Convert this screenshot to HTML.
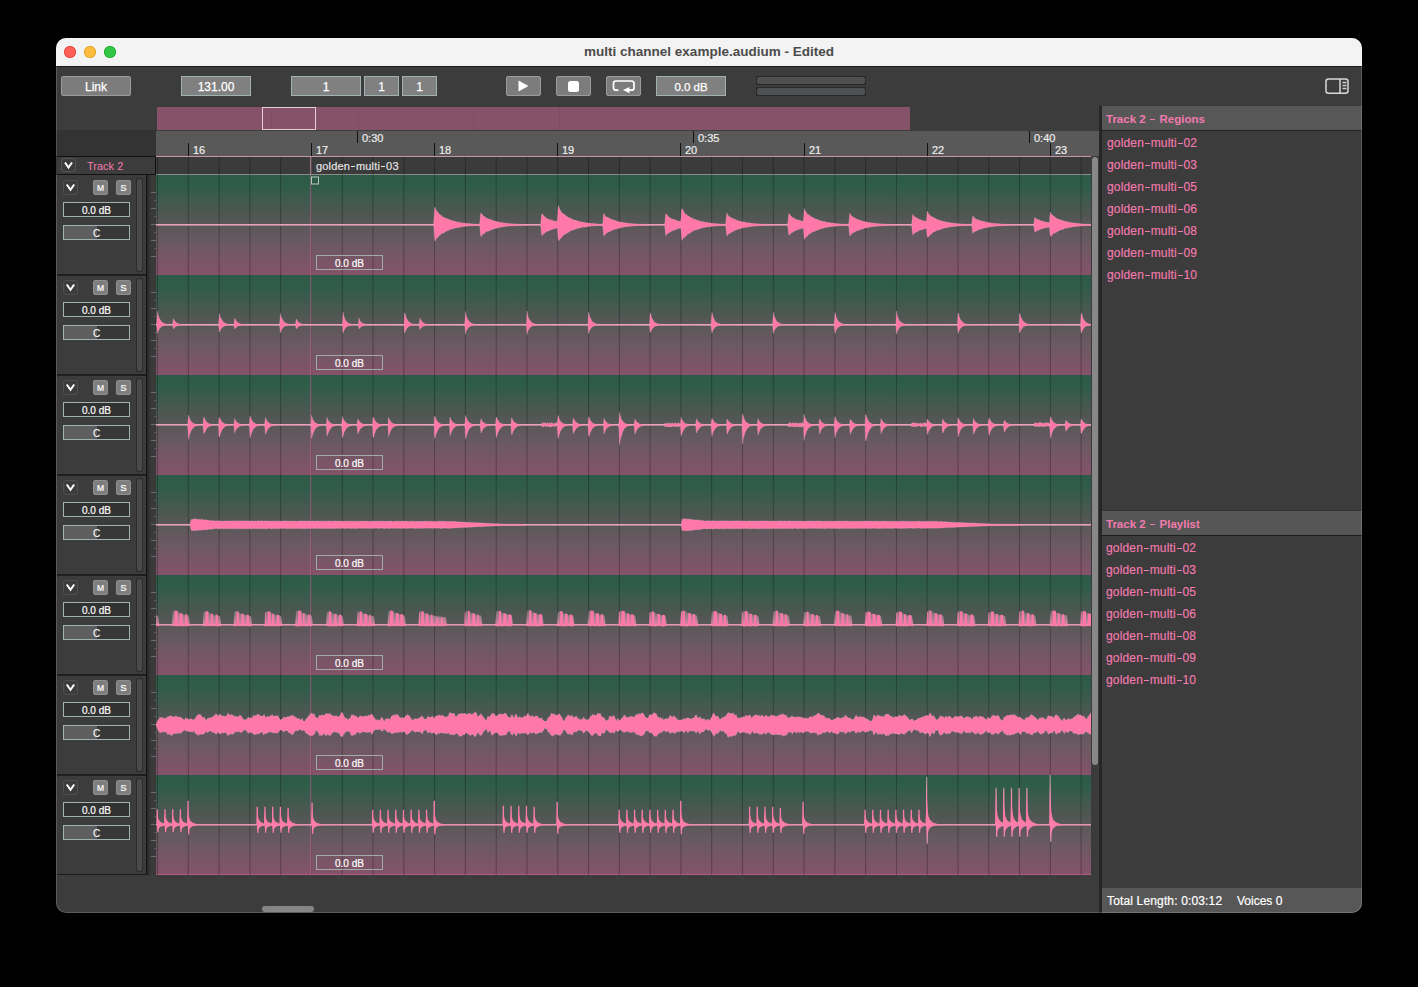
<!DOCTYPE html>
<html><head><meta charset="utf-8">
<style>
*{margin:0;padding:0;box-sizing:border-box}
html,body{width:1418px;height:987px;background:#000;overflow:hidden;font-family:"Liberation Sans",sans-serif}
.a{position:absolute;white-space:nowrap}
#win{position:absolute;left:56px;top:38px;width:1306px;height:875px;border-radius:10px;overflow:hidden;background:#3c3c3c}
#bord{position:absolute;left:56px;top:38px;width:1306px;height:875px;border-radius:10px;box-shadow:inset 0 0 0 1px rgba(255,255,255,0.16);pointer-events:none}
</style></head><body>
<div id="win">
<div class="a " style="left:0px;top:0px;width:1306px;height:28px;background:#f3f3f3"></div>
<div class="a " style="left:0px;top:28px;width:1306px;height:1px;background:#1b1b1b"></div>
<div class="a" style="left:8px;top:8px;width:12px;height:12px;border-radius:50%;background:#fe5f57;box-shadow:inset 0 0 0 0.8px #e0443e"></div>
<div class="a" style="left:28px;top:8px;width:12px;height:12px;border-radius:50%;background:#fdbc40;box-shadow:inset 0 0 0 0.8px #dea123"></div>
<div class="a" style="left:48px;top:8px;width:12px;height:12px;border-radius:50%;background:#33c748;box-shadow:inset 0 0 0 0.8px #1aab29"></div>
<div class="a " style="left:0px;top:0px;width:1306px;height:28px;text-align:center;line-height:27px;font-weight:bold;font-size:13.5px;color:#4b4b4b">multi channel example.audium - Edited</div>
<div class="a " style="left:5px;top:38px;width:70px;height:20px;background:#7c7c7c;border:1px solid #9b9b9b;border-radius:2px"></div>
<div class="a " style="left:5px;top:38px;width:70px;height:20px;color:#fff;font-size:12px;text-align:center;line-height:22px;-webkit-text-stroke:0.25px #fff">Link</div>
<div class="a " style="left:125px;top:38px;width:70px;height:20px;background:#808080;border:1px solid #a2b2b2;color:#fff;font-size:12px;text-align:center;line-height:20px;-webkit-text-stroke:0.25px #fff">131.00</div>
<div class="a " style="left:235px;top:38px;width:70px;height:20px;background:#808080;border:1px solid #a2b2b2;color:#fff;font-size:12px;text-align:center;line-height:20px;-webkit-text-stroke:0.25px #fff">1</div>
<div class="a " style="left:308px;top:38px;width:35px;height:20px;background:#808080;border:1px solid #a2b2b2;color:#fff;font-size:12px;text-align:center;line-height:20px;-webkit-text-stroke:0.25px #fff">1</div>
<div class="a " style="left:346px;top:38px;width:35px;height:20px;background:#808080;border:1px solid #a2b2b2;color:#fff;font-size:12px;text-align:center;line-height:20px;-webkit-text-stroke:0.25px #fff">1</div>
<div class="a " style="left:450px;top:38px;width:35px;height:20px;background:#7c7c7c;border:1px solid #9b9b9b;border-radius:2px"><svg width="35" height="20" style="position:absolute;left:-1px;top:-1px"><path d="M12.5 4.5 L12.5 15.5 L22.5 10 Z" fill="#fff"/></svg></div>
<div class="a " style="left:500px;top:38px;width:35px;height:20px;background:#7c7c7c;border:1px solid #9b9b9b;border-radius:2px"><svg width="35" height="20" style="position:absolute;left:-1px;top:-1px"><rect x="12" y="5" width="11" height="11" rx="2.5" fill="#fff"/></svg></div>
<div class="a " style="left:550px;top:38px;width:35px;height:20px;background:#7c7c7c;border:1px solid #9b9b9b;border-radius:2px"><svg width="35" height="20" style="position:absolute;left:-1px;top:-1px"><path d="M12.5 14.2 H10 Q7.5 14.2 7.5 11.7 V7.5 Q7.5 5 10 5 H25.5 Q28 5 28 7.5 V11.7 Q28 14.2 25.5 14.2 H23" stroke="#fff" stroke-width="1.7" fill="none"/><path d="M23.5 11 L23.5 17.2 L17 14.1 Z" fill="#fff"/></svg></div>
<div class="a " style="left:600px;top:38px;width:70px;height:20px;background:#808080;border:1px solid #a2b2b2;color:#fff;font-size:11.5px;text-align:center;line-height:20px;-webkit-text-stroke:0.25px #fff">0.0 dB</div>
<div class="a " style="left:700px;top:38px;width:110px;height:9px;background:#2a2a2a"></div>
<div class="a " style="left:701px;top:39px;width:108px;height:7px;background:#4e5052;border-radius:2px"></div>
<div class="a " style="left:700px;top:49px;width:110px;height:9px;background:#2a2a2a"></div>
<div class="a " style="left:701px;top:50px;width:108px;height:7px;background:#4e5052;border-radius:2px"></div>
<svg class="a" style="left:1269px;top:40px" width="24" height="17"><rect x="1" y="0.9" width="22" height="14.4" rx="2.5" stroke="#d8d8d8" stroke-width="1.5" fill="none"/><line x1="15" y1="1" x2="15" y2="15.3" stroke="#d8d8d8" stroke-width="1.5"/><path d="M17.5 4.5h4M17.5 7.5h4M17.5 10.5h4" stroke="#cfcfcf" stroke-width="1.3"/></svg>
<div class="a " style="left:101px;top:69px;width:753px;height:23px;background:#85526a"></div>
<div class="a " style="left:215px;top:69px;width:1px;height:23px;background:rgba(0,0,0,0.05)"></div>
<div class="a " style="left:302px;top:69px;width:1px;height:23px;background:rgba(0,0,0,0.05)"></div>
<div class="a " style="left:417px;top:69px;width:1px;height:23px;background:rgba(0,0,0,0.05)"></div>
<div class="a " style="left:503px;top:69px;width:1px;height:23px;background:rgba(0,0,0,0.05)"></div>
<div class="a " style="left:206px;top:69px;width:54px;height:23px;border:1.5px solid #e6cdd6"></div>
<div class="a " style="left:0px;top:92px;width:100px;height:27px;background:#333"></div>
<div class="a " style="left:100px;top:93px;width:943px;height:25px;background:#595959"></div>
<div class="a " style="left:100px;top:118px;width:935px;height:1px;background:#c496a8"></div>
<div class="a " style="left:132px;top:105px;width:1px;height:13px;background:#111"></div>
<div class="a " style="left:137px;top:105px;width:25px;height:13px;color:#eee;font-size:11px;line-height:15px;-webkit-text-stroke:0.2px #eee">16</div>
<div class="a " style="left:255px;top:105px;width:1px;height:13px;background:#111"></div>
<div class="a " style="left:260px;top:105px;width:25px;height:13px;color:#eee;font-size:11px;line-height:15px;-webkit-text-stroke:0.2px #eee">17</div>
<div class="a " style="left:378px;top:105px;width:1px;height:13px;background:#111"></div>
<div class="a " style="left:383px;top:105px;width:25px;height:13px;color:#eee;font-size:11px;line-height:15px;-webkit-text-stroke:0.2px #eee">18</div>
<div class="a " style="left:501px;top:105px;width:1px;height:13px;background:#111"></div>
<div class="a " style="left:506px;top:105px;width:25px;height:13px;color:#eee;font-size:11px;line-height:15px;-webkit-text-stroke:0.2px #eee">19</div>
<div class="a " style="left:624px;top:105px;width:1px;height:13px;background:#111"></div>
<div class="a " style="left:629px;top:105px;width:25px;height:13px;color:#eee;font-size:11px;line-height:15px;-webkit-text-stroke:0.2px #eee">20</div>
<div class="a " style="left:748px;top:105px;width:1px;height:13px;background:#111"></div>
<div class="a " style="left:753px;top:105px;width:25px;height:13px;color:#eee;font-size:11px;line-height:15px;-webkit-text-stroke:0.2px #eee">21</div>
<div class="a " style="left:871px;top:105px;width:1px;height:13px;background:#111"></div>
<div class="a " style="left:876px;top:105px;width:25px;height:13px;color:#eee;font-size:11px;line-height:15px;-webkit-text-stroke:0.2px #eee">22</div>
<div class="a " style="left:994px;top:105px;width:1px;height:13px;background:#111"></div>
<div class="a " style="left:999px;top:105px;width:25px;height:13px;color:#eee;font-size:11px;line-height:15px;-webkit-text-stroke:0.2px #eee">23</div>
<div class="a " style="left:301px;top:93px;width:1px;height:12px;background:#111"></div>
<div class="a " style="left:306px;top:93px;width:35px;height:12px;color:#eee;font-size:11px;line-height:14px;-webkit-text-stroke:0.2px #eee">0:30</div>
<div class="a " style="left:637px;top:93px;width:1px;height:12px;background:#111"></div>
<div class="a " style="left:642px;top:93px;width:35px;height:12px;color:#eee;font-size:11px;line-height:14px;-webkit-text-stroke:0.2px #eee">0:35</div>
<div class="a " style="left:973px;top:93px;width:1px;height:12px;background:#111"></div>
<div class="a " style="left:978px;top:93px;width:35px;height:12px;color:#eee;font-size:11px;line-height:14px;-webkit-text-stroke:0.2px #eee">0:40</div>
<div class="a " style="left:0px;top:118px;width:100px;height:19px;background:#111"></div>
<div class="a " style="left:1px;top:119px;width:98px;height:17px;background:#3c3c3c"></div>
<div class="a " style="left:5px;top:120px;width:15px;height:14px;border:1px solid #555;border-radius:3px"></div>
<svg class="a" style="left:5px;top:120px" width="15" height="14"><path d="M4 4.5 L7.5 9.5 L11 4.5" stroke="#fff" stroke-width="2" fill="none"/></svg>
<div class="a " style="left:31px;top:120px;width:63px;height:16px;color:#f27bae;font-size:11px;line-height:17px">Track 2</div>
<div class="a " style="left:100px;top:119px;width:935px;height:17px;background:#3b3b3b"></div>
<div class="a " style="left:100px;top:136px;width:935px;height:1px;background:#8c8c8c"></div>
<div class="a " style="left:1035px;top:119px;width:8px;height:718px;background:#3b3b3b"></div>
<div class="a " style="left:1036px;top:119px;width:6px;height:608px;background:#888;border-radius:3px"></div>
<div class="a " style="left:0px;top:137px;width:90px;height:100px;background:#3c3c3c"></div>
<div class="a " style="left:90px;top:137px;width:1px;height:100px;background:#131313"></div>
<div class="a " style="left:91px;top:137px;width:9px;height:100px;background:linear-gradient(to right,#262626,#393939 40%,#3a3a3a 85%,#363636)"></div>
<div class="a " style="left:7px;top:142px;width:15px;height:15px;border:1px solid #4f4f4f;border-radius:3px"></div>
<svg class="a" style="left:7px;top:142px" width="15" height="15"><path d="M3.8 4.5 L7.5 9.8 L11.2 4.5" stroke="#fff" stroke-width="2" fill="none"/></svg>
<div class="a " style="left:37px;top:142px;width:15px;height:15px;background:#7e7e7e;border:1px solid #8e8e8e;border-radius:2px;color:#fff;font-size:8.5px;text-align:center;line-height:14px;-webkit-text-stroke:0.2px #fff">M</div>
<div class="a " style="left:60px;top:142px;width:15px;height:15px;background:#7e7e7e;border:1px solid #8e8e8e;border-radius:2px;color:#fff;font-size:9.5px;text-align:center;line-height:14px;-webkit-text-stroke:0.2px #fff">S</div>
<div class="a " style="left:7px;top:164px;width:67px;height:15px;background:#323232;border:1px solid #a2b2b2;color:#fff;font-size:10px;text-align:center;line-height:15px;-webkit-text-stroke:0.2px #fff">0.0 dB</div>
<div class="a " style="left:7px;top:187px;width:67px;height:15px;background:#383838;border:1px solid #a2b2b2"></div>
<div class="a " style="left:8px;top:188px;width:33px;height:13px;background:#5e5e5e"></div>
<div class="a " style="left:7px;top:187px;width:67px;height:15px;color:#fff;font-size:10px;text-align:center;line-height:17px;-webkit-text-stroke:0.1px #fff">C</div>
<div class="a " style="left:80px;top:140px;width:7px;height:94px;background:#2c2c2c;border-radius:2px"></div>
<div class="a " style="left:81px;top:141px;width:5px;height:92px;background:#4a4a4a;border-radius:2px"></div>
<div class="a " style="left:95px;top:154px;width:5px;height:1px;background:#6a6a6a"></div>
<div class="a " style="left:98px;top:162px;width:2px;height:1px;background:#5a5a5a"></div>
<div class="a " style="left:95px;top:170px;width:5px;height:1px;background:#6a6a6a"></div>
<div class="a " style="left:98px;top:178px;width:2px;height:1px;background:#5a5a5a"></div>
<div class="a " style="left:95px;top:186px;width:5px;height:1px;background:#6a6a6a"></div>
<div class="a " style="left:98px;top:194px;width:2px;height:1px;background:#5a5a5a"></div>
<div class="a " style="left:95px;top:202px;width:5px;height:1px;background:#6a6a6a"></div>
<div class="a " style="left:98px;top:210px;width:2px;height:1px;background:#5a5a5a"></div>
<div class="a " style="left:95px;top:218px;width:5px;height:1px;background:#6a6a6a"></div>
<div class="a " style="left:100px;top:137px;width:935px;height:100px;background:linear-gradient(#2d5b47 0%,#305c4a 12%,#4f5752 40%,#5a5859 50%,#6c5962 70%,#85526a 100%)"></div>
<div class="a " style="left:0px;top:237px;width:90px;height:100px;background:#3c3c3c"></div>
<div class="a " style="left:90px;top:237px;width:1px;height:100px;background:#131313"></div>
<div class="a " style="left:91px;top:237px;width:9px;height:100px;background:linear-gradient(to right,#262626,#393939 40%,#3a3a3a 85%,#363636)"></div>
<div class="a " style="left:7px;top:242px;width:15px;height:15px;border:1px solid #4f4f4f;border-radius:3px"></div>
<svg class="a" style="left:7px;top:242px" width="15" height="15"><path d="M3.8 4.5 L7.5 9.8 L11.2 4.5" stroke="#fff" stroke-width="2" fill="none"/></svg>
<div class="a " style="left:37px;top:242px;width:15px;height:15px;background:#7e7e7e;border:1px solid #8e8e8e;border-radius:2px;color:#fff;font-size:8.5px;text-align:center;line-height:14px;-webkit-text-stroke:0.2px #fff">M</div>
<div class="a " style="left:60px;top:242px;width:15px;height:15px;background:#7e7e7e;border:1px solid #8e8e8e;border-radius:2px;color:#fff;font-size:9.5px;text-align:center;line-height:14px;-webkit-text-stroke:0.2px #fff">S</div>
<div class="a " style="left:7px;top:264px;width:67px;height:15px;background:#323232;border:1px solid #a2b2b2;color:#fff;font-size:10px;text-align:center;line-height:15px;-webkit-text-stroke:0.2px #fff">0.0 dB</div>
<div class="a " style="left:7px;top:287px;width:67px;height:15px;background:#383838;border:1px solid #a2b2b2"></div>
<div class="a " style="left:8px;top:288px;width:33px;height:13px;background:#5e5e5e"></div>
<div class="a " style="left:7px;top:287px;width:67px;height:15px;color:#fff;font-size:10px;text-align:center;line-height:17px;-webkit-text-stroke:0.1px #fff">C</div>
<div class="a " style="left:80px;top:240px;width:7px;height:94px;background:#2c2c2c;border-radius:2px"></div>
<div class="a " style="left:81px;top:241px;width:5px;height:92px;background:#4a4a4a;border-radius:2px"></div>
<div class="a " style="left:95px;top:254px;width:5px;height:1px;background:#6a6a6a"></div>
<div class="a " style="left:98px;top:262px;width:2px;height:1px;background:#5a5a5a"></div>
<div class="a " style="left:95px;top:270px;width:5px;height:1px;background:#6a6a6a"></div>
<div class="a " style="left:98px;top:278px;width:2px;height:1px;background:#5a5a5a"></div>
<div class="a " style="left:95px;top:286px;width:5px;height:1px;background:#6a6a6a"></div>
<div class="a " style="left:98px;top:294px;width:2px;height:1px;background:#5a5a5a"></div>
<div class="a " style="left:95px;top:302px;width:5px;height:1px;background:#6a6a6a"></div>
<div class="a " style="left:98px;top:310px;width:2px;height:1px;background:#5a5a5a"></div>
<div class="a " style="left:95px;top:318px;width:5px;height:1px;background:#6a6a6a"></div>
<div class="a " style="left:100px;top:237px;width:935px;height:100px;background:linear-gradient(#2d5b47 0%,#305c4a 12%,#4f5752 40%,#5a5859 50%,#6c5962 70%,#85526a 100%)"></div>
<div class="a " style="left:0px;top:337px;width:90px;height:100px;background:#3c3c3c"></div>
<div class="a " style="left:90px;top:337px;width:1px;height:100px;background:#131313"></div>
<div class="a " style="left:91px;top:337px;width:9px;height:100px;background:linear-gradient(to right,#262626,#393939 40%,#3a3a3a 85%,#363636)"></div>
<div class="a " style="left:7px;top:342px;width:15px;height:15px;border:1px solid #4f4f4f;border-radius:3px"></div>
<svg class="a" style="left:7px;top:342px" width="15" height="15"><path d="M3.8 4.5 L7.5 9.8 L11.2 4.5" stroke="#fff" stroke-width="2" fill="none"/></svg>
<div class="a " style="left:37px;top:342px;width:15px;height:15px;background:#7e7e7e;border:1px solid #8e8e8e;border-radius:2px;color:#fff;font-size:8.5px;text-align:center;line-height:14px;-webkit-text-stroke:0.2px #fff">M</div>
<div class="a " style="left:60px;top:342px;width:15px;height:15px;background:#7e7e7e;border:1px solid #8e8e8e;border-radius:2px;color:#fff;font-size:9.5px;text-align:center;line-height:14px;-webkit-text-stroke:0.2px #fff">S</div>
<div class="a " style="left:7px;top:364px;width:67px;height:15px;background:#323232;border:1px solid #a2b2b2;color:#fff;font-size:10px;text-align:center;line-height:15px;-webkit-text-stroke:0.2px #fff">0.0 dB</div>
<div class="a " style="left:7px;top:387px;width:67px;height:15px;background:#383838;border:1px solid #a2b2b2"></div>
<div class="a " style="left:8px;top:388px;width:33px;height:13px;background:#5e5e5e"></div>
<div class="a " style="left:7px;top:387px;width:67px;height:15px;color:#fff;font-size:10px;text-align:center;line-height:17px;-webkit-text-stroke:0.1px #fff">C</div>
<div class="a " style="left:80px;top:340px;width:7px;height:94px;background:#2c2c2c;border-radius:2px"></div>
<div class="a " style="left:81px;top:341px;width:5px;height:92px;background:#4a4a4a;border-radius:2px"></div>
<div class="a " style="left:95px;top:354px;width:5px;height:1px;background:#6a6a6a"></div>
<div class="a " style="left:98px;top:362px;width:2px;height:1px;background:#5a5a5a"></div>
<div class="a " style="left:95px;top:370px;width:5px;height:1px;background:#6a6a6a"></div>
<div class="a " style="left:98px;top:378px;width:2px;height:1px;background:#5a5a5a"></div>
<div class="a " style="left:95px;top:386px;width:5px;height:1px;background:#6a6a6a"></div>
<div class="a " style="left:98px;top:394px;width:2px;height:1px;background:#5a5a5a"></div>
<div class="a " style="left:95px;top:402px;width:5px;height:1px;background:#6a6a6a"></div>
<div class="a " style="left:98px;top:410px;width:2px;height:1px;background:#5a5a5a"></div>
<div class="a " style="left:95px;top:418px;width:5px;height:1px;background:#6a6a6a"></div>
<div class="a " style="left:100px;top:337px;width:935px;height:100px;background:linear-gradient(#2d5b47 0%,#305c4a 12%,#4f5752 40%,#5a5859 50%,#6c5962 70%,#85526a 100%)"></div>
<div class="a " style="left:0px;top:437px;width:90px;height:100px;background:#3c3c3c"></div>
<div class="a " style="left:90px;top:437px;width:1px;height:100px;background:#131313"></div>
<div class="a " style="left:91px;top:437px;width:9px;height:100px;background:linear-gradient(to right,#262626,#393939 40%,#3a3a3a 85%,#363636)"></div>
<div class="a " style="left:7px;top:442px;width:15px;height:15px;border:1px solid #4f4f4f;border-radius:3px"></div>
<svg class="a" style="left:7px;top:442px" width="15" height="15"><path d="M3.8 4.5 L7.5 9.8 L11.2 4.5" stroke="#fff" stroke-width="2" fill="none"/></svg>
<div class="a " style="left:37px;top:442px;width:15px;height:15px;background:#7e7e7e;border:1px solid #8e8e8e;border-radius:2px;color:#fff;font-size:8.5px;text-align:center;line-height:14px;-webkit-text-stroke:0.2px #fff">M</div>
<div class="a " style="left:60px;top:442px;width:15px;height:15px;background:#7e7e7e;border:1px solid #8e8e8e;border-radius:2px;color:#fff;font-size:9.5px;text-align:center;line-height:14px;-webkit-text-stroke:0.2px #fff">S</div>
<div class="a " style="left:7px;top:464px;width:67px;height:15px;background:#323232;border:1px solid #a2b2b2;color:#fff;font-size:10px;text-align:center;line-height:15px;-webkit-text-stroke:0.2px #fff">0.0 dB</div>
<div class="a " style="left:7px;top:487px;width:67px;height:15px;background:#383838;border:1px solid #a2b2b2"></div>
<div class="a " style="left:8px;top:488px;width:33px;height:13px;background:#5e5e5e"></div>
<div class="a " style="left:7px;top:487px;width:67px;height:15px;color:#fff;font-size:10px;text-align:center;line-height:17px;-webkit-text-stroke:0.1px #fff">C</div>
<div class="a " style="left:80px;top:440px;width:7px;height:94px;background:#2c2c2c;border-radius:2px"></div>
<div class="a " style="left:81px;top:441px;width:5px;height:92px;background:#4a4a4a;border-radius:2px"></div>
<div class="a " style="left:95px;top:454px;width:5px;height:1px;background:#6a6a6a"></div>
<div class="a " style="left:98px;top:462px;width:2px;height:1px;background:#5a5a5a"></div>
<div class="a " style="left:95px;top:470px;width:5px;height:1px;background:#6a6a6a"></div>
<div class="a " style="left:98px;top:478px;width:2px;height:1px;background:#5a5a5a"></div>
<div class="a " style="left:95px;top:486px;width:5px;height:1px;background:#6a6a6a"></div>
<div class="a " style="left:98px;top:494px;width:2px;height:1px;background:#5a5a5a"></div>
<div class="a " style="left:95px;top:502px;width:5px;height:1px;background:#6a6a6a"></div>
<div class="a " style="left:98px;top:510px;width:2px;height:1px;background:#5a5a5a"></div>
<div class="a " style="left:95px;top:518px;width:5px;height:1px;background:#6a6a6a"></div>
<div class="a " style="left:100px;top:437px;width:935px;height:100px;background:linear-gradient(#2d5b47 0%,#305c4a 12%,#4f5752 40%,#5a5859 50%,#6c5962 70%,#85526a 100%)"></div>
<div class="a " style="left:0px;top:537px;width:90px;height:100px;background:#3c3c3c"></div>
<div class="a " style="left:90px;top:537px;width:1px;height:100px;background:#131313"></div>
<div class="a " style="left:91px;top:537px;width:9px;height:100px;background:linear-gradient(to right,#262626,#393939 40%,#3a3a3a 85%,#363636)"></div>
<div class="a " style="left:7px;top:542px;width:15px;height:15px;border:1px solid #4f4f4f;border-radius:3px"></div>
<svg class="a" style="left:7px;top:542px" width="15" height="15"><path d="M3.8 4.5 L7.5 9.8 L11.2 4.5" stroke="#fff" stroke-width="2" fill="none"/></svg>
<div class="a " style="left:37px;top:542px;width:15px;height:15px;background:#7e7e7e;border:1px solid #8e8e8e;border-radius:2px;color:#fff;font-size:8.5px;text-align:center;line-height:14px;-webkit-text-stroke:0.2px #fff">M</div>
<div class="a " style="left:60px;top:542px;width:15px;height:15px;background:#7e7e7e;border:1px solid #8e8e8e;border-radius:2px;color:#fff;font-size:9.5px;text-align:center;line-height:14px;-webkit-text-stroke:0.2px #fff">S</div>
<div class="a " style="left:7px;top:564px;width:67px;height:15px;background:#323232;border:1px solid #a2b2b2;color:#fff;font-size:10px;text-align:center;line-height:15px;-webkit-text-stroke:0.2px #fff">0.0 dB</div>
<div class="a " style="left:7px;top:587px;width:67px;height:15px;background:#383838;border:1px solid #a2b2b2"></div>
<div class="a " style="left:8px;top:588px;width:33px;height:13px;background:#5e5e5e"></div>
<div class="a " style="left:7px;top:587px;width:67px;height:15px;color:#fff;font-size:10px;text-align:center;line-height:17px;-webkit-text-stroke:0.1px #fff">C</div>
<div class="a " style="left:80px;top:540px;width:7px;height:94px;background:#2c2c2c;border-radius:2px"></div>
<div class="a " style="left:81px;top:541px;width:5px;height:92px;background:#4a4a4a;border-radius:2px"></div>
<div class="a " style="left:95px;top:554px;width:5px;height:1px;background:#6a6a6a"></div>
<div class="a " style="left:98px;top:562px;width:2px;height:1px;background:#5a5a5a"></div>
<div class="a " style="left:95px;top:570px;width:5px;height:1px;background:#6a6a6a"></div>
<div class="a " style="left:98px;top:578px;width:2px;height:1px;background:#5a5a5a"></div>
<div class="a " style="left:95px;top:586px;width:5px;height:1px;background:#6a6a6a"></div>
<div class="a " style="left:98px;top:594px;width:2px;height:1px;background:#5a5a5a"></div>
<div class="a " style="left:95px;top:602px;width:5px;height:1px;background:#6a6a6a"></div>
<div class="a " style="left:98px;top:610px;width:2px;height:1px;background:#5a5a5a"></div>
<div class="a " style="left:95px;top:618px;width:5px;height:1px;background:#6a6a6a"></div>
<div class="a " style="left:100px;top:537px;width:935px;height:100px;background:linear-gradient(#2d5b47 0%,#305c4a 12%,#4f5752 40%,#5a5859 50%,#6c5962 70%,#85526a 100%)"></div>
<div class="a " style="left:0px;top:637px;width:90px;height:100px;background:#3c3c3c"></div>
<div class="a " style="left:90px;top:637px;width:1px;height:100px;background:#131313"></div>
<div class="a " style="left:91px;top:637px;width:9px;height:100px;background:linear-gradient(to right,#262626,#393939 40%,#3a3a3a 85%,#363636)"></div>
<div class="a " style="left:7px;top:642px;width:15px;height:15px;border:1px solid #4f4f4f;border-radius:3px"></div>
<svg class="a" style="left:7px;top:642px" width="15" height="15"><path d="M3.8 4.5 L7.5 9.8 L11.2 4.5" stroke="#fff" stroke-width="2" fill="none"/></svg>
<div class="a " style="left:37px;top:642px;width:15px;height:15px;background:#7e7e7e;border:1px solid #8e8e8e;border-radius:2px;color:#fff;font-size:8.5px;text-align:center;line-height:14px;-webkit-text-stroke:0.2px #fff">M</div>
<div class="a " style="left:60px;top:642px;width:15px;height:15px;background:#7e7e7e;border:1px solid #8e8e8e;border-radius:2px;color:#fff;font-size:9.5px;text-align:center;line-height:14px;-webkit-text-stroke:0.2px #fff">S</div>
<div class="a " style="left:7px;top:664px;width:67px;height:15px;background:#323232;border:1px solid #a2b2b2;color:#fff;font-size:10px;text-align:center;line-height:15px;-webkit-text-stroke:0.2px #fff">0.0 dB</div>
<div class="a " style="left:7px;top:687px;width:67px;height:15px;background:#383838;border:1px solid #a2b2b2"></div>
<div class="a " style="left:8px;top:688px;width:33px;height:13px;background:#5e5e5e"></div>
<div class="a " style="left:7px;top:687px;width:67px;height:15px;color:#fff;font-size:10px;text-align:center;line-height:17px;-webkit-text-stroke:0.1px #fff">C</div>
<div class="a " style="left:80px;top:640px;width:7px;height:94px;background:#2c2c2c;border-radius:2px"></div>
<div class="a " style="left:81px;top:641px;width:5px;height:92px;background:#4a4a4a;border-radius:2px"></div>
<div class="a " style="left:95px;top:654px;width:5px;height:1px;background:#6a6a6a"></div>
<div class="a " style="left:98px;top:662px;width:2px;height:1px;background:#5a5a5a"></div>
<div class="a " style="left:95px;top:670px;width:5px;height:1px;background:#6a6a6a"></div>
<div class="a " style="left:98px;top:678px;width:2px;height:1px;background:#5a5a5a"></div>
<div class="a " style="left:95px;top:686px;width:5px;height:1px;background:#6a6a6a"></div>
<div class="a " style="left:98px;top:694px;width:2px;height:1px;background:#5a5a5a"></div>
<div class="a " style="left:95px;top:702px;width:5px;height:1px;background:#6a6a6a"></div>
<div class="a " style="left:98px;top:710px;width:2px;height:1px;background:#5a5a5a"></div>
<div class="a " style="left:95px;top:718px;width:5px;height:1px;background:#6a6a6a"></div>
<div class="a " style="left:100px;top:637px;width:935px;height:100px;background:linear-gradient(#2d5b47 0%,#305c4a 12%,#4f5752 40%,#5a5859 50%,#6c5962 70%,#85526a 100%)"></div>
<div class="a " style="left:0px;top:737px;width:90px;height:100px;background:#3c3c3c"></div>
<div class="a " style="left:90px;top:737px;width:1px;height:100px;background:#131313"></div>
<div class="a " style="left:91px;top:737px;width:9px;height:100px;background:linear-gradient(to right,#262626,#393939 40%,#3a3a3a 85%,#363636)"></div>
<div class="a " style="left:7px;top:742px;width:15px;height:15px;border:1px solid #4f4f4f;border-radius:3px"></div>
<svg class="a" style="left:7px;top:742px" width="15" height="15"><path d="M3.8 4.5 L7.5 9.8 L11.2 4.5" stroke="#fff" stroke-width="2" fill="none"/></svg>
<div class="a " style="left:37px;top:742px;width:15px;height:15px;background:#7e7e7e;border:1px solid #8e8e8e;border-radius:2px;color:#fff;font-size:8.5px;text-align:center;line-height:14px;-webkit-text-stroke:0.2px #fff">M</div>
<div class="a " style="left:60px;top:742px;width:15px;height:15px;background:#7e7e7e;border:1px solid #8e8e8e;border-radius:2px;color:#fff;font-size:9.5px;text-align:center;line-height:14px;-webkit-text-stroke:0.2px #fff">S</div>
<div class="a " style="left:7px;top:764px;width:67px;height:15px;background:#323232;border:1px solid #a2b2b2;color:#fff;font-size:10px;text-align:center;line-height:15px;-webkit-text-stroke:0.2px #fff">0.0 dB</div>
<div class="a " style="left:7px;top:787px;width:67px;height:15px;background:#383838;border:1px solid #a2b2b2"></div>
<div class="a " style="left:8px;top:788px;width:33px;height:13px;background:#5e5e5e"></div>
<div class="a " style="left:7px;top:787px;width:67px;height:15px;color:#fff;font-size:10px;text-align:center;line-height:17px;-webkit-text-stroke:0.1px #fff">C</div>
<div class="a " style="left:80px;top:740px;width:7px;height:94px;background:#2c2c2c;border-radius:2px"></div>
<div class="a " style="left:81px;top:741px;width:5px;height:92px;background:#4a4a4a;border-radius:2px"></div>
<div class="a " style="left:95px;top:754px;width:5px;height:1px;background:#6a6a6a"></div>
<div class="a " style="left:98px;top:762px;width:2px;height:1px;background:#5a5a5a"></div>
<div class="a " style="left:95px;top:770px;width:5px;height:1px;background:#6a6a6a"></div>
<div class="a " style="left:98px;top:778px;width:2px;height:1px;background:#5a5a5a"></div>
<div class="a " style="left:95px;top:786px;width:5px;height:1px;background:#6a6a6a"></div>
<div class="a " style="left:98px;top:794px;width:2px;height:1px;background:#5a5a5a"></div>
<div class="a " style="left:95px;top:802px;width:5px;height:1px;background:#6a6a6a"></div>
<div class="a " style="left:98px;top:810px;width:2px;height:1px;background:#5a5a5a"></div>
<div class="a " style="left:95px;top:818px;width:5px;height:1px;background:#6a6a6a"></div>
<div class="a " style="left:100px;top:737px;width:935px;height:100px;background:linear-gradient(#2d5b47 0%,#305c4a 12%,#4f5752 40%,#5a5859 50%,#6c5962 70%,#85526a 100%)"></div>
<div class="a " style="left:1px;top:236px;width:89px;height:2px;background:#1f1f1f"></div>
<div class="a " style="left:1px;top:336px;width:89px;height:2px;background:#1f1f1f"></div>
<div class="a " style="left:1px;top:436px;width:89px;height:2px;background:#1f1f1f"></div>
<div class="a " style="left:1px;top:536px;width:89px;height:2px;background:#1f1f1f"></div>
<div class="a " style="left:1px;top:636px;width:89px;height:2px;background:#1f1f1f"></div>
<div class="a " style="left:1px;top:736px;width:89px;height:2px;background:#1f1f1f"></div>
<div class="a " style="left:1px;top:836px;width:89px;height:1px;background:#1a1a1a"></div>
<div class="a " style="left:100px;top:836px;width:935px;height:1px;background:#b25c84"></div>
<div class="a " style="left:1043px;top:68px;width:3px;height:807px;background:#262626"></div>
<div class="a " style="left:1046px;top:68px;width:260px;height:24px;background:#575757"></div>
<div class="a " style="left:1046px;top:92px;width:260px;height:1px;background:#222"></div>
<div class="a " style="left:1050px;top:69px;width:194px;height:24px;color:#f27bae;font-weight:bold;font-size:11.5px;line-height:24px">Track 2 <i style="display:inline-block;width:5.5px;height:1.2px;background:currentColor;vertical-align:3.3px;margin:0 1px"></i> Regions</div>
<div class="a " style="left:1051px;top:98px;width:193px;height:15px;color:#f27bae;font-size:12px;letter-spacing:0.17px;line-height:15px;-webkit-text-stroke:0.15px #f27bae">golden<i style="display:inline-block;width:5px;height:1.3px;background:currentColor;vertical-align:3px;margin:0 0.8px"></i>multi<i style="display:inline-block;width:5px;height:1.3px;background:currentColor;vertical-align:3px;margin:0 0.8px"></i>02</div>
<div class="a " style="left:1051px;top:120px;width:193px;height:15px;color:#f27bae;font-size:12px;letter-spacing:0.17px;line-height:15px;-webkit-text-stroke:0.15px #f27bae">golden<i style="display:inline-block;width:5px;height:1.3px;background:currentColor;vertical-align:3px;margin:0 0.8px"></i>multi<i style="display:inline-block;width:5px;height:1.3px;background:currentColor;vertical-align:3px;margin:0 0.8px"></i>03</div>
<div class="a " style="left:1051px;top:142px;width:193px;height:15px;color:#f27bae;font-size:12px;letter-spacing:0.17px;line-height:15px;-webkit-text-stroke:0.15px #f27bae">golden<i style="display:inline-block;width:5px;height:1.3px;background:currentColor;vertical-align:3px;margin:0 0.8px"></i>multi<i style="display:inline-block;width:5px;height:1.3px;background:currentColor;vertical-align:3px;margin:0 0.8px"></i>05</div>
<div class="a " style="left:1051px;top:164px;width:193px;height:15px;color:#f27bae;font-size:12px;letter-spacing:0.17px;line-height:15px;-webkit-text-stroke:0.15px #f27bae">golden<i style="display:inline-block;width:5px;height:1.3px;background:currentColor;vertical-align:3px;margin:0 0.8px"></i>multi<i style="display:inline-block;width:5px;height:1.3px;background:currentColor;vertical-align:3px;margin:0 0.8px"></i>06</div>
<div class="a " style="left:1051px;top:186px;width:193px;height:15px;color:#f27bae;font-size:12px;letter-spacing:0.17px;line-height:15px;-webkit-text-stroke:0.15px #f27bae">golden<i style="display:inline-block;width:5px;height:1.3px;background:currentColor;vertical-align:3px;margin:0 0.8px"></i>multi<i style="display:inline-block;width:5px;height:1.3px;background:currentColor;vertical-align:3px;margin:0 0.8px"></i>08</div>
<div class="a " style="left:1051px;top:208px;width:193px;height:15px;color:#f27bae;font-size:12px;letter-spacing:0.17px;line-height:15px;-webkit-text-stroke:0.15px #f27bae">golden<i style="display:inline-block;width:5px;height:1.3px;background:currentColor;vertical-align:3px;margin:0 0.8px"></i>multi<i style="display:inline-block;width:5px;height:1.3px;background:currentColor;vertical-align:3px;margin:0 0.8px"></i>09</div>
<div class="a " style="left:1051px;top:230px;width:193px;height:15px;color:#f27bae;font-size:12px;letter-spacing:0.17px;line-height:15px;-webkit-text-stroke:0.15px #f27bae">golden<i style="display:inline-block;width:5px;height:1.3px;background:currentColor;vertical-align:3px;margin:0 0.8px"></i>multi<i style="display:inline-block;width:5px;height:1.3px;background:currentColor;vertical-align:3px;margin:0 0.8px"></i>10</div>
<div class="a " style="left:1046px;top:472px;width:260px;height:1px;background:#333"></div>
<div class="a " style="left:1046px;top:473px;width:260px;height:24px;background:#565656"></div>
<div class="a " style="left:1046px;top:497px;width:260px;height:1px;background:#1e1e1e"></div>
<div class="a " style="left:1050px;top:474px;width:194px;height:24px;color:#f27bae;font-weight:bold;font-size:11.5px;line-height:24px">Track 2 <i style="display:inline-block;width:5.5px;height:1.2px;background:currentColor;vertical-align:3.3px;margin:0 1px"></i> Playlist</div>
<div class="a " style="left:1050px;top:503px;width:194px;height:15px;color:#f27bae;font-size:12px;letter-spacing:0.17px;line-height:15px;-webkit-text-stroke:0.15px #f27bae">golden<i style="display:inline-block;width:5px;height:1.3px;background:currentColor;vertical-align:3px;margin:0 0.8px"></i>multi<i style="display:inline-block;width:5px;height:1.3px;background:currentColor;vertical-align:3px;margin:0 0.8px"></i>02</div>
<div class="a " style="left:1050px;top:525px;width:194px;height:15px;color:#f27bae;font-size:12px;letter-spacing:0.17px;line-height:15px;-webkit-text-stroke:0.15px #f27bae">golden<i style="display:inline-block;width:5px;height:1.3px;background:currentColor;vertical-align:3px;margin:0 0.8px"></i>multi<i style="display:inline-block;width:5px;height:1.3px;background:currentColor;vertical-align:3px;margin:0 0.8px"></i>03</div>
<div class="a " style="left:1050px;top:547px;width:194px;height:15px;color:#f27bae;font-size:12px;letter-spacing:0.17px;line-height:15px;-webkit-text-stroke:0.15px #f27bae">golden<i style="display:inline-block;width:5px;height:1.3px;background:currentColor;vertical-align:3px;margin:0 0.8px"></i>multi<i style="display:inline-block;width:5px;height:1.3px;background:currentColor;vertical-align:3px;margin:0 0.8px"></i>05</div>
<div class="a " style="left:1050px;top:569px;width:194px;height:15px;color:#f27bae;font-size:12px;letter-spacing:0.17px;line-height:15px;-webkit-text-stroke:0.15px #f27bae">golden<i style="display:inline-block;width:5px;height:1.3px;background:currentColor;vertical-align:3px;margin:0 0.8px"></i>multi<i style="display:inline-block;width:5px;height:1.3px;background:currentColor;vertical-align:3px;margin:0 0.8px"></i>06</div>
<div class="a " style="left:1050px;top:591px;width:194px;height:15px;color:#f27bae;font-size:12px;letter-spacing:0.17px;line-height:15px;-webkit-text-stroke:0.15px #f27bae">golden<i style="display:inline-block;width:5px;height:1.3px;background:currentColor;vertical-align:3px;margin:0 0.8px"></i>multi<i style="display:inline-block;width:5px;height:1.3px;background:currentColor;vertical-align:3px;margin:0 0.8px"></i>08</div>
<div class="a " style="left:1050px;top:613px;width:194px;height:15px;color:#f27bae;font-size:12px;letter-spacing:0.17px;line-height:15px;-webkit-text-stroke:0.15px #f27bae">golden<i style="display:inline-block;width:5px;height:1.3px;background:currentColor;vertical-align:3px;margin:0 0.8px"></i>multi<i style="display:inline-block;width:5px;height:1.3px;background:currentColor;vertical-align:3px;margin:0 0.8px"></i>09</div>
<div class="a " style="left:1050px;top:635px;width:194px;height:15px;color:#f27bae;font-size:12px;letter-spacing:0.17px;line-height:15px;-webkit-text-stroke:0.15px #f27bae">golden<i style="display:inline-block;width:5px;height:1.3px;background:currentColor;vertical-align:3px;margin:0 0.8px"></i>multi<i style="display:inline-block;width:5px;height:1.3px;background:currentColor;vertical-align:3px;margin:0 0.8px"></i>10</div>
<div class="a " style="left:1046px;top:850px;width:260px;height:25px;background:#575757"></div>
<div class="a " style="left:1051px;top:851px;width:133px;height:24px;color:#fff;font-size:12px;line-height:25px;letter-spacing:0.15px;-webkit-text-stroke:0.2px #fff">Total Length: 0:03:12</div>
<div class="a " style="left:1181px;top:851px;width:63px;height:24px;color:#fff;font-size:12px;line-height:25px;-webkit-text-stroke:0.2px #fff">Voices 0</div>
<div class="a " style="left:206px;top:868px;width:52px;height:6px;background:#868686;border-radius:3px"></div>
<svg class="a" style="left:100px;top:118px" width="935" height="720" viewBox="156 156 935 720">
<rect x="157.01" y="157" width="1" height="718" fill="rgba(0,0,0,0.28)"/>
<rect x="187.80" y="157" width="1" height="718" fill="rgba(0,0,0,0.28)"/>
<rect x="218.59" y="157" width="1" height="718" fill="rgba(0,0,0,0.28)"/>
<rect x="249.38" y="157" width="1" height="718" fill="rgba(0,0,0,0.28)"/>
<rect x="280.16" y="157" width="1" height="718" fill="rgba(0,0,0,0.28)"/>
<rect x="310.95" y="157" width="1" height="718" fill="rgba(0,0,0,0.28)"/>
<rect x="341.74" y="157" width="1" height="718" fill="rgba(0,0,0,0.28)"/>
<rect x="372.53" y="157" width="1" height="718" fill="rgba(0,0,0,0.28)"/>
<rect x="403.31" y="157" width="1" height="718" fill="rgba(0,0,0,0.28)"/>
<rect x="434.10" y="157" width="1" height="718" fill="rgba(0,0,0,0.28)"/>
<rect x="464.89" y="157" width="1" height="718" fill="rgba(0,0,0,0.28)"/>
<rect x="495.68" y="157" width="1" height="718" fill="rgba(0,0,0,0.28)"/>
<rect x="526.46" y="157" width="1" height="718" fill="rgba(0,0,0,0.28)"/>
<rect x="557.25" y="157" width="1" height="718" fill="rgba(0,0,0,0.28)"/>
<rect x="588.04" y="157" width="1" height="718" fill="rgba(0,0,0,0.28)"/>
<rect x="618.83" y="157" width="1" height="718" fill="rgba(0,0,0,0.28)"/>
<rect x="649.61" y="157" width="1" height="718" fill="rgba(0,0,0,0.28)"/>
<rect x="680.40" y="157" width="1" height="718" fill="rgba(0,0,0,0.28)"/>
<rect x="711.19" y="157" width="1" height="718" fill="rgba(0,0,0,0.28)"/>
<rect x="741.98" y="157" width="1" height="718" fill="rgba(0,0,0,0.28)"/>
<rect x="772.76" y="157" width="1" height="718" fill="rgba(0,0,0,0.28)"/>
<rect x="803.55" y="157" width="1" height="718" fill="rgba(0,0,0,0.28)"/>
<rect x="834.34" y="157" width="1" height="718" fill="rgba(0,0,0,0.28)"/>
<rect x="865.12" y="157" width="1" height="718" fill="rgba(0,0,0,0.28)"/>
<rect x="895.91" y="157" width="1" height="718" fill="rgba(0,0,0,0.28)"/>
<rect x="926.70" y="157" width="1" height="718" fill="rgba(0,0,0,0.28)"/>
<rect x="957.49" y="157" width="1" height="718" fill="rgba(0,0,0,0.28)"/>
<rect x="988.28" y="157" width="1" height="718" fill="rgba(0,0,0,0.28)"/>
<rect x="1019.06" y="157" width="1" height="718" fill="rgba(0,0,0,0.28)"/>
<rect x="1049.85" y="157" width="1" height="718" fill="rgba(0,0,0,0.28)"/>
<rect x="1080.64" y="157" width="1" height="718" fill="rgba(0,0,0,0.28)"/>
<rect x="310.3" y="156" width="1" height="19" fill="#c590a8"/>
<rect x="310.3" y="175" width="1.2" height="700" fill="rgba(220,120,170,0.5)"/>
<rect x="311.5" y="177" width="7" height="7" fill="none" stroke="#b8c8c0" stroke-width="1"/>
</svg>
<div class="a " style="left:260px;top:119px;width:104px;height:17px;color:#e8e8e8;font-size:11px;letter-spacing:0.15px;line-height:19px;-webkit-text-stroke:0.15px #e8e8e8">golden<i style="display:inline-block;width:4.5px;height:1.2px;background:currentColor;vertical-align:3px;margin:0 0.8px"></i>multi<i style="display:inline-block;width:4.5px;height:1.2px;background:currentColor;vertical-align:3px;margin:0 0.8px"></i>03</div>
<svg class="a" style="left:100px;top:137px" width="935" height="700" viewBox="156 175 935 700">
<rect x="156" y="224.05" width="935" height="1.5" fill="#e99bbb"/>
<path d="M156.0 224.8L433.5 224.8L434.0 219.0L434.5 209.2L435.0 207.1L435.5 208.8L436.0 210.1L436.5 210.4L437.0 210.9L437.5 212.6L438.0 212.5L438.5 212.8L439.0 214.4L439.5 214.1L440.0 214.5L440.5 215.0L441.0 215.4L441.5 215.5L442.0 216.4L442.5 216.4L443.0 216.9L443.5 217.4L444.0 217.5L444.5 217.6L445.0 217.7L445.5 218.3L446.0 218.1L446.5 218.3L447.0 218.8L447.5 219.0L448.0 219.2L448.5 219.2L449.0 219.3L449.5 219.7L450.0 219.8L450.5 219.9L451.0 220.3L451.5 220.6L452.0 220.4L452.5 220.5L453.0 221.0L453.5 221.0L454.0 221.0L454.5 221.2L455.0 221.3L455.5 221.7L456.0 221.5L456.5 221.8L457.0 222.1L457.5 222.0L458.0 222.3L458.5 222.2L459.0 222.2L459.5 222.5L460.0 222.5L460.5 222.6L461.0 222.5L461.5 222.8L462.0 222.7L462.5 222.9L463.0 222.9L463.5 223.0L464.0 223.2L464.5 223.0L465.0 223.2L465.5 223.2L466.0 223.4L466.5 223.4L467.0 223.4L467.5 223.5L468.0 223.5L468.5 223.5L469.0 223.6L469.5 223.6L470.0 223.7L470.5 223.8L471.0 223.8L471.5 223.8L472.0 223.9L472.5 223.9L473.0 223.9L473.5 223.9L474.0 224.0L474.5 224.0L475.0 224.1L475.5 224.1L476.0 224.1L476.5 224.1L477.0 224.1L477.5 224.2L478.0 224.2L478.5 224.2L479.0 224.2L479.5 224.3L480.0 220.8L480.5 214.4L481.0 212.8L481.5 213.8L482.0 213.9L482.5 214.8L483.0 215.4L483.5 216.4L484.0 216.2L484.5 216.5L485.0 216.6L485.5 217.4L486.0 218.1L486.5 218.1L487.0 218.0L487.5 218.6L488.0 219.0L488.5 219.0L489.0 219.1L489.5 219.0L490.0 219.4L490.5 219.6L491.0 219.8L491.5 219.9L492.0 220.1L492.5 220.3L493.0 220.4L493.5 220.8L494.0 221.0L494.5 221.0L495.0 221.0L495.5 221.1L496.0 221.5L496.5 221.5L497.0 221.5L497.5 221.9L498.0 221.8L498.5 221.9L499.0 222.1L499.5 222.1L500.0 222.4L500.5 222.4L501.0 222.4L501.5 222.5L502.0 222.7L502.5 222.8L503.0 222.7L503.5 222.8L504.0 223.0L504.5 222.9L505.0 223.1L505.5 223.0L506.0 223.2L506.5 223.2L507.0 223.3L507.5 223.4L508.0 223.5L508.5 223.4L509.0 223.5L509.5 223.6L510.0 223.7L510.5 223.6L511.0 223.7L511.5 223.7L512.0 223.8L512.5 223.8L513.0 223.8L513.5 223.9L514.0 223.9L514.5 223.9L515.0 223.9L515.5 224.0L516.0 224.0L516.5 224.1L517.0 224.1L517.5 224.1L518.0 224.2L518.5 224.2L519.0 224.2L519.5 224.2L520.0 224.2L520.5 224.3L521.0 224.3L521.5 224.3L522.0 224.3L522.5 224.3L523.0 224.3L523.5 224.4L524.0 224.4L524.5 224.4L525.0 224.4L525.5 224.4L526.0 224.4L526.5 224.4L527.0 224.5L527.5 224.5L528.0 224.5L528.5 224.5L529.0 224.5L540.5 224.7L541.0 221.3L541.5 215.1L542.0 213.7L542.5 213.9L543.0 214.7L543.5 215.6L544.0 216.1L544.5 216.2L545.0 217.5L545.5 217.4L546.0 217.9L546.5 217.9L547.0 218.5L547.5 218.9L548.0 219.1L548.5 219.1L549.0 219.4L549.5 219.4L550.0 219.5L550.5 219.8L551.0 219.8L551.5 220.0L552.0 220.5L552.5 220.2L553.0 220.7L553.5 220.9L554.0 221.0L554.5 220.9L555.0 221.1L555.5 221.1L556.0 221.4L556.5 221.6L557.0 221.6L557.5 218.6L558.0 208.0L558.5 205.7L559.0 207.0L559.5 209.1L560.0 209.3L560.5 211.4L561.0 210.7L561.5 212.7L562.0 212.6L562.5 213.1L563.0 213.6L563.5 214.3L564.0 214.3L564.5 214.1L565.0 215.3L565.5 215.6L566.0 215.6L566.5 216.2L567.0 216.4L567.5 216.8L568.0 217.1L568.5 217.7L569.0 217.5L569.5 218.0L570.0 218.3L570.5 218.2L571.0 218.2L571.5 218.8L572.0 219.2L572.5 219.5L573.0 219.6L573.5 219.9L574.0 220.0L574.5 219.8L575.0 220.1L575.5 220.5L576.0 220.4L576.5 220.4L577.0 220.9L577.5 220.8L578.0 221.2L578.5 221.2L579.0 221.5L579.5 221.4L580.0 221.4L580.5 221.8L581.0 221.7L581.5 221.9L582.0 222.1L582.5 222.0L583.0 222.1L583.5 222.4L584.0 222.3L584.5 222.5L585.0 222.5L585.5 222.7L586.0 222.8L586.5 222.7L587.0 222.9L587.5 222.9L588.0 223.1L588.5 223.1L589.0 223.3L589.5 223.3L590.0 223.2L590.5 223.3L591.0 223.4L591.5 223.4L592.0 223.5L592.5 223.5L593.0 223.5L593.5 223.6L594.0 223.6L594.5 223.7L595.0 223.8L595.5 223.8L596.0 223.8L596.5 223.8L597.0 223.9L597.5 223.9L598.0 224.0L598.5 224.0L599.0 224.1L599.5 224.0L600.0 224.1L600.5 224.1L601.0 224.1L601.5 224.1L602.0 224.2L602.5 224.2L603.0 221.3L603.5 214.6L604.0 213.4L604.5 214.4L605.0 215.4L605.5 216.3L606.0 216.8L606.5 217.0L607.0 217.2L607.5 217.0L608.0 217.6L608.5 217.7L609.0 218.0L609.5 218.2L610.0 218.9L610.5 218.7L611.0 219.2L611.5 219.2L612.0 219.7L612.5 219.5L613.0 219.6L613.5 220.4L614.0 220.0L614.5 220.5L615.0 220.4L615.5 220.6L616.0 220.7L616.5 220.9L617.0 221.2L617.5 221.4L618.0 221.4L618.5 221.4L619.0 221.7L619.5 221.9L620.0 222.0L620.5 222.2L621.0 222.1L621.5 222.3L622.0 222.3L622.5 222.3L623.0 222.5L623.5 222.5L624.0 222.5L624.5 222.7L625.0 222.8L625.5 222.8L626.0 222.8L626.5 222.9L627.0 223.0L627.5 223.2L628.0 223.3L628.5 223.3L629.0 223.3L629.5 223.4L630.0 223.4L630.5 223.5L631.0 223.5L631.5 223.5L632.0 223.5L632.5 223.7L633.0 223.7L633.5 223.7L634.0 223.8L634.5 223.8L635.0 223.8L635.5 223.9L636.0 223.9L636.5 223.9L637.0 224.0L637.5 224.0L638.0 224.0L638.5 224.1L639.0 224.0L639.5 224.1L640.0 224.2L640.5 224.2L641.0 224.2L641.5 224.2L642.0 224.3L642.5 224.2L643.0 224.3L643.5 224.3L644.0 224.3L644.5 224.3L645.0 224.4L645.5 224.4L646.0 224.4L646.5 224.4L647.0 224.4L647.5 224.4L648.0 224.4L648.5 224.5L649.0 224.5L649.5 224.5L650.0 224.5L650.5 224.5L651.0 224.5L664.5 224.7L665.0 221.3L665.5 215.1L666.0 213.7L666.5 214.2L667.0 214.7L667.5 215.8L668.0 216.1L668.5 217.1L669.0 217.3L669.5 217.6L670.0 217.4L670.5 218.1L671.0 218.4L671.5 218.8L672.0 218.9L672.5 219.3L673.0 219.0L673.5 219.5L674.0 219.4L674.5 219.8L675.0 219.8L675.5 219.9L676.0 220.1L676.5 220.3L677.0 220.8L677.5 220.9L678.0 221.0L678.5 221.2L679.0 221.3L679.5 221.4L680.0 221.2L680.5 221.5L681.0 219.2L681.5 210.1L682.0 208.6L682.5 209.4L683.0 209.9L683.5 210.6L684.0 212.2L684.5 213.2L685.0 213.3L685.5 214.4L686.0 214.6L686.5 214.8L687.0 214.3L687.5 215.9L688.0 216.1L688.5 216.0L689.0 216.3L689.5 216.7L690.0 216.9L690.5 217.4L691.0 217.5L691.5 217.7L692.0 218.4L692.5 218.0L693.0 218.4L693.5 219.1L694.0 219.3L694.5 219.4L695.0 219.0L695.5 219.6L696.0 219.8L696.5 220.2L697.0 220.1L697.5 220.0L698.0 220.7L698.5 220.4L699.0 220.9L699.5 220.9L700.0 221.2L700.5 221.0L701.0 221.4L701.5 221.6L702.0 221.5L702.5 221.5L703.0 221.7L703.5 221.9L704.0 222.1L704.5 222.0L705.0 222.1L705.5 222.2L706.0 222.5L706.5 222.4L707.0 222.5L707.5 222.6L708.0 222.6L708.5 222.8L709.0 222.9L709.5 223.0L710.0 222.9L710.5 223.0L711.0 223.1L711.5 223.2L712.0 223.3L712.5 223.3L713.0 223.4L713.5 223.4L714.0 223.4L714.5 223.5L715.0 223.6L715.5 223.5L716.0 223.6L716.5 223.8L717.0 223.7L717.5 223.8L718.0 223.8L718.5 223.8L719.0 223.9L719.5 223.9L720.0 224.0L720.5 224.0L721.0 224.0L721.5 224.0L722.0 224.0L722.5 224.1L723.0 224.1L723.5 224.1L724.0 224.2L724.5 224.2L725.0 224.2L725.5 224.2L726.0 221.1L726.5 215.5L727.0 213.0L727.5 214.5L728.0 215.5L728.5 215.7L729.0 216.6L729.5 216.4L730.0 217.5L730.5 217.6L731.0 217.3L731.5 217.7L732.0 218.0L732.5 218.2L733.0 218.7L733.5 218.9L734.0 218.8L734.5 219.0L735.0 219.6L735.5 219.7L736.0 219.8L736.5 220.3L737.0 220.2L737.5 220.4L738.0 220.8L738.5 221.0L739.0 221.1L739.5 221.0L740.0 221.1L740.5 221.4L741.0 221.5L741.5 221.7L742.0 221.5L742.5 221.7L743.0 221.9L743.5 222.0L744.0 221.9L744.5 222.1L745.0 222.3L745.5 222.3L746.0 222.5L746.5 222.7L747.0 222.6L747.5 222.8L748.0 222.9L748.5 222.8L749.0 222.9L749.5 223.0L750.0 223.1L750.5 223.1L751.0 223.2L751.5 223.2L752.0 223.4L752.5 223.5L753.0 223.4L753.5 223.5L754.0 223.6L754.5 223.6L755.0 223.6L755.5 223.6L756.0 223.7L756.5 223.7L757.0 223.8L757.5 223.8L758.0 223.8L758.5 223.9L759.0 223.9L759.5 224.0L760.0 224.0L760.5 224.0L761.0 224.1L761.5 224.1L762.0 224.1L762.5 224.1L763.0 224.1L763.5 224.1L764.0 224.2L764.5 224.2L765.0 224.2L765.5 224.2L766.0 224.3L766.5 224.3L767.0 224.3L767.5 224.4L768.0 224.4L768.5 224.4L769.0 224.4L769.5 224.4L770.0 224.4L770.5 224.4L771.0 224.4L771.5 224.4L772.0 224.5L772.5 224.5L773.0 224.5L773.5 224.5L787.5 224.7L788.0 221.2L788.5 215.6L789.0 213.4L789.5 214.2L790.0 214.7L790.5 215.5L791.0 216.3L791.5 216.6L792.0 216.8L792.5 217.6L793.0 217.6L793.5 217.9L794.0 218.3L794.5 218.3L795.0 218.7L795.5 219.2L796.0 219.1L796.5 219.7L797.0 219.5L797.5 219.9L798.0 220.1L798.5 220.2L799.0 220.2L799.5 220.3L800.0 220.6L800.5 220.7L801.0 220.7L801.5 221.2L802.0 221.2L802.5 221.3L803.0 221.3L803.5 219.4L804.0 211.5L804.5 208.5L805.0 210.5L805.5 211.6L806.0 211.6L806.5 212.8L807.0 214.0L807.5 214.2L808.0 214.6L808.5 214.4L809.0 215.1L809.5 215.1L810.0 216.3L810.5 215.9L811.0 216.4L811.5 216.9L812.0 217.1L812.5 217.4L813.0 217.5L813.5 217.5L814.0 218.3L814.5 218.7L815.0 218.4L815.5 218.9L816.0 219.0L816.5 219.0L817.0 219.7L817.5 219.5L818.0 219.6L818.5 220.2L819.0 220.1L819.5 220.5L820.0 220.7L820.5 220.5L821.0 220.9L821.5 221.2L822.0 221.1L822.5 221.2L823.0 221.4L823.5 221.7L824.0 221.5L824.5 221.6L825.0 221.8L825.5 221.9L826.0 222.2L826.5 222.1L827.0 222.3L827.5 222.5L828.0 222.4L828.5 222.4L829.0 222.5L829.5 222.6L830.0 222.8L830.5 222.7L831.0 222.9L831.5 223.0L832.0 222.9L832.5 223.0L833.0 223.1L833.5 223.3L834.0 223.3L834.5 223.3L835.0 223.4L835.5 223.4L836.0 223.5L836.5 223.5L837.0 223.6L837.5 223.7L838.0 223.7L838.5 223.8L839.0 223.8L839.5 223.8L840.0 223.8L840.5 223.9L841.0 223.9L841.5 224.0L842.0 223.9L842.5 224.0L843.0 224.1L843.5 224.0L844.0 224.1L844.5 224.1L845.0 224.2L845.5 224.1L846.0 224.2L846.5 224.2L847.0 224.2L847.5 224.3L848.0 224.3L848.5 224.3L849.0 221.4L849.5 215.6L850.0 213.0L850.5 214.6L851.0 215.2L851.5 215.7L852.0 216.4L852.5 216.4L853.0 217.4L853.5 217.1L854.0 217.7L854.5 218.0L855.0 217.8L855.5 218.6L856.0 218.4L856.5 218.8L857.0 219.2L857.5 219.4L858.0 219.8L858.5 219.9L859.0 219.6L859.5 219.9L860.0 220.0L860.5 220.4L861.0 220.5L861.5 220.9L862.0 221.0L862.5 221.3L863.0 221.2L863.5 221.5L864.0 221.5L864.5 221.6L865.0 221.6L865.5 222.0L866.0 221.7L866.5 221.9L867.0 222.2L867.5 222.4L868.0 222.3L868.5 222.5L869.0 222.3L869.5 222.5L870.0 222.5L870.5 222.8L871.0 222.8L871.5 222.9L872.0 222.9L872.5 223.0L873.0 223.1L873.5 223.1L874.0 223.1L874.5 223.2L875.0 223.3L875.5 223.4L876.0 223.5L876.5 223.4L877.0 223.5L877.5 223.5L878.0 223.7L878.5 223.6L879.0 223.7L879.5 223.8L880.0 223.7L880.5 223.8L881.0 223.8L881.5 223.8L882.0 223.9L882.5 223.9L883.0 224.0L883.5 224.0L884.0 224.0L884.5 224.0L885.0 224.1L885.5 224.1L886.0 224.2L886.5 224.2L887.0 224.2L887.5 224.2L888.0 224.2L888.5 224.3L889.0 224.3L889.5 224.3L890.0 224.3L890.5 224.3L891.0 224.4L891.5 224.4L892.0 224.4L892.5 224.4L893.0 224.4L893.5 224.4L894.0 224.4L894.5 224.5L895.0 224.5L895.5 224.5L896.0 224.5L896.5 224.5L897.0 224.5L911.5 224.7L912.0 221.5L912.5 216.0L913.0 214.2L913.5 215.5L914.0 216.4L914.5 216.6L915.0 217.1L915.5 217.2L916.0 217.8L916.5 217.6L917.0 218.1L917.5 218.5L918.0 218.4L918.5 219.1L919.0 219.6L919.5 219.3L920.0 219.6L920.5 219.7L921.0 220.0L921.5 220.2L922.0 220.6L922.5 220.4L923.0 220.7L923.5 220.6L924.0 221.0L924.5 221.1L925.0 221.2L925.5 221.2L926.0 221.6L926.5 220.4L927.0 214.0L927.5 210.9L928.0 212.3L928.5 213.7L929.0 214.8L929.5 214.4L930.0 214.9L930.5 215.9L931.0 216.6L931.5 216.2L932.0 216.9L932.5 216.9L933.0 217.1L933.5 217.3L934.0 218.3L934.5 218.1L935.0 218.8L935.5 218.3L936.0 218.6L936.5 219.4L937.0 219.1L937.5 219.4L938.0 219.9L938.5 219.8L939.0 220.2L939.5 220.2L940.0 220.2L940.5 220.8L941.0 220.8L941.5 220.8L942.0 221.2L942.5 221.0L943.0 221.3L943.5 221.5L944.0 221.7L944.5 221.6L945.0 221.7L945.5 221.8L946.0 221.9L946.5 222.2L947.0 222.2L947.5 222.2L948.0 222.3L948.5 222.3L949.0 222.7L949.5 222.6L950.0 222.6L950.5 222.9L951.0 222.8L951.5 222.9L952.0 223.0L952.5 223.0L953.0 223.1L953.5 223.2L954.0 223.3L954.5 223.3L955.0 223.3L955.5 223.5L956.0 223.4L956.5 223.5L957.0 223.5L957.5 223.6L958.0 223.6L958.5 223.7L959.0 223.7L959.5 223.7L960.0 223.8L960.5 223.8L961.0 223.9L961.5 224.0L962.0 224.0L962.5 224.0L963.0 224.0L963.5 224.0L964.0 224.1L964.5 224.1L965.0 224.1L965.5 224.1L966.0 224.1L966.5 224.2L967.0 224.2L967.5 224.2L968.0 224.3L968.5 224.3L969.0 224.3L969.5 224.3L970.0 224.3L970.5 224.4L971.0 224.4L971.5 224.4L972.0 222.1L972.5 217.7L973.0 216.0L973.5 217.0L974.0 217.2L974.5 218.3L975.0 218.1L975.5 219.1L976.0 219.2L976.5 219.5L977.0 219.2L977.5 219.5L978.0 220.1L978.5 219.8L979.0 220.1L979.5 220.5L980.0 220.5L980.5 220.7L981.0 220.8L981.5 221.1L982.0 221.2L982.5 221.1L983.0 221.3L983.5 221.4L984.0 221.8L984.5 221.6L985.0 221.8L985.5 221.9L986.0 222.2L986.5 222.1L987.0 222.1L987.5 222.3L988.0 222.5L988.5 222.5L989.0 222.7L989.5 222.7L990.0 222.7L990.5 222.9L991.0 223.0L991.5 223.0L992.0 223.2L992.5 223.2L993.0 223.2L993.5 223.2L994.0 223.4L994.5 223.3L995.0 223.5L995.5 223.4L996.0 223.5L996.5 223.6L997.0 223.6L997.5 223.6L998.0 223.7L998.5 223.7L999.0 223.8L999.5 223.8L1000.0 223.8L1000.5 223.9L1001.0 223.9L1001.5 223.9L1002.0 223.9L1002.5 224.0L1003.0 224.0L1003.5 224.1L1004.0 224.1L1004.5 224.1L1005.0 224.2L1005.5 224.2L1006.0 224.2L1006.5 224.2L1007.0 224.3L1007.5 224.3L1008.0 224.3L1008.5 224.3L1009.0 224.3L1009.5 224.3L1010.0 224.3L1010.5 224.3L1011.0 224.4L1011.5 224.4L1012.0 224.4L1012.5 224.4L1013.0 224.4L1013.5 224.4L1014.0 224.5L1014.5 224.5L1015.0 224.5L1015.5 224.5L1016.0 224.5L1016.5 224.5L1017.0 224.5L1033.5 224.7L1034.0 222.4L1034.5 218.7L1035.0 217.4L1035.5 218.0L1036.0 218.5L1036.5 219.1L1037.0 219.3L1037.5 219.2L1038.0 219.7L1038.5 219.6L1039.0 220.0L1039.5 220.1L1040.0 220.4L1040.5 220.8L1041.0 220.5L1041.5 220.9L1042.0 221.1L1042.5 221.1L1043.0 221.4L1043.5 221.5L1044.0 221.6L1044.5 221.8L1045.0 221.9L1045.5 221.9L1046.0 222.0L1046.5 222.2L1047.0 222.2L1047.5 222.4L1048.0 222.5L1048.5 222.6L1049.0 222.7L1049.5 222.2L1050.0 215.2L1050.5 212.0L1051.0 213.2L1051.5 214.5L1052.0 214.7L1052.5 215.0L1053.0 215.8L1053.5 216.2L1054.0 216.4L1054.5 216.8L1055.0 217.1L1055.5 217.4L1056.0 217.9L1056.5 218.2L1057.0 218.3L1057.5 218.9L1058.0 219.0L1058.5 219.3L1059.0 219.0L1059.5 219.7L1060.0 220.0L1060.5 219.6L1061.0 220.1L1061.5 220.0L1062.0 220.4L1062.5 220.8L1063.0 220.5L1063.5 220.7L1064.0 220.9L1064.5 221.0L1065.0 221.4L1065.5 221.6L1066.0 221.4L1066.5 221.5L1067.0 221.6L1067.5 222.0L1068.0 222.0L1068.5 221.9L1069.0 222.0L1069.5 222.4L1070.0 222.3L1070.5 222.5L1071.0 222.5L1071.5 222.7L1072.0 222.8L1072.5 222.7L1073.0 222.9L1073.5 222.9L1074.0 222.9L1074.5 223.0L1075.0 223.1L1075.5 223.1L1076.0 223.3L1076.5 223.3L1077.0 223.3L1077.5 223.4L1078.0 223.5L1078.5 223.5L1079.0 223.5L1079.5 223.6L1080.0 223.6L1080.5 223.7L1081.0 223.7L1081.5 223.7L1082.0 223.8L1082.5 223.9L1083.0 223.9L1083.5 223.9L1084.0 223.9L1084.5 224.0L1085.0 224.0L1085.5 224.0L1086.0 224.0L1086.5 224.0L1087.0 224.1L1087.5 224.1L1088.0 224.2L1088.5 224.2L1089.0 224.2L1089.5 224.2L1090.0 224.2L1090.5 224.2L1091.0 224.3L1091.0 225.4L1090.5 225.4L1090.0 225.4L1089.5 225.4L1089.0 225.5L1088.5 225.5L1088.0 225.5L1087.5 225.5L1087.0 225.6L1086.5 225.5L1086.0 225.6L1085.5 225.6L1085.0 225.7L1084.5 225.6L1084.0 225.7L1083.5 225.8L1083.0 225.8L1082.5 225.9L1082.0 225.9L1081.5 225.9L1081.0 226.0L1080.5 226.0L1080.0 226.0L1079.5 226.1L1079.0 226.2L1078.5 226.2L1078.0 226.3L1077.5 226.3L1077.0 226.4L1076.5 226.5L1076.0 226.4L1075.5 226.4L1075.0 226.7L1074.5 226.6L1074.0 226.6L1073.5 226.9L1073.0 226.9L1072.5 226.9L1072.0 227.0L1071.5 227.3L1071.0 227.1L1070.5 227.5L1070.0 227.6L1069.5 227.5L1069.0 227.5L1068.5 227.6L1068.0 227.8L1067.5 228.1L1067.0 228.2L1066.5 228.2L1066.0 228.2L1065.5 228.3L1065.0 228.3L1064.5 228.6L1064.0 228.8L1063.5 229.2L1063.0 229.1L1062.5 229.4L1062.0 229.7L1061.5 229.4L1061.0 229.8L1060.5 230.0L1060.0 230.1L1059.5 230.2L1059.0 231.0L1058.5 230.7L1058.0 231.1L1057.5 231.2L1057.0 231.8L1056.5 232.3L1056.0 232.4L1055.5 232.5L1055.0 232.4L1054.5 233.6L1054.0 233.4L1053.5 233.2L1053.0 233.8L1052.5 234.4L1052.0 235.2L1051.5 236.1L1051.0 236.5L1050.5 236.3L1050.0 233.8L1049.5 227.4L1049.0 227.2L1048.5 227.2L1048.0 227.4L1047.5 227.4L1047.0 227.8L1046.5 227.6L1046.0 227.7L1045.5 228.1L1045.0 227.8L1044.5 228.0L1044.0 228.2L1043.5 228.2L1043.0 228.8L1042.5 228.9L1042.0 228.9L1041.5 228.9L1041.0 228.9L1040.5 229.2L1040.0 229.4L1039.5 229.8L1039.0 230.0L1038.5 230.4L1038.0 230.2L1037.5 230.5L1037.0 230.8L1036.5 230.9L1036.0 231.7L1035.5 231.8L1035.0 232.0L1034.5 231.0L1034.0 227.0L1033.5 224.9L1017.5 225.1L1017.0 225.1L1016.5 225.1L1016.0 225.1L1015.5 225.1L1015.0 225.1L1014.5 225.2L1014.0 225.1L1013.5 225.2L1013.0 225.2L1012.5 225.2L1012.0 225.2L1011.5 225.2L1011.0 225.2L1010.5 225.3L1010.0 225.3L1009.5 225.3L1009.0 225.4L1008.5 225.3L1008.0 225.4L1007.5 225.4L1007.0 225.4L1006.5 225.4L1006.0 225.5L1005.5 225.5L1005.0 225.5L1004.5 225.6L1004.0 225.6L1003.5 225.6L1003.0 225.7L1002.5 225.7L1002.0 225.7L1001.5 225.8L1001.0 225.8L1000.5 225.8L1000.0 225.9L999.5 225.9L999.0 225.9L998.5 226.0L998.0 226.0L997.5 226.0L997.0 226.2L996.5 226.1L996.0 226.2L995.5 226.3L995.0 226.3L994.5 226.3L994.0 226.4L993.5 226.5L993.0 226.6L992.5 226.7L992.0 226.7L991.5 226.6L991.0 226.7L990.5 226.9L990.0 227.0L989.5 227.1L989.0 227.1L988.5 227.3L988.0 227.4L987.5 227.3L987.0 227.4L986.5 227.7L986.0 227.7L985.5 227.8L985.0 228.0L984.5 228.1L984.0 228.0L983.5 228.3L983.0 228.6L982.5 228.6L982.0 228.9L981.5 228.9L981.0 228.9L980.5 229.2L980.0 229.4L979.5 229.3L979.0 229.6L978.5 230.0L978.0 230.1L977.5 230.0L977.0 230.7L976.5 230.9L976.0 230.7L975.5 231.5L975.0 231.2L974.5 231.9L974.0 231.7L973.5 232.5L973.0 233.4L972.5 232.1L972.0 227.5L971.5 225.3L971.0 225.3L970.5 225.3L970.0 225.3L969.5 225.3L969.0 225.3L968.5 225.3L968.0 225.4L967.5 225.4L967.0 225.4L966.5 225.5L966.0 225.5L965.5 225.5L965.0 225.5L964.5 225.6L964.0 225.6L963.5 225.6L963.0 225.7L962.5 225.7L962.0 225.7L961.5 225.7L961.0 225.8L960.5 225.9L960.0 225.9L959.5 225.9L959.0 225.9L958.5 226.0L958.0 226.0L957.5 226.0L957.0 226.1L956.5 226.2L956.0 226.2L955.5 226.3L955.0 226.4L954.5 226.5L954.0 226.4L953.5 226.6L953.0 226.6L952.5 226.7L952.0 226.7L951.5 226.7L951.0 226.8L950.5 227.1L950.0 227.0L949.5 227.2L949.0 227.3L948.5 227.2L948.0 227.5L947.5 227.4L947.0 227.5L946.5 227.6L946.0 227.9L945.5 227.9L945.0 228.1L944.5 228.1L944.0 228.1L943.5 228.4L943.0 228.5L942.5 228.6L942.0 228.8L941.5 229.2L941.0 229.2L940.5 229.3L940.0 229.7L939.5 229.9L939.0 229.7L938.5 230.1L938.0 230.1L937.5 230.7L937.0 230.6L936.5 230.6L936.0 231.1L935.5 231.3L935.0 231.3L934.5 231.7L934.0 232.0L933.5 232.0L933.0 232.5L932.5 232.6L932.0 233.3L931.5 234.2L931.0 233.7L930.5 234.4L930.0 235.4L929.5 234.9L929.0 235.9L928.5 236.9L928.0 237.0L927.5 237.5L927.0 235.3L926.5 229.0L926.0 228.4L925.5 228.7L925.0 228.4L924.5 228.9L924.0 228.8L923.5 229.1L923.0 229.4L922.5 229.7L922.0 229.9L921.5 229.8L921.0 230.0L920.5 229.9L920.0 230.1L919.5 230.6L919.0 230.5L918.5 230.9L918.0 231.5L917.5 231.5L917.0 231.7L916.5 232.0L916.0 232.4L915.5 232.4L915.0 232.5L914.5 233.0L914.0 233.8L913.5 234.1L913.0 235.4L912.5 233.0L912.0 228.1L911.5 224.9L898.5 225.1L898.0 225.1L897.5 225.1L897.0 225.1L896.5 225.1L896.0 225.1L895.5 225.2L895.0 225.2L894.5 225.2L894.0 225.2L893.5 225.2L893.0 225.2L892.5 225.2L892.0 225.2L891.5 225.3L891.0 225.3L890.5 225.3L890.0 225.3L889.5 225.4L889.0 225.3L888.5 225.4L888.0 225.4L887.5 225.5L887.0 225.4L886.5 225.5L886.0 225.5L885.5 225.5L885.0 225.6L884.5 225.6L884.0 225.6L883.5 225.7L883.0 225.7L882.5 225.7L882.0 225.8L881.5 225.8L881.0 225.8L880.5 225.9L880.0 225.9L879.5 226.0L879.0 226.0L878.5 226.1L878.0 226.1L877.5 226.2L877.0 226.2L876.5 226.2L876.0 226.2L875.5 226.3L875.0 226.3L874.5 226.5L874.0 226.4L873.5 226.5L873.0 226.7L872.5 226.7L872.0 226.8L871.5 226.8L871.0 227.0L870.5 227.1L870.0 227.2L869.5 227.2L869.0 227.3L868.5 227.4L868.0 227.5L867.5 227.5L867.0 227.6L866.5 227.9L866.0 228.0L865.5 227.9L865.0 228.2L864.5 228.1L864.0 228.5L863.5 228.7L863.0 228.7L862.5 229.1L862.0 228.9L861.5 229.3L861.0 229.4L860.5 229.2L860.0 229.8L859.5 230.0L859.0 229.8L858.5 230.5L858.0 230.3L857.5 230.8L857.0 231.2L856.5 230.7L856.0 231.1L855.5 231.8L855.0 232.1L854.5 232.0L854.0 232.5L853.5 232.7L853.0 232.8L852.5 233.4L852.0 233.6L851.5 233.8L851.0 234.1L850.5 235.7L850.0 236.0L849.5 234.6L849.0 228.4L848.5 225.3L848.0 225.4L847.5 225.4L847.0 225.4L846.5 225.4L846.0 225.4L845.5 225.4L845.0 225.5L844.5 225.5L844.0 225.5L843.5 225.6L843.0 225.6L842.5 225.7L842.0 225.7L841.5 225.6L841.0 225.7L840.5 225.7L840.0 225.8L839.5 225.8L839.0 225.8L838.5 225.9L838.0 226.0L837.5 226.0L837.0 226.1L836.5 226.0L836.0 226.2L835.5 226.2L835.0 226.2L834.5 226.3L834.0 226.3L833.5 226.3L833.0 226.5L832.5 226.5L832.0 226.7L831.5 226.5L831.0 226.6L830.5 226.9L830.0 226.8L829.5 226.8L829.0 226.9L828.5 227.0L828.0 227.2L827.5 227.1L827.0 227.4L826.5 227.5L826.0 227.5L825.5 227.5L825.0 227.8L824.5 227.7L824.0 227.9L823.5 228.2L823.0 228.2L822.5 228.2L822.0 228.6L821.5 228.8L821.0 228.9L820.5 228.8L820.0 228.9L819.5 229.5L819.0 229.4L818.5 229.5L818.0 230.0L817.5 230.2L817.0 229.9L816.5 230.5L816.0 230.5L815.5 231.2L815.0 231.1L814.5 231.4L814.0 231.3L813.5 231.9L813.0 231.8L812.5 231.9L812.0 232.1L811.5 232.9L811.0 233.5L810.5 233.1L810.0 233.6L809.5 234.0L809.0 234.5L808.5 234.8L808.0 234.7L807.5 236.0L807.0 236.7L806.5 236.6L806.0 236.9L805.5 237.8L805.0 238.2L804.5 239.4L804.0 236.7L803.5 229.4L803.0 228.1L802.5 228.2L802.0 228.6L801.5 228.8L801.0 228.8L800.5 228.8L800.0 228.8L799.5 229.1L799.0 229.3L798.5 229.5L798.0 229.5L797.5 230.1L797.0 230.1L796.5 230.2L796.0 230.3L795.5 230.8L795.0 231.1L794.5 231.1L794.0 231.6L793.5 232.0L793.0 232.1L792.5 232.4L792.0 232.4L791.5 232.6L791.0 233.5L790.5 233.4L790.0 234.4L789.5 234.2L789.0 235.3L788.5 233.3L788.0 228.3L787.5 224.9L775.5 225.1L775.0 225.1L774.5 225.1L774.0 225.1L773.5 225.1L773.0 225.1L772.5 225.2L772.0 225.2L771.5 225.2L771.0 225.2L770.5 225.2L770.0 225.2L769.5 225.2L769.0 225.3L768.5 225.3L768.0 225.3L767.5 225.3L767.0 225.3L766.5 225.3L766.0 225.4L765.5 225.4L765.0 225.4L764.5 225.4L764.0 225.5L763.5 225.5L763.0 225.5L762.5 225.5L762.0 225.5L761.5 225.6L761.0 225.6L760.5 225.7L760.0 225.7L759.5 225.7L759.0 225.7L758.5 225.8L758.0 225.8L757.5 225.8L757.0 225.9L756.5 225.9L756.0 225.9L755.5 226.0L755.0 226.0L754.5 226.2L754.0 226.2L753.5 226.2L753.0 226.2L752.5 226.3L752.0 226.3L751.5 226.5L751.0 226.5L750.5 226.5L750.0 226.7L749.5 226.6L749.0 226.8L748.5 226.8L748.0 226.9L747.5 227.1L747.0 227.2L746.5 227.3L746.0 227.2L745.5 227.4L745.0 227.5L744.5 227.6L744.0 227.7L743.5 227.8L743.0 227.7L742.5 228.0L742.0 228.1L741.5 228.4L741.0 228.6L740.5 228.7L740.0 228.8L739.5 228.6L739.0 229.2L738.5 228.9L738.0 229.4L737.5 229.6L737.0 229.6L736.5 229.8L736.0 230.1L735.5 230.1L735.0 230.5L734.5 230.8L734.0 231.0L733.5 231.3L733.0 231.2L732.5 231.3L732.0 232.3L731.5 231.9L731.0 232.7L730.5 232.8L730.0 233.5L729.5 232.9L729.0 233.8L728.5 234.0L728.0 234.1L727.5 235.5L727.0 236.1L726.5 234.1L726.0 228.2L725.5 225.4L725.0 225.4L724.5 225.4L724.0 225.4L723.5 225.5L723.0 225.5L722.5 225.6L722.0 225.6L721.5 225.5L721.0 225.6L720.5 225.6L720.0 225.6L719.5 225.7L719.0 225.8L718.5 225.7L718.0 225.7L717.5 225.8L717.0 225.8L716.5 226.0L716.0 226.0L715.5 226.0L715.0 226.0L714.5 226.1L714.0 226.2L713.5 226.1L713.0 226.2L712.5 226.4L712.0 226.3L711.5 226.4L711.0 226.4L710.5 226.6L710.0 226.5L709.5 226.7L709.0 226.7L708.5 226.9L708.0 227.0L707.5 226.9L707.0 227.1L706.5 227.1L706.0 227.3L705.5 227.3L705.0 227.5L704.5 227.4L704.0 227.6L703.5 227.8L703.0 227.8L702.5 227.8L702.0 228.1L701.5 228.2L701.0 228.1L700.5 228.7L700.0 228.4L699.5 228.7L699.0 228.8L698.5 229.3L698.0 228.9L697.5 229.6L697.0 229.3L696.5 230.0L696.0 229.8L695.5 230.0L695.0 230.3L694.5 230.2L694.0 230.4L693.5 230.6L693.0 231.0L692.5 231.6L692.0 231.6L691.5 231.9L691.0 232.6L690.5 232.5L690.0 233.1L689.5 233.2L689.0 233.7L688.5 234.2L688.0 233.7L687.5 234.2L687.0 234.7L686.5 235.7L686.0 236.1L685.5 236.2L685.0 237.0L684.5 237.5L684.0 238.1L683.5 237.3L683.0 238.0L682.5 239.8L682.0 240.5L681.5 237.6L681.0 229.7L680.5 228.0L680.0 228.1L679.5 228.5L679.0 228.3L678.5 228.6L678.0 228.8L677.5 228.8L677.0 229.3L676.5 229.3L676.0 229.6L675.5 229.6L675.0 230.0L674.5 230.1L674.0 230.5L673.5 230.6L673.0 230.3L672.5 230.6L672.0 231.2L671.5 230.9L671.0 231.5L670.5 232.1L670.0 232.0L669.5 232.6L669.0 233.1L668.5 232.7L668.0 233.7L667.5 233.7L667.0 234.0L666.5 234.3L666.0 235.9L665.5 233.9L665.0 228.1L664.5 224.9L652.0 225.1L651.5 225.1L651.0 225.1L650.5 225.1L650.0 225.2L649.5 225.2L649.0 225.2L648.5 225.2L648.0 225.2L647.5 225.2L647.0 225.2L646.5 225.2L646.0 225.3L645.5 225.3L645.0 225.3L644.5 225.3L644.0 225.3L643.5 225.3L643.0 225.4L642.5 225.4L642.0 225.4L641.5 225.4L641.0 225.4L640.5 225.5L640.0 225.5L639.5 225.6L639.0 225.6L638.5 225.6L638.0 225.6L637.5 225.6L637.0 225.7L636.5 225.7L636.0 225.7L635.5 225.8L635.0 225.8L634.5 225.9L634.0 225.9L633.5 226.0L633.0 226.0L632.5 226.0L632.0 226.1L631.5 226.1L631.0 226.2L630.5 226.3L630.0 226.3L629.5 226.4L629.0 226.4L628.5 226.4L628.0 226.5L627.5 226.5L627.0 226.6L626.5 226.6L626.0 226.9L625.5 226.9L625.0 226.8L624.5 226.9L624.0 227.2L623.5 227.2L623.0 227.2L622.5 227.3L622.0 227.6L621.5 227.4L621.0 227.6L620.5 227.8L620.0 228.0L619.5 228.2L619.0 228.2L618.5 228.3L618.0 228.6L617.5 228.7L617.0 228.8L616.5 229.0L616.0 228.9L615.5 229.1L615.0 229.1L614.5 229.4L614.0 229.7L613.5 229.6L613.0 229.8L612.5 230.2L612.0 230.2L611.5 230.4L611.0 230.7L610.5 231.0L610.0 231.7L609.5 231.7L609.0 231.9L608.5 231.6L608.0 232.2L607.5 232.7L607.0 232.5L606.5 233.2L606.0 233.8L605.5 233.6L605.0 234.5L604.5 235.4L604.0 236.1L603.5 233.9L603.0 228.1L602.5 225.4L602.0 225.4L601.5 225.4L601.0 225.4L600.5 225.5L600.0 225.5L599.5 225.5L599.0 225.6L598.5 225.6L598.0 225.6L597.5 225.6L597.0 225.6L596.5 225.7L596.0 225.8L595.5 225.8L595.0 225.8L594.5 225.9L594.0 225.8L593.5 225.9L593.0 226.0L592.5 226.0L592.0 226.0L591.5 226.1L591.0 226.1L590.5 226.2L590.0 226.3L589.5 226.4L589.0 226.4L588.5 226.5L588.0 226.5L587.5 226.7L587.0 226.7L586.5 226.8L586.0 226.7L585.5 226.9L585.0 227.0L584.5 227.2L584.0 227.1L583.5 227.1L583.0 227.2L582.5 227.2L582.0 227.3L581.5 227.4L581.0 227.8L580.5 227.7L580.0 228.0L579.5 228.2L579.0 228.3L578.5 228.1L578.0 228.3L577.5 228.4L577.0 228.7L576.5 228.8L576.0 228.9L575.5 229.3L575.0 229.3L574.5 229.3L574.0 229.5L573.5 230.1L573.0 230.0L572.5 230.0L572.0 230.3L571.5 230.8L571.0 230.5L570.5 230.8L570.0 230.9L569.5 231.7L569.0 231.4L568.5 232.4L568.0 232.2L567.5 232.7L567.0 233.4L566.5 233.1L566.0 233.8L565.5 234.0L565.0 234.3L564.5 234.2L564.0 234.9L563.5 235.2L563.0 235.2L562.5 236.6L562.0 236.8L561.5 237.7L561.0 237.9L560.5 238.5L560.0 238.5L559.5 240.1L559.0 240.6L558.5 240.5L558.0 237.9L557.5 229.9L557.0 227.8L556.5 227.9L556.0 228.3L555.5 228.4L555.0 228.5L554.5 228.8L554.0 229.0L553.5 228.9L553.0 229.3L552.5 229.4L552.0 229.5L551.5 229.7L551.0 229.7L550.5 229.8L550.0 230.3L549.5 230.6L549.0 230.9L548.5 231.0L548.0 231.1L547.5 231.6L547.0 231.3L546.5 231.5L546.0 231.8L545.5 232.1L545.0 233.1L544.5 233.3L544.0 233.3L543.5 233.5L543.0 234.7L542.5 235.2L542.0 235.8L541.5 233.3L541.0 227.9L540.5 224.9L529.0 225.1L528.5 225.1L528.0 225.1L527.5 225.2L527.0 225.2L526.5 225.2L526.0 225.2L525.5 225.2L525.0 225.2L524.5 225.2L524.0 225.2L523.5 225.3L523.0 225.2L522.5 225.3L522.0 225.3L521.5 225.3L521.0 225.3L520.5 225.4L520.0 225.4L519.5 225.4L519.0 225.4L518.5 225.5L518.0 225.5L517.5 225.5L517.0 225.5L516.5 225.6L516.0 225.6L515.5 225.6L515.0 225.7L514.5 225.7L514.0 225.8L513.5 225.8L513.0 225.8L512.5 225.9L512.0 225.9L511.5 225.9L511.0 225.9L510.5 226.0L510.0 226.0L509.5 226.0L509.0 226.1L508.5 226.1L508.0 226.3L507.5 226.2L507.0 226.3L506.5 226.4L506.0 226.5L505.5 226.5L505.0 226.6L504.5 226.7L504.0 226.8L503.5 226.8L503.0 226.9L502.5 227.1L502.0 227.1L501.5 227.0L501.0 227.2L500.5 227.3L500.0 227.3L499.5 227.5L499.0 227.4L498.5 227.7L498.0 227.7L497.5 227.9L497.0 228.1L496.5 228.3L496.0 228.3L495.5 228.4L495.0 228.6L494.5 228.8L494.0 229.1L493.5 229.0L493.0 229.1L492.5 229.4L492.0 229.7L491.5 229.6L491.0 229.9L490.5 230.3L490.0 230.2L489.5 230.5L489.0 230.7L488.5 231.2L488.0 231.3L487.5 231.0L487.0 231.4L486.5 231.5L486.0 232.3L485.5 232.1L485.0 232.6L484.5 233.5L484.0 233.5L483.5 234.0L483.0 234.2L482.5 234.3L482.0 235.4L481.5 235.4L481.0 236.7L480.5 234.8L480.0 228.4L479.5 225.4L479.0 225.4L478.5 225.4L478.0 225.5L477.5 225.4L477.0 225.4L476.5 225.5L476.0 225.6L475.5 225.5L475.0 225.6L474.5 225.6L474.0 225.7L473.5 225.6L473.0 225.7L472.5 225.8L472.0 225.8L471.5 225.9L471.0 225.9L470.5 225.8L470.0 225.9L469.5 226.0L469.0 226.0L468.5 226.0L468.0 226.1L467.5 226.1L467.0 226.1L466.5 226.3L466.0 226.3L465.5 226.3L465.0 226.5L464.5 226.5L464.0 226.5L463.5 226.6L463.0 226.6L462.5 226.8L462.0 226.9L461.5 226.8L461.0 226.8L460.5 227.2L460.0 227.2L459.5 227.3L459.0 227.4L458.5 227.3L458.0 227.6L457.5 227.5L457.0 227.9L456.5 227.9L456.0 228.0L455.5 227.9L455.0 228.1L454.5 228.4L454.0 228.3L453.5 228.5L453.0 228.7L452.5 229.0L452.0 229.1L451.5 229.3L451.0 229.3L450.5 229.3L450.0 229.5L449.5 229.9L449.0 230.1L448.5 230.5L448.0 230.2L447.5 230.5L447.0 231.3L446.5 231.1L446.0 231.4L445.5 231.4L445.0 231.7L444.5 232.4L444.0 232.8L443.5 233.1L443.0 233.0L442.5 233.0L442.0 233.6L441.5 233.8L441.0 234.2L440.5 235.1L440.0 234.5L439.5 235.2L439.0 236.6L438.5 235.8L438.0 236.8L437.5 237.7L437.0 238.2L436.5 238.0L436.0 239.6L435.5 240.9L435.0 241.0L434.5 237.6L434.0 229.8L433.5 224.8L156.0 224.8Z" fill="#ff78a8" stroke="#f4c6d6" stroke-opacity="0.45" stroke-width="0.5" />
<rect x="156" y="324.05" width="935" height="1.5" fill="#e99bbb"/>
<path d="M156.0 324.8L156.5 324.8L157.0 320.2L157.5 311.3L158.0 314.6L158.5 316.3L159.0 317.3L159.5 318.5L160.0 319.4L160.5 320.3L161.0 321.1L161.5 321.9L162.0 322.0L162.5 322.6L163.0 323.0L163.5 323.1L164.0 323.4L164.5 323.7L165.0 323.8L165.5 323.9L166.0 324.1L166.5 324.2L167.0 324.3L167.5 324.4L168.0 324.4L168.5 324.5L169.0 324.5L172.5 324.7L173.0 321.4L173.5 318.6L174.0 319.7L174.5 320.8L175.0 321.3L175.5 321.9L176.0 322.5L176.5 322.8L177.0 323.0L177.5 323.3L178.0 323.6L178.5 323.7L179.0 324.0L179.5 324.0L180.0 324.1L180.5 324.3L181.0 324.3L181.5 324.4L182.0 324.5L182.5 324.5L218.5 324.8L219.0 319.2L219.5 313.5L220.0 315.6L220.5 317.9L221.0 318.4L221.5 319.3L222.0 320.1L222.5 320.9L223.0 321.6L223.5 322.0L224.0 322.7L224.5 322.8L225.0 323.2L225.5 323.4L226.0 323.7L226.5 323.8L227.0 324.0L227.5 324.1L228.0 324.2L228.5 324.3L229.0 324.4L229.5 324.4L230.0 324.5L230.5 324.5L234.0 324.7L234.5 318.9L235.0 318.3L235.5 319.7L236.0 320.8L236.5 321.3L237.0 321.7L237.5 322.3L238.0 322.8L238.5 323.1L239.0 323.2L239.5 323.5L240.0 323.6L240.5 323.9L241.0 324.0L241.5 324.1L242.0 324.3L242.5 324.3L243.0 324.4L243.5 324.4L244.0 324.5L244.5 324.5L279.5 324.8L280.0 318.7L280.5 313.2L281.0 316.5L281.5 317.6L282.0 319.1L282.5 319.4L283.0 320.7L283.5 321.0L284.0 321.8L284.5 322.2L285.0 322.6L285.5 323.0L286.0 323.2L286.5 323.3L287.0 323.6L287.5 323.7L288.0 323.9L288.5 324.1L289.0 324.2L289.5 324.3L290.0 324.4L290.5 324.4L291.0 324.5L291.5 324.5L295.5 324.7L296.0 320.6L296.5 318.9L297.0 319.9L297.5 321.0L298.0 321.8L298.5 322.2L299.0 322.6L299.5 323.0L300.0 323.2L300.5 323.3L301.0 323.6L301.5 323.8L302.0 323.9L302.5 324.1L303.0 324.2L303.5 324.3L304.0 324.3L304.5 324.4L305.0 324.5L305.5 324.5L342.0 324.8L342.5 323.1L343.0 312.1L343.5 315.0L344.0 316.5L344.5 317.9L345.0 319.3L345.5 320.3L346.0 321.0L346.5 321.3L347.0 321.9L347.5 322.5L348.0 322.9L348.5 323.2L349.0 323.4L349.5 323.6L350.0 323.7L350.5 323.9L351.0 324.0L351.5 324.2L352.0 324.3L352.5 324.3L353.0 324.4L353.5 324.5L354.0 324.5L354.5 324.5L358.0 324.7L358.5 322.9L359.0 318.1L359.5 319.5L360.0 320.9L360.5 321.5L361.0 321.9L361.5 322.4L362.0 322.8L362.5 323.1L363.0 323.4L363.5 323.6L364.0 323.7L364.5 323.8L365.0 324.0L365.5 324.2L366.0 324.2L366.5 324.3L367.0 324.4L367.5 324.4L368.0 324.5L404.0 324.8L404.5 313.1L405.0 313.3L405.5 315.1L406.0 316.5L406.5 318.5L407.0 319.0L407.5 320.2L408.0 320.6L408.5 321.3L409.0 322.0L409.5 322.3L410.0 322.6L410.5 323.1L411.0 323.4L411.5 323.4L412.0 323.7L412.5 323.9L413.0 324.0L413.5 324.1L414.0 324.2L414.5 324.3L415.0 324.4L415.5 324.4L416.0 324.5L416.5 324.5L419.0 324.7L419.5 321.4L420.0 318.2L420.5 319.2L421.0 320.0L421.5 320.9L422.0 321.4L422.5 322.2L423.0 322.6L423.5 323.0L424.0 323.2L424.5 323.5L425.0 323.7L425.5 323.9L426.0 323.9L426.5 324.1L427.0 324.2L427.5 324.3L428.0 324.3L428.5 324.4L429.0 324.5L429.5 324.5L464.5 324.8L465.0 320.4L465.5 311.4L466.0 315.0L466.5 316.0L467.0 318.1L467.5 318.7L468.0 319.5L468.5 320.6L469.0 321.2L469.5 321.7L470.0 322.2L470.5 322.5L471.0 323.1L471.5 323.2L472.0 323.4L472.5 323.7L473.0 323.8L473.5 323.9L474.0 324.1L474.5 324.2L475.0 324.3L475.5 324.4L476.0 324.5L476.5 324.5L477.0 324.5L526.0 324.8L526.5 322.5L527.0 310.9L527.5 313.6L528.0 316.4L528.5 318.0L529.0 319.1L529.5 319.8L530.0 320.3L530.5 321.1L531.0 321.8L531.5 322.2L532.0 322.6L532.5 323.0L533.0 323.3L533.5 323.4L534.0 323.6L534.5 323.8L535.0 323.9L535.5 324.0L536.0 324.2L536.5 324.2L537.0 324.4L537.5 324.4L538.0 324.5L538.5 324.5L587.5 324.8L588.0 324.1L588.5 312.1L589.0 314.0L589.5 315.5L590.0 317.4L590.5 318.2L591.0 319.2L591.5 320.4L592.0 321.1L592.5 321.7L593.0 322.2L593.5 322.6L594.0 322.8L594.5 323.1L595.0 323.4L595.5 323.7L596.0 323.7L596.5 324.0L597.0 324.0L597.5 324.2L598.0 324.3L598.5 324.4L599.0 324.4L599.5 324.5L600.0 324.5L649.5 324.8L650.0 314.9L650.5 312.8L651.0 315.3L651.5 317.5L652.0 318.4L652.5 319.2L653.0 319.9L653.5 321.0L654.0 321.5L654.5 322.0L655.0 322.5L655.5 322.9L656.0 323.0L656.5 323.3L657.0 323.6L657.5 323.7L658.0 323.9L658.5 324.0L659.0 324.1L659.5 324.2L660.0 324.3L660.5 324.4L661.0 324.5L661.5 324.5L662.0 324.5L711.0 324.8L711.5 316.6L712.0 312.4L712.5 314.5L713.0 316.5L713.5 317.7L714.0 319.1L714.5 320.3L715.0 320.9L715.5 321.6L716.0 322.1L716.5 322.3L717.0 322.6L717.5 323.1L718.0 323.3L718.5 323.5L719.0 323.6L719.5 323.8L720.0 324.0L720.5 324.1L721.0 324.3L721.5 324.3L722.0 324.4L722.5 324.5L723.0 324.5L772.5 324.8L773.0 318.2L773.5 312.1L774.0 315.2L774.5 317.0L775.0 317.8L775.5 318.7L776.0 320.3L776.5 321.0L777.0 321.5L777.5 321.9L778.0 322.2L778.5 322.6L779.0 322.9L779.5 323.2L780.0 323.5L780.5 323.7L781.0 323.8L781.5 323.9L782.0 324.1L782.5 324.2L783.0 324.3L783.5 324.4L784.0 324.5L784.5 324.5L785.0 324.6L834.0 324.8L834.5 320.2L835.0 312.5L835.5 314.1L836.0 316.3L836.5 318.1L837.0 318.8L837.5 319.9L838.0 320.5L838.5 321.4L839.0 321.7L839.5 322.1L840.0 322.7L840.5 322.8L841.0 323.2L841.5 323.4L842.0 323.6L842.5 323.8L843.0 324.0L843.5 324.1L844.0 324.2L844.5 324.3L845.0 324.3L845.5 324.4L846.0 324.5L846.5 324.5L895.5 324.8L896.0 322.1L896.5 311.0L897.0 314.0L897.5 316.5L898.0 317.3L898.5 318.8L899.0 319.8L899.5 320.7L900.0 321.4L900.5 321.9L901.0 322.0L901.5 322.5L902.0 322.9L902.5 323.1L903.0 323.3L903.5 323.7L904.0 323.8L904.5 323.9L905.0 324.1L905.5 324.2L906.0 324.3L906.5 324.3L907.0 324.4L907.5 324.5L908.0 324.5L957.0 324.8L957.5 323.7L958.0 312.8L958.5 313.7L959.0 315.9L959.5 316.9L960.0 318.7L960.5 319.8L961.0 320.1L961.5 320.9L962.0 321.7L962.5 321.9L963.0 322.4L963.5 322.9L964.0 323.2L964.5 323.4L965.0 323.6L965.5 323.8L966.0 323.9L966.5 324.1L967.0 324.2L967.5 324.2L968.0 324.3L968.5 324.4L969.0 324.4L969.5 324.5L1019.0 324.8L1019.5 313.8L1020.0 313.4L1020.5 316.2L1021.0 317.5L1021.5 318.3L1022.0 319.6L1022.5 320.2L1023.0 321.1L1023.5 321.5L1024.0 321.8L1024.5 322.3L1025.0 322.8L1025.5 323.2L1026.0 323.3L1026.5 323.6L1027.0 323.8L1027.5 323.9L1028.0 324.0L1028.5 324.1L1029.0 324.3L1029.5 324.4L1030.0 324.4L1030.5 324.4L1031.0 324.5L1031.5 324.6L1080.5 324.8L1081.0 315.3L1081.5 312.7L1082.0 314.8L1082.5 316.6L1083.0 318.5L1083.5 319.2L1084.0 319.8L1084.5 320.7L1085.0 321.2L1085.5 322.0L1086.0 322.3L1086.5 322.7L1087.0 323.0L1087.5 323.3L1088.0 323.5L1088.5 323.7L1089.0 323.9L1089.5 324.0L1090.0 324.1L1090.5 324.2L1091.0 324.3L1091.0 325.0L1090.5 325.1L1090.0 325.2L1089.5 325.2L1089.0 325.3L1088.5 325.4L1088.0 325.5L1087.5 325.6L1087.0 325.9L1086.5 326.1L1086.0 326.3L1085.5 326.5L1085.0 326.8L1084.5 327.3L1084.0 328.0L1083.5 328.6L1083.0 329.4L1082.5 330.2L1082.0 331.0L1081.5 333.3L1081.0 331.4L1080.5 324.8L1029.5 325.0L1029.0 325.1L1028.5 325.1L1028.0 325.2L1027.5 325.3L1027.0 325.4L1026.5 325.5L1026.0 325.7L1025.5 325.8L1025.0 326.0L1024.5 326.3L1024.0 326.5L1023.5 326.8L1023.0 327.3L1022.5 327.7L1022.0 328.1L1021.5 329.2L1021.0 330.3L1020.5 330.8L1020.0 332.4L1019.5 332.7L1019.0 324.8L967.5 325.1L967.0 325.1L966.5 325.2L966.0 325.3L965.5 325.4L965.0 325.5L964.5 325.6L964.0 325.8L963.5 326.0L963.0 326.2L962.5 326.4L962.0 326.9L961.5 327.2L961.0 327.7L960.5 328.4L960.0 328.8L959.5 329.7L959.0 330.8L958.5 332.0L958.0 333.4L957.5 325.6L957.0 324.8L906.0 325.1L905.5 325.1L905.0 325.2L904.5 325.3L904.0 325.4L903.5 325.4L903.0 325.6L902.5 325.8L902.0 326.0L901.5 326.2L901.0 326.3L900.5 326.8L900.0 327.2L899.5 327.5L899.0 328.0L898.5 329.0L898.0 330.0L897.5 331.1L897.0 332.3L896.5 334.0L896.0 326.8L895.5 324.8L844.5 325.1L844.0 325.1L843.5 325.2L843.0 325.3L842.5 325.3L842.0 325.5L841.5 325.6L841.0 325.8L840.5 325.9L840.0 326.1L839.5 326.5L839.0 326.8L838.5 327.2L838.0 327.3L837.5 328.1L837.0 328.8L836.5 329.3L836.0 330.4L835.5 332.1L835.0 333.5L834.5 328.2L834.0 324.8L783.0 325.0L782.5 325.1L782.0 325.2L781.5 325.2L781.0 325.4L780.5 325.4L780.0 325.5L779.5 325.7L779.0 325.8L778.5 326.1L778.0 326.4L777.5 326.6L777.0 326.9L776.5 327.3L776.0 328.0L775.5 328.3L775.0 329.5L774.5 330.0L774.0 331.6L773.5 333.4L773.0 329.6L772.5 324.8L721.0 325.1L720.5 325.1L720.0 325.2L719.5 325.3L719.0 325.4L718.5 325.6L718.0 325.7L717.5 325.8L717.0 326.1L716.5 326.4L716.0 326.5L715.5 326.9L715.0 327.2L714.5 327.9L714.0 328.5L713.5 329.2L713.0 329.9L712.5 331.3L712.0 333.1L711.5 330.5L711.0 324.8L659.5 325.1L659.0 325.1L658.5 325.2L658.0 325.3L657.5 325.4L657.0 325.5L656.5 325.6L656.0 325.8L655.5 326.1L655.0 326.3L654.5 326.6L654.0 327.0L653.5 327.4L653.0 327.9L652.5 328.5L652.0 328.9L651.5 330.0L651.0 331.3L650.5 332.5L650.0 331.6L649.5 324.8L598.0 325.1L597.5 325.1L597.0 325.2L596.5 325.3L596.0 325.4L595.5 325.4L595.0 325.6L594.5 325.8L594.0 326.0L593.5 326.3L593.0 326.4L592.5 326.8L592.0 327.1L591.5 327.5L591.0 328.5L590.5 328.8L590.0 329.8L589.5 330.9L589.0 332.2L588.5 333.5L588.0 325.4L587.5 324.8L536.5 325.1L536.0 325.1L535.5 325.2L535.0 325.3L534.5 325.4L534.0 325.5L533.5 325.6L533.0 325.8L532.5 326.0L532.0 326.1L531.5 326.5L531.0 326.6L530.5 327.2L530.0 327.7L529.5 328.1L529.0 328.9L528.5 329.9L528.0 330.6L527.5 332.2L527.0 334.6L526.5 326.6L526.0 324.8L475.0 325.1L474.5 325.1L474.0 325.2L473.5 325.2L473.0 325.3L472.5 325.4L472.0 325.6L471.5 325.7L471.0 325.9L470.5 326.1L470.0 326.3L469.5 326.8L469.0 327.2L468.5 327.4L468.0 328.0L467.5 329.0L467.0 329.7L466.5 330.6L466.0 331.5L465.5 334.2L465.0 327.6L464.5 324.8L428.0 325.1L427.5 325.1L427.0 325.2L426.5 325.3L426.0 325.3L425.5 325.5L425.0 325.6L424.5 325.7L424.0 325.8L423.5 326.0L423.0 326.5L422.5 326.6L422.0 327.1L421.5 327.8L421.0 328.0L420.5 329.0L420.0 329.7L419.5 327.7L419.0 324.8L414.0 325.1L413.5 325.1L413.0 325.2L412.5 325.3L412.0 325.4L411.5 325.5L411.0 325.7L410.5 325.8L410.0 326.0L409.5 326.3L409.0 326.6L408.5 326.7L408.0 327.2L407.5 327.8L407.0 328.1L406.5 329.1L406.0 329.9L405.5 331.1L405.0 332.7L404.5 332.9L404.0 324.8L366.5 325.1L366.0 325.1L365.5 325.2L365.0 325.3L364.5 325.3L364.0 325.4L363.5 325.6L363.0 325.7L362.5 325.9L362.0 326.3L361.5 326.4L361.0 326.7L360.5 327.2L360.0 327.8L359.5 328.2L359.0 329.0L358.5 326.2L358.0 324.8L352.0 325.1L351.5 325.1L351.0 325.2L350.5 325.3L350.0 325.4L349.5 325.5L349.0 325.6L348.5 325.9L348.0 326.0L347.5 326.4L347.0 326.7L346.5 326.9L346.0 327.2L345.5 327.7L345.0 328.7L344.5 329.6L344.0 330.3L343.5 331.8L343.0 333.2L342.5 326.1L342.0 324.8L304.0 325.0L303.5 325.1L303.0 325.2L302.5 325.2L302.0 325.3L301.5 325.4L301.0 325.6L300.5 325.7L300.0 325.8L299.5 326.0L299.0 326.3L298.5 326.6L298.0 327.0L297.5 327.3L297.0 328.3L296.5 329.0L296.0 327.9L295.5 324.8L289.5 325.1L289.0 325.1L288.5 325.2L288.0 325.3L287.5 325.4L287.0 325.5L286.5 325.7L286.0 325.8L285.5 326.0L285.0 326.1L284.5 326.4L284.0 326.8L283.5 327.2L283.0 327.4L282.5 328.1L282.0 328.9L281.5 330.1L281.0 331.3L280.5 333.0L280.0 329.1L279.5 324.8L242.0 325.1L241.5 325.2L241.0 325.2L240.5 325.3L240.0 325.4L239.5 325.5L239.0 325.6L238.5 325.8L238.0 326.0L237.5 326.2L237.0 326.7L236.5 327.0L236.0 327.4L235.5 328.1L235.0 328.5L234.5 328.9L234.0 324.8L228.5 325.1L228.0 325.1L227.5 325.2L227.0 325.3L226.5 325.4L226.0 325.5L225.5 325.6L225.0 325.8L224.5 325.9L224.0 326.2L223.5 326.5L223.0 326.9L222.5 327.1L222.0 327.8L221.5 328.3L221.0 328.7L220.5 329.6L220.0 331.3L219.5 332.3L219.0 328.7L218.5 324.8L180.5 325.1L180.0 325.2L179.5 325.3L179.0 325.3L178.5 325.5L178.0 325.5L177.5 325.8L177.0 325.8L176.5 326.0L176.0 326.3L175.5 326.8L175.0 327.1L174.5 327.5L174.0 328.3L173.5 329.0L173.0 327.1L172.5 324.8L167.0 325.1L166.5 325.1L166.0 325.2L165.5 325.2L165.0 325.4L164.5 325.5L164.0 325.6L163.5 325.7L163.0 325.8L162.5 326.2L162.0 326.3L161.5 326.8L161.0 327.1L160.5 327.5L160.0 327.9L159.5 328.5L159.0 329.6L158.5 330.5L158.0 331.9L157.5 333.4L157.0 327.8L156.5 324.8L156.0 324.8Z" fill="#ff78a8" stroke="#f4c6d6" stroke-opacity="0.45" stroke-width="0.5" />
<rect x="156" y="424.05" width="935" height="1.5" fill="#e99bbb"/>
<path d="M156.0 424.8L187.5 424.8L188.0 420.7L188.5 415.0L189.0 416.7L189.5 418.0L190.0 419.2L190.5 420.4L191.0 421.3L191.5 421.8L192.0 422.3L192.5 422.7L193.0 423.2L193.5 423.5L194.0 423.6L194.5 423.8L195.0 424.0L195.5 424.2L196.0 424.2L196.5 424.3L197.0 424.4L197.5 424.5L203.0 424.8L203.5 419.5L204.0 416.7L204.5 418.1L205.0 419.1L205.5 420.4L206.0 421.2L206.5 421.9L207.0 422.3L207.5 422.8L208.0 423.0L208.5 423.3L209.0 423.7L209.5 423.8L210.0 424.0L210.5 424.1L211.0 424.3L211.5 424.3L212.0 424.4L212.5 424.5L218.5 424.8L219.0 417.8L219.5 417.4L220.0 418.7L220.5 419.3L221.0 420.7L221.5 421.2L222.0 421.8L222.5 422.3L223.0 422.9L223.5 423.1L224.0 423.5L224.5 423.7L225.0 423.8L225.5 424.1L226.0 424.2L226.5 424.3L227.0 424.4L227.5 424.4L228.0 424.5L234.0 424.6L234.5 418.4L235.0 419.6L235.5 420.3L236.0 421.1L236.5 421.8L237.0 422.3L237.5 422.7L238.0 423.2L238.5 423.4L239.0 423.6L239.5 423.8L240.0 424.0L240.5 424.1L241.0 424.3L241.5 424.4L242.0 424.5L242.5 424.5L249.0 424.8L249.5 422.4L250.0 415.8L250.5 417.2L251.0 418.4L251.5 419.6L252.0 420.7L252.5 421.1L253.0 422.0L253.5 422.4L254.0 422.7L254.5 423.1L255.0 423.5L255.5 423.7L256.0 423.9L256.5 424.1L257.0 424.2L257.5 424.3L258.0 424.4L258.5 424.5L259.0 424.5L264.5 424.8L265.0 421.2L265.5 417.4L266.0 419.1L266.5 420.2L267.0 421.0L267.5 421.6L268.0 422.1L268.5 422.6L269.0 423.0L269.5 423.3L270.0 423.6L270.5 423.8L271.0 423.9L271.5 424.1L272.0 424.2L272.5 424.3L273.0 424.4L273.5 424.5L274.0 424.5L311.0 424.8L311.5 415.4L312.0 417.0L312.5 418.6L313.0 419.9L313.5 420.7L314.0 421.5L314.5 422.1L315.0 422.4L315.5 422.8L316.0 423.3L316.5 423.5L317.0 423.7L317.5 423.9L318.0 424.0L318.5 424.2L319.0 424.3L319.5 424.4L320.0 424.5L320.5 424.5L326.0 424.8L326.5 423.2L327.0 417.2L327.5 419.0L328.0 420.0L328.5 420.7L329.0 421.5L329.5 422.0L330.0 422.4L330.5 423.0L331.0 423.2L331.5 423.4L332.0 423.8L332.5 423.9L333.0 424.1L333.5 424.2L334.0 424.3L334.5 424.4L335.0 424.5L335.5 424.5L341.5 424.8L342.0 421.0L342.5 416.4L343.0 417.9L343.5 419.4L344.0 420.0L344.5 421.0L345.0 421.6L345.5 422.3L346.0 422.6L346.5 423.1L347.0 423.4L347.5 423.6L348.0 423.8L348.5 424.0L349.0 424.1L349.5 424.2L350.0 424.4L350.5 424.4L351.0 424.5L357.0 424.8L357.5 420.9L358.0 419.0L358.5 420.2L359.0 420.9L359.5 421.5L360.0 422.3L360.5 422.6L361.0 423.1L361.5 423.3L362.0 423.6L362.5 423.8L363.0 424.0L363.5 424.1L364.0 424.2L364.5 424.3L365.0 424.4L365.5 424.5L366.0 424.5L372.5 424.8L373.0 417.1L373.5 417.5L374.0 418.6L374.5 419.5L375.0 420.4L375.5 421.3L376.0 421.9L376.5 422.4L377.0 422.8L377.5 423.2L378.0 423.4L378.5 423.7L379.0 423.9L379.5 424.0L380.0 424.1L380.5 424.3L381.0 424.4L381.5 424.4L382.0 424.5L387.5 424.8L388.0 424.3L388.5 417.5L389.0 418.6L389.5 419.5L390.0 420.5L390.5 421.3L391.0 421.9L391.5 422.5L392.0 422.8L392.5 423.2L393.0 423.4L393.5 423.6L394.0 423.9L394.5 424.0L395.0 424.2L395.5 424.3L396.0 424.4L396.5 424.5L397.0 424.5L434.0 424.8L434.5 416.6L435.0 416.2L435.5 417.4L436.0 419.0L436.5 420.0L437.0 420.8L437.5 421.6L438.0 421.9L438.5 422.5L439.0 422.9L439.5 423.3L440.0 423.5L440.5 423.8L441.0 424.0L441.5 424.1L442.0 424.2L442.5 424.3L443.0 424.4L443.5 424.5L444.0 424.5L449.5 424.7L450.0 417.0L450.5 418.6L451.0 419.5L451.5 420.6L452.0 421.2L452.5 421.9L453.0 422.3L453.5 422.8L454.0 423.2L454.5 423.5L455.0 423.7L455.5 423.8L456.0 424.0L456.5 424.2L457.0 424.3L457.5 424.4L458.0 424.4L458.5 424.5L459.0 424.5L464.5 424.8L465.0 422.6L465.5 415.5L466.0 416.8L466.5 418.1L467.0 419.2L467.5 420.5L468.0 421.0L468.5 421.6L469.0 422.2L469.5 422.8L470.0 423.0L470.5 423.4L471.0 423.6L471.5 423.8L472.0 424.0L472.5 424.1L473.0 424.3L473.5 424.3L474.0 424.4L474.5 424.5L475.0 424.5L480.0 424.8L480.5 421.9L481.0 418.7L481.5 419.7L482.0 420.9L482.5 421.4L483.0 422.2L483.5 422.6L484.0 422.9L484.5 423.3L485.0 423.6L485.5 423.7L486.0 423.9L486.5 424.1L487.0 424.2L487.5 424.3L488.0 424.4L488.5 424.5L489.0 424.5L495.5 424.8L496.0 419.0L496.5 417.0L497.0 418.4L497.5 419.7L498.0 420.4L498.5 421.1L499.0 421.9L499.5 422.3L500.0 422.7L500.5 423.2L501.0 423.3L501.5 423.6L502.0 423.8L502.5 424.0L503.0 424.2L503.5 424.2L504.0 424.3L504.5 424.4L505.0 424.5L505.5 424.6L511.0 424.8L511.5 418.1L512.0 418.1L512.5 419.4L513.0 420.6L513.5 421.3L514.0 421.8L514.5 422.3L515.0 422.7L515.5 423.1L516.0 423.5L516.5 423.6L517.0 423.9L517.5 424.1L518.0 424.1L518.5 424.3L519.0 424.4L519.5 424.5L520.0 424.5L520.5 424.6L541.5 424.8L542.0 423.0L542.5 422.7L543.0 422.8L543.5 424.0L544.0 422.5L544.5 422.6L545.0 423.2L545.5 423.1L546.0 424.0L546.5 423.6L547.0 422.8L547.5 422.7L548.0 423.0L548.5 424.0L549.0 423.7L549.5 422.4L550.0 423.5L550.5 423.1L551.0 423.7L551.5 422.9L552.0 422.6L552.5 423.4L553.0 423.8L553.5 423.5L554.0 424.0L554.5 423.5L555.0 422.7L555.5 423.5L556.0 422.9L556.5 422.4L557.0 424.8L557.5 420.8L558.0 415.4L558.5 416.6L559.0 418.6L559.5 419.6L560.0 420.4L560.5 421.3L561.0 422.0L561.5 422.4L562.0 422.7L562.5 423.1L563.0 423.5L563.5 423.6L564.0 423.9L564.5 424.0L565.0 424.2L565.5 424.2L566.0 424.4L566.5 424.5L567.0 424.5L572.5 424.8L573.0 420.1L573.5 417.9L574.0 419.4L574.5 419.9L575.0 421.0L575.5 421.7L576.0 422.3L576.5 422.6L577.0 423.0L577.5 423.3L578.0 423.6L578.5 423.8L579.0 424.0L579.5 424.1L580.0 424.3L580.5 424.3L581.0 424.4L581.5 424.5L582.0 424.5L588.0 424.8L588.5 417.1L589.0 417.2L589.5 418.6L590.0 419.8L590.5 420.6L591.0 421.2L591.5 422.0L592.0 422.5L592.5 422.9L593.0 423.2L593.5 423.4L594.0 423.7L594.5 423.9L595.0 424.1L595.5 424.1L596.0 424.3L596.5 424.4L597.0 424.4L597.5 424.5L603.5 424.6L604.0 418.2L604.5 419.5L605.0 420.5L605.5 421.4L606.0 421.8L606.5 422.3L607.0 422.7L607.5 423.2L608.0 423.4L608.5 423.7L609.0 423.9L609.5 424.1L610.0 424.2L610.5 424.3L611.0 424.4L611.5 424.4L612.0 424.5L612.5 424.6L618.5 424.8L619.0 421.7L619.5 412.2L620.0 414.8L620.5 416.1L621.0 418.2L621.5 419.4L622.0 420.0L622.5 420.9L623.0 421.6L623.5 422.2L624.0 422.6L624.5 423.1L625.0 423.4L625.5 423.6L626.0 423.8L626.5 424.0L627.0 424.1L627.5 424.3L628.0 424.4L628.5 424.4L629.0 424.5L629.5 424.5L634.0 424.8L634.5 421.9L635.0 418.9L635.5 420.2L636.0 420.9L636.5 421.7L637.0 422.1L637.5 422.6L638.0 423.0L638.5 423.3L639.0 423.5L639.5 423.8L640.0 423.9L640.5 424.1L641.0 424.2L641.5 424.3L642.0 424.4L642.5 424.5L643.0 424.5L664.5 424.8L665.0 422.8L665.5 424.0L666.0 423.4L666.5 424.0L667.0 423.7L667.5 423.7L668.0 422.5L668.5 423.4L669.0 423.2L669.5 423.8L670.0 422.7L670.5 423.9L671.0 423.9L671.5 423.0L672.0 423.5L672.5 423.1L673.0 423.5L673.5 423.9L674.0 422.9L674.5 423.7L675.0 422.4L675.5 423.4L676.0 423.0L676.5 423.3L677.0 423.9L677.5 423.9L678.0 422.7L678.5 422.8L679.0 423.0L679.5 423.8L680.0 424.8L680.5 423.3L681.0 417.1L681.5 418.9L682.0 419.7L682.5 420.6L683.0 421.3L683.5 422.0L684.0 422.5L684.5 423.0L685.0 423.3L685.5 423.5L686.0 423.7L686.5 423.9L687.0 424.1L687.5 424.2L688.0 424.3L688.5 424.4L689.0 424.4L689.5 424.5L695.5 424.8L696.0 422.3L696.5 418.7L697.0 420.0L697.5 420.8L698.0 421.4L698.5 421.9L699.0 422.6L699.5 423.0L700.0 423.2L700.5 423.5L701.0 423.7L701.5 424.0L702.0 424.1L702.5 424.2L703.0 424.3L703.5 424.4L704.0 424.5L704.5 424.5L711.0 424.8L711.5 420.2L712.0 418.3L712.5 419.3L713.0 420.0L713.5 420.8L714.0 421.5L714.5 422.2L715.0 422.7L715.5 423.1L716.0 423.3L716.5 423.6L717.0 423.8L717.5 424.0L718.0 424.1L718.5 424.3L719.0 424.3L719.5 424.4L720.0 424.5L720.5 424.5L726.5 424.8L727.0 419.3L727.5 419.6L728.0 420.5L728.5 421.0L729.0 421.6L729.5 422.3L730.0 422.7L730.5 423.1L731.0 423.4L731.5 423.6L732.0 423.8L732.5 424.0L733.0 424.1L733.5 424.3L734.0 424.4L734.5 424.4L735.0 424.5L735.5 424.6L741.5 424.8L742.0 424.2L742.5 413.7L743.0 415.2L743.5 416.6L744.0 418.4L744.5 419.3L745.0 420.5L745.5 421.3L746.0 421.9L746.5 422.3L747.0 422.8L747.5 423.2L748.0 423.4L748.5 423.6L749.0 423.9L749.5 424.1L750.0 424.1L750.5 424.3L751.0 424.3L751.5 424.4L752.0 424.5L757.0 424.8L757.5 423.1L758.0 418.6L758.5 419.9L759.0 420.8L759.5 421.4L760.0 421.9L760.5 422.4L761.0 422.9L761.5 423.3L762.0 423.5L762.5 423.7L763.0 423.9L763.5 424.0L764.0 424.2L764.5 424.3L765.0 424.4L765.5 424.5L766.0 424.5L788.0 424.8L788.5 423.8L789.0 423.5L789.5 422.4L790.0 422.4L790.5 423.2L791.0 423.2L791.5 423.4L792.0 423.4L792.5 422.5L793.0 423.2L793.5 423.9L794.0 422.7L794.5 423.4L795.0 422.8L795.5 422.9L796.0 423.4L796.5 423.6L797.0 422.8L797.5 423.5L798.0 423.0L798.5 424.0L799.0 423.6L799.5 423.3L800.0 423.0L800.5 423.4L801.0 422.8L801.5 423.4L802.0 422.6L802.5 422.4L803.0 424.8L803.5 424.8L804.0 414.3L804.5 416.5L805.0 418.0L805.5 418.9L806.0 420.1L806.5 421.0L807.0 421.4L807.5 422.1L808.0 422.7L808.5 422.9L809.0 423.4L809.5 423.6L810.0 423.8L810.5 424.0L811.0 424.1L811.5 424.2L812.0 424.3L812.5 424.4L813.0 424.5L813.5 424.5L818.5 424.8L819.0 423.4L819.5 418.9L820.0 419.5L820.5 420.6L821.0 421.4L821.5 422.0L822.0 422.5L822.5 422.9L823.0 423.2L823.5 423.4L824.0 423.7L824.5 423.9L825.0 424.1L825.5 424.2L826.0 424.3L826.5 424.4L827.0 424.5L827.5 424.5L834.0 424.8L834.5 420.9L835.0 416.3L835.5 418.1L836.0 419.3L836.5 420.2L837.0 421.0L837.5 421.7L838.0 422.2L838.5 422.6L839.0 423.1L839.5 423.3L840.0 423.6L840.5 423.8L841.0 424.0L841.5 424.1L842.0 424.3L842.5 424.3L843.0 424.4L843.5 424.5L844.0 424.6L849.5 424.8L850.0 420.6L850.5 419.2L851.0 419.9L851.5 421.0L852.0 421.6L852.5 422.1L853.0 422.7L853.5 423.0L854.0 423.3L854.5 423.6L855.0 423.8L855.5 423.9L856.0 424.1L856.5 424.3L857.0 424.3L857.5 424.4L858.0 424.5L858.5 424.5L865.0 424.8L865.5 414.7L866.0 414.6L866.5 416.9L867.0 417.9L867.5 419.1L868.0 420.2L868.5 421.2L869.0 421.6L869.5 422.3L870.0 422.7L870.5 423.1L871.0 423.4L871.5 423.6L872.0 423.9L872.5 424.0L873.0 424.2L873.5 424.3L874.0 424.3L874.5 424.4L875.0 424.5L880.0 424.8L880.5 424.4L881.0 418.5L881.5 419.8L882.0 420.5L882.5 421.3L883.0 421.8L883.5 422.4L884.0 422.7L884.5 423.2L885.0 423.4L885.5 423.6L886.0 423.9L886.5 424.0L887.0 424.2L887.5 424.3L888.0 424.4L888.5 424.4L889.0 424.5L889.5 424.6L911.0 424.8L911.5 423.2L912.0 423.7L912.5 422.5L913.0 422.9L913.5 422.8L914.0 422.8L914.5 422.9L915.0 423.0L915.5 423.0L916.0 424.0L916.5 423.3L917.0 423.6L917.5 423.0L918.0 423.2L918.5 423.9L919.0 423.5L919.5 423.7L920.0 423.3L920.5 423.0L921.0 423.6L921.5 424.0L922.0 423.6L922.5 423.8L923.0 423.4L923.5 423.0L924.0 423.1L924.5 423.1L925.0 422.7L925.5 422.7L926.0 423.4L926.5 424.8L927.0 421.1L927.5 418.8L928.0 420.3L928.5 421.0L929.0 421.6L929.5 422.1L930.0 422.5L930.5 423.0L931.0 423.3L931.5 423.5L932.0 423.8L932.5 423.9L933.0 424.1L933.5 424.2L934.0 424.3L934.5 424.4L935.0 424.5L935.5 424.5L942.0 424.8L942.5 419.5L943.0 419.3L943.5 420.4L944.0 420.9L944.5 421.9L945.0 422.4L945.5 422.7L946.0 423.1L946.5 423.4L947.0 423.7L947.5 423.8L948.0 424.0L948.5 424.1L949.0 424.3L949.5 424.3L950.0 424.4L950.5 424.5L957.5 424.6L958.0 417.5L958.5 418.8L959.0 419.8L959.5 420.4L960.0 421.3L960.5 421.8L961.0 422.5L961.5 422.8L962.0 423.1L962.5 423.4L963.0 423.7L963.5 423.9L964.0 424.0L964.5 424.1L965.0 424.3L965.5 424.4L966.0 424.4L966.5 424.5L972.5 424.8L973.0 423.3L973.5 418.4L974.0 420.0L974.5 420.5L975.0 421.5L975.5 422.1L976.0 422.4L976.5 422.8L977.0 423.1L977.5 423.5L978.0 423.8L978.5 423.9L979.0 424.1L979.5 424.2L980.0 424.3L980.5 424.4L981.0 424.5L981.5 424.5L988.0 424.8L988.5 421.2L989.0 417.8L989.5 419.0L990.0 419.9L990.5 420.6L991.0 421.6L991.5 422.1L992.0 422.7L992.5 422.9L993.0 423.3L993.5 423.5L994.0 423.7L994.5 424.0L995.0 424.1L995.5 424.2L996.0 424.3L996.5 424.4L997.0 424.5L997.5 424.5L1003.5 424.8L1004.0 421.4L1004.5 420.1L1005.0 421.1L1005.5 421.7L1006.0 422.3L1006.5 422.8L1007.0 423.1L1007.5 423.4L1008.0 423.6L1008.5 423.8L1009.0 424.0L1009.5 424.2L1010.0 424.3L1010.5 424.4L1011.0 424.4L1011.5 424.5L1012.0 424.6L1034.0 424.8L1034.5 423.0L1035.0 422.5L1035.5 423.0L1036.0 422.6L1036.5 423.8L1037.0 423.0L1037.5 423.0L1038.0 423.4L1038.5 423.6L1039.0 422.4L1039.5 422.5L1040.0 423.0L1040.5 422.4L1041.0 423.3L1041.5 422.4L1042.0 423.5L1042.5 423.8L1043.0 423.3L1043.5 422.7L1044.0 424.0L1044.5 423.6L1045.0 422.7L1045.5 423.6L1046.0 422.4L1046.5 423.0L1047.0 423.0L1047.5 422.8L1048.0 422.8L1048.5 423.1L1049.0 423.5L1049.5 424.8L1050.0 421.2L1050.5 416.4L1051.0 418.1L1051.5 418.9L1052.0 420.3L1052.5 420.8L1053.0 421.8L1053.5 422.2L1054.0 422.6L1054.5 423.0L1055.0 423.3L1055.5 423.6L1056.0 423.8L1056.5 424.0L1057.0 424.1L1057.5 424.2L1058.0 424.4L1058.5 424.4L1059.0 424.5L1059.5 424.5L1065.0 424.8L1065.5 421.6L1066.0 420.3L1066.5 421.0L1067.0 421.7L1067.5 422.2L1068.0 422.6L1068.5 423.0L1069.0 423.3L1069.5 423.6L1070.0 423.8L1070.5 424.0L1071.0 424.1L1071.5 424.2L1072.0 424.4L1072.5 424.4L1073.0 424.5L1080.5 424.8L1081.0 419.5L1081.5 419.1L1082.0 420.4L1082.5 420.9L1083.0 421.8L1083.5 422.3L1084.0 422.7L1084.5 423.1L1085.0 423.4L1085.5 423.7L1086.0 423.9L1086.5 424.0L1087.0 424.2L1087.5 424.3L1088.0 424.3L1088.5 424.4L1089.0 424.5L1091.0 424.7L1091.0 425.2L1090.5 425.2L1090.0 425.3L1089.5 425.4L1089.0 425.6L1088.5 425.6L1088.0 425.8L1087.5 426.0L1087.0 426.2L1086.5 426.6L1086.0 426.8L1085.5 427.3L1085.0 427.4L1084.5 428.0L1084.0 428.8L1083.5 429.6L1083.0 430.4L1082.5 430.9L1082.0 432.5L1081.5 433.8L1081.0 432.8L1080.5 424.9L1075.5 425.1L1075.0 425.1L1074.5 425.2L1074.0 425.3L1073.5 425.3L1073.0 425.4L1072.5 425.5L1072.0 425.7L1071.5 425.8L1071.0 426.1L1070.5 426.3L1070.0 426.5L1069.5 426.8L1069.0 427.2L1068.5 427.7L1068.0 428.0L1067.5 428.7L1067.0 429.7L1066.5 430.2L1066.0 431.4L1065.5 429.0L1065.0 424.9L1062.0 425.1L1061.5 425.1L1061.0 425.2L1060.5 425.3L1060.0 425.4L1059.5 425.5L1059.0 425.6L1058.5 425.8L1058.0 425.9L1057.5 426.1L1057.0 426.3L1056.5 426.6L1056.0 427.0L1055.5 427.4L1055.0 427.7L1054.5 428.3L1054.0 428.9L1053.5 429.7L1053.0 430.3L1052.5 432.0L1052.0 432.6L1051.5 434.7L1051.0 436.6L1050.5 438.4L1050.0 430.4L1049.5 424.8L1049.0 426.4L1048.5 426.1L1048.0 426.1L1047.5 425.8L1047.0 426.6L1046.5 426.4L1046.0 426.1L1045.5 425.8L1045.0 426.0L1044.5 427.1L1044.0 426.5L1043.5 426.9L1043.0 426.1L1042.5 426.6L1042.0 426.4L1041.5 426.4L1041.0 426.1L1040.5 426.4L1040.0 426.0L1039.5 427.1L1039.0 426.2L1038.5 426.1L1038.0 426.3L1037.5 427.0L1037.0 425.8L1036.5 426.5L1036.0 425.6L1035.5 426.2L1035.0 427.1L1034.5 426.5L1034.0 424.8L1014.5 425.1L1014.0 425.1L1013.5 425.2L1013.0 425.2L1012.5 425.3L1012.0 425.4L1011.5 425.5L1011.0 425.6L1010.5 425.8L1010.0 426.0L1009.5 426.2L1009.0 426.4L1008.5 426.7L1008.0 427.0L1007.5 427.4L1007.0 428.0L1006.5 428.5L1006.0 429.3L1005.5 430.1L1005.0 431.3L1004.5 432.1L1004.0 430.2L1003.5 424.9L1000.0 425.1L999.5 425.1L999.0 425.2L998.5 425.3L998.0 425.3L997.5 425.4L997.0 425.5L996.5 425.7L996.0 425.8L995.5 426.0L995.0 426.2L994.5 426.4L994.0 426.7L993.5 427.3L993.0 427.6L992.5 428.0L992.0 428.7L991.5 429.2L991.0 430.3L990.5 431.4L990.0 432.5L989.5 434.0L989.0 435.7L988.5 430.0L988.0 424.9L984.0 425.1L983.5 425.2L983.0 425.2L982.5 425.3L982.0 425.4L981.5 425.5L981.0 425.6L980.5 425.7L980.0 425.9L979.5 426.1L979.0 426.4L978.5 426.6L978.0 427.1L977.5 427.5L977.0 428.0L976.5 428.3L976.0 429.1L975.5 429.9L975.0 431.1L974.5 431.7L974.0 433.2L973.5 434.4L973.0 427.3L972.5 424.9L969.5 425.1L969.0 425.1L968.5 425.2L968.0 425.3L967.5 425.3L967.0 425.4L966.5 425.5L966.0 425.6L965.5 425.8L965.0 425.9L964.5 426.3L964.0 426.4L963.5 426.7L963.0 427.1L962.5 427.6L962.0 428.0L961.5 428.6L961.0 429.1L960.5 430.1L960.0 431.3L959.5 432.5L959.0 433.4L958.5 435.6L958.0 437.0L957.5 425.1L957.0 424.9L953.0 425.1L952.5 425.1L952.0 425.2L951.5 425.3L951.0 425.4L950.5 425.4L950.0 425.6L949.5 425.7L949.0 425.9L948.5 426.0L948.0 426.3L947.5 426.7L947.0 427.0L946.5 427.3L946.0 427.9L945.5 428.3L945.0 429.0L944.5 429.6L944.0 430.8L943.5 431.7L943.0 433.0L942.5 432.2L942.0 424.9L938.0 425.1L937.5 425.1L937.0 425.2L936.5 425.3L936.0 425.4L935.5 425.4L935.0 425.5L934.5 425.7L934.0 425.9L933.5 426.0L933.0 426.3L932.5 426.5L932.0 427.0L931.5 427.3L931.0 427.8L930.5 428.2L930.0 429.0L929.5 429.5L929.0 430.6L928.5 431.7L928.0 432.9L927.5 434.6L927.0 431.1L926.5 424.8L926.0 425.8L925.5 426.6L925.0 426.3L924.5 427.1L924.0 426.1L923.5 425.8L923.0 425.7L922.5 426.9L922.0 426.3L921.5 426.2L921.0 427.0L920.5 426.5L920.0 426.2L919.5 425.7L919.0 425.9L918.5 425.8L918.0 426.0L917.5 425.7L917.0 426.7L916.5 426.6L916.0 425.9L915.5 426.8L915.0 426.8L914.5 426.3L914.0 426.5L913.5 425.9L913.0 426.8L912.5 426.4L912.0 426.9L911.5 426.4L911.0 424.8L891.5 425.1L891.0 425.1L890.5 425.2L890.0 425.2L889.5 425.3L889.0 425.5L888.5 425.6L888.0 425.7L887.5 425.8L887.0 426.0L886.5 426.3L886.0 426.5L885.5 426.9L885.0 427.3L884.5 427.7L884.0 428.1L883.5 428.6L883.0 429.5L882.5 430.4L882.0 431.0L881.5 432.6L881.0 433.8L880.5 425.4L880.0 425.0L878.5 425.0L878.0 425.1L877.5 425.1L877.0 425.2L876.5 425.3L876.0 425.4L875.5 425.4L875.0 425.6L874.5 425.7L874.0 425.9L873.5 426.1L873.0 426.3L872.5 426.6L872.0 427.0L871.5 427.3L871.0 427.8L870.5 428.5L870.0 429.1L869.5 429.9L869.0 430.7L868.5 432.0L868.0 433.0L867.5 434.4L867.0 436.5L866.5 438.8L866.0 440.3L865.5 441.0L865.0 424.9L861.0 425.1L860.5 425.1L860.0 425.2L859.5 425.3L859.0 425.4L858.5 425.5L858.0 425.6L857.5 425.7L857.0 425.9L856.5 426.0L856.0 426.3L855.5 426.6L855.0 426.9L854.5 427.1L854.0 427.8L853.5 428.0L853.0 428.9L852.5 429.7L852.0 430.5L851.5 431.4L851.0 432.4L850.5 434.4L850.0 431.6L849.5 424.9L846.5 425.1L846.0 425.1L845.5 425.2L845.0 425.2L844.5 425.3L844.0 425.4L843.5 425.5L843.0 425.7L842.5 425.8L842.0 426.0L841.5 426.2L841.0 426.4L840.5 426.7L840.0 427.2L839.5 427.6L839.0 428.0L838.5 428.6L838.0 429.3L837.5 430.5L837.0 431.4L836.5 432.1L836.0 434.0L835.5 434.9L835.0 437.8L834.5 430.6L834.0 424.9L830.0 425.1L829.5 425.1L829.0 425.2L828.5 425.3L828.0 425.3L827.5 425.4L827.0 425.6L826.5 425.7L826.0 425.8L825.5 426.0L825.0 426.3L824.5 426.4L824.0 426.9L823.5 427.2L823.0 427.5L822.5 428.0L822.0 428.8L821.5 429.2L821.0 430.1L820.5 431.5L820.0 432.7L819.5 433.9L819.0 426.8L818.5 424.9L816.0 425.1L815.5 425.1L815.0 425.2L814.5 425.3L814.0 425.4L813.5 425.4L813.0 425.6L812.5 425.7L812.0 425.8L811.5 426.0L811.0 426.3L810.5 426.5L810.0 426.9L809.5 427.2L809.0 427.8L808.5 428.1L808.0 428.8L807.5 429.5L807.0 430.5L806.5 431.2L806.0 433.1L805.5 434.1L805.0 436.0L804.5 437.5L804.0 440.6L803.5 424.8L803.0 424.8L802.5 427.1L802.0 426.7L801.5 426.9L801.0 426.9L800.5 426.6L800.0 426.9L799.5 426.9L799.0 426.7L798.5 426.5L798.0 426.5L797.5 427.1L797.0 426.7L796.5 426.4L796.0 426.7L795.5 426.8L795.0 426.7L794.5 426.9L794.0 427.0L793.5 426.0L793.0 426.1L792.5 426.6L792.0 427.2L791.5 425.8L791.0 426.1L790.5 426.8L790.0 426.3L789.5 427.0L789.0 426.3L788.5 427.0L788.0 424.8L768.5 425.1L768.0 425.1L767.5 425.2L767.0 425.3L766.5 425.4L766.0 425.4L765.5 425.6L765.0 425.7L764.5 426.0L764.0 426.1L763.5 426.4L763.0 426.7L762.5 427.0L762.0 427.4L761.5 427.9L761.0 428.5L760.5 428.8L760.0 430.1L759.5 430.9L759.0 432.1L758.5 433.4L758.0 435.1L757.5 427.6L757.0 425.0L755.0 425.1L754.5 425.1L754.0 425.2L753.5 425.3L753.0 425.4L752.5 425.5L752.0 425.6L751.5 425.7L751.0 425.8L750.5 426.0L750.0 426.3L749.5 426.5L749.0 426.9L748.5 427.4L748.0 427.8L747.5 428.4L747.0 428.8L746.5 429.7L746.0 430.5L745.5 431.9L745.0 432.4L744.5 434.4L744.0 436.5L743.5 437.5L743.0 439.8L742.5 444.0L742.0 425.7L741.5 424.9L738.0 425.1L737.5 425.1L737.0 425.2L736.5 425.2L736.0 425.3L735.5 425.4L735.0 425.5L734.5 425.7L734.0 425.8L733.5 426.0L733.0 426.2L732.5 426.5L732.0 426.9L731.5 427.1L731.0 427.6L730.5 428.2L730.0 428.5L729.5 429.6L729.0 430.3L728.5 431.1L728.0 432.6L727.5 433.8L727.0 433.8L726.5 424.9L723.0 425.1L722.5 425.1L722.0 425.2L721.5 425.3L721.0 425.3L720.5 425.5L720.0 425.5L719.5 425.7L719.0 425.9L718.5 426.1L718.0 426.3L717.5 426.5L717.0 426.8L716.5 427.2L716.0 427.7L715.5 428.1L715.0 428.7L714.5 429.5L714.0 430.4L713.5 431.4L713.0 432.8L712.5 433.8L712.0 436.4L711.5 432.4L711.0 424.9L707.0 425.1L706.5 425.1L706.0 425.2L705.5 425.2L705.0 425.3L704.5 425.4L704.0 425.5L703.5 425.6L703.0 425.7L702.5 425.9L702.0 426.2L701.5 426.3L701.0 426.8L700.5 427.1L700.0 427.4L699.5 428.1L699.0 428.6L698.5 429.4L698.0 430.0L697.5 431.3L697.0 431.8L696.5 433.0L696.0 428.5L695.5 424.9L692.0 425.1L691.5 425.1L691.0 425.2L690.5 425.3L690.0 425.4L689.5 425.5L689.0 425.6L688.5 425.8L688.0 426.0L687.5 426.2L687.0 426.5L686.5 426.6L686.0 426.9L685.5 427.5L685.0 427.8L684.5 428.6L684.0 429.2L683.5 430.1L683.0 431.2L682.5 431.9L682.0 433.5L681.5 434.5L681.0 436.3L680.5 427.3L680.0 424.8L679.5 426.3L679.0 426.9L678.5 427.1L678.0 425.8L677.5 426.4L677.0 427.1L676.5 426.3L676.0 426.9L675.5 426.0L675.0 426.5L674.5 425.7L674.0 427.2L673.5 425.8L673.0 425.9L672.5 426.1L672.0 427.1L671.5 427.1L671.0 426.1L670.5 427.1L670.0 427.0L669.5 426.8L669.0 426.8L668.5 426.2L668.0 427.1L667.5 426.8L667.0 427.1L666.5 425.7L666.0 426.5L665.5 426.9L665.0 427.0L664.5 424.8L645.5 425.1L645.0 425.1L644.5 425.2L644.0 425.3L643.5 425.4L643.0 425.4L642.5 425.6L642.0 425.7L641.5 425.9L641.0 426.1L640.5 426.4L640.0 426.6L639.5 426.9L639.0 427.3L638.5 427.9L638.0 428.3L637.5 428.8L637.0 429.8L636.5 430.8L636.0 431.3L635.5 433.0L635.0 434.0L634.5 429.7L634.0 425.0L632.5 425.0L632.0 425.1L631.5 425.2L631.0 425.2L630.5 425.3L630.0 425.4L629.5 425.5L629.0 425.6L628.5 425.8L628.0 425.9L627.5 426.1L627.0 426.4L626.5 426.7L626.0 427.1L625.5 427.4L625.0 427.8L624.5 428.4L624.0 429.3L623.5 429.9L623.0 431.1L622.5 432.2L622.0 433.7L621.5 435.4L621.0 437.3L620.5 438.7L620.0 441.9L619.5 445.1L619.0 430.0L618.5 424.9L614.5 425.1L614.0 425.1L613.5 425.2L613.0 425.3L612.5 425.4L612.0 425.5L611.5 425.6L611.0 425.7L610.5 425.9L610.0 426.0L609.5 426.2L609.0 426.5L608.5 426.9L608.0 427.2L607.5 427.6L607.0 428.1L606.5 428.6L606.0 429.3L605.5 430.1L605.0 431.4L604.5 432.5L604.0 434.1L603.5 425.1L603.0 424.9L600.5 425.0L600.0 425.1L599.5 425.2L599.0 425.2L598.5 425.3L598.0 425.4L597.5 425.5L597.0 425.6L596.5 425.7L596.0 426.0L595.5 426.1L595.0 426.3L594.5 426.7L594.0 427.1L593.5 427.3L593.0 428.0L592.5 428.5L592.0 428.9L591.5 430.1L591.0 431.0L590.5 432.2L590.0 432.8L589.5 435.0L589.0 436.6L588.5 435.6L588.0 424.9L584.0 425.1L583.5 425.1L583.0 425.2L582.5 425.3L582.0 425.3L581.5 425.4L581.0 425.6L580.5 425.7L580.0 425.8L579.5 426.1L579.0 426.3L578.5 426.5L578.0 426.9L577.5 427.4L577.0 427.7L576.5 428.1L576.0 428.8L575.5 429.5L575.0 430.4L574.5 431.2L574.0 432.4L573.5 433.6L573.0 430.8L572.5 424.9L570.0 425.1L569.5 425.1L569.0 425.2L568.5 425.2L568.0 425.3L567.5 425.4L567.0 425.5L566.5 425.6L566.0 425.8L565.5 425.9L565.0 426.2L564.5 426.5L564.0 426.8L563.5 427.1L563.0 427.5L562.5 428.0L562.0 428.6L561.5 429.1L561.0 430.2L560.5 430.9L560.0 431.9L559.5 433.9L559.0 434.9L558.5 437.3L558.0 438.6L557.5 431.0L557.0 424.8L556.5 425.6L556.0 425.7L555.5 426.4L555.0 426.4L554.5 426.1L554.0 426.7L553.5 426.6L553.0 425.7L552.5 425.9L552.0 426.1L551.5 427.1L551.0 427.1L550.5 426.7L550.0 427.1L549.5 427.0L549.0 425.9L548.5 427.0L548.0 425.8L547.5 425.8L547.0 425.9L546.5 427.1L546.0 425.9L545.5 426.5L545.0 426.0L544.5 425.8L544.0 426.6L543.5 426.3L543.0 427.1L542.5 427.1L542.0 426.8L541.5 424.8L522.5 425.1L522.0 425.1L521.5 425.2L521.0 425.3L520.5 425.4L520.0 425.5L519.5 425.6L519.0 425.7L518.5 426.0L518.0 426.1L517.5 426.3L517.0 426.6L516.5 427.0L516.0 427.4L515.5 427.9L515.0 428.2L514.5 429.0L514.0 429.6L513.5 430.9L513.0 431.5L512.5 433.2L512.0 434.6L511.5 434.5L511.0 424.9L508.0 425.1L507.5 425.1L507.0 425.2L506.5 425.2L506.0 425.3L505.5 425.5L505.0 425.6L504.5 425.7L504.0 425.9L503.5 426.0L503.0 426.2L502.5 426.5L502.0 426.9L501.5 427.2L501.0 427.6L500.5 428.4L500.0 429.0L499.5 429.3L499.0 430.5L498.5 431.8L498.0 432.2L497.5 433.7L497.0 435.3L496.5 437.8L496.0 434.3L495.5 424.9L491.5 425.1L491.0 425.1L490.5 425.2L490.0 425.2L489.5 425.3L489.0 425.4L488.5 425.5L488.0 425.7L487.5 425.8L487.0 425.9L486.5 426.2L486.0 426.4L485.5 426.8L485.0 427.1L484.5 427.4L484.0 427.9L483.5 428.4L483.0 429.2L482.5 430.1L482.0 430.9L481.5 432.0L481.0 433.0L480.5 428.8L480.0 424.9L477.5 425.1L477.0 425.1L476.5 425.2L476.0 425.2L475.5 425.3L475.0 425.4L474.5 425.5L474.0 425.7L473.5 425.8L473.0 426.0L472.5 426.2L472.0 426.5L471.5 426.9L471.0 427.1L470.5 427.6L470.0 428.0L469.5 428.6L469.0 429.4L468.5 430.1L468.0 431.6L467.5 432.7L467.0 434.1L466.5 436.0L466.0 437.8L465.5 439.1L465.0 428.2L464.5 424.9L461.0 425.1L460.5 425.1L460.0 425.2L459.5 425.3L459.0 425.3L458.5 425.5L458.0 425.6L457.5 425.7L457.0 425.9L456.5 426.1L456.0 426.3L455.5 426.6L455.0 427.0L454.5 427.4L454.0 427.6L453.5 428.5L453.0 429.1L452.5 429.7L452.0 430.6L451.5 431.9L451.0 432.7L450.5 433.9L450.0 435.9L449.5 424.9L447.0 425.1L446.5 425.1L446.0 425.1L445.5 425.2L445.0 425.3L444.5 425.3L444.0 425.4L443.5 425.6L443.0 425.7L442.5 425.9L442.0 426.1L441.5 426.4L441.0 426.6L440.5 426.9L440.0 427.3L439.5 427.8L439.0 428.3L438.5 428.8L438.0 429.9L437.5 430.9L437.0 431.4L436.5 433.1L436.0 434.8L435.5 435.8L435.0 438.7L434.5 436.5L434.0 424.8L399.5 425.1L399.0 425.2L398.5 425.2L398.0 425.3L397.5 425.4L397.0 425.5L396.5 425.7L396.0 425.8L395.5 426.0L395.0 426.2L394.5 426.5L394.0 426.6L393.5 427.1L393.0 427.4L392.5 427.9L392.0 428.6L391.5 429.1L391.0 430.2L390.5 430.8L390.0 432.2L389.5 433.8L389.0 434.8L388.5 436.6L388.0 425.6L387.5 424.9L385.0 425.1L384.5 425.1L384.0 425.2L383.5 425.3L383.0 425.3L382.5 425.4L382.0 425.5L381.5 425.7L381.0 425.8L380.5 426.0L380.0 426.2L379.5 426.5L379.0 426.7L378.5 427.0L378.0 427.7L377.5 428.1L377.0 428.6L376.5 429.5L376.0 430.0L375.5 431.1L375.0 432.7L374.5 433.3L374.0 435.7L373.5 437.7L373.0 436.4L372.5 424.9L368.5 425.1L368.0 425.1L367.5 425.2L367.0 425.3L366.5 425.3L366.0 425.4L365.5 425.5L365.0 425.7L364.5 425.9L364.0 426.1L363.5 426.3L363.0 426.6L362.5 427.0L362.0 427.3L361.5 427.8L361.0 428.2L360.5 428.7L360.0 429.3L359.5 430.5L359.0 431.3L358.5 432.5L358.0 434.2L357.5 431.3L357.0 424.9L354.0 425.1L353.5 425.1L353.0 425.2L352.5 425.3L352.0 425.4L351.5 425.5L351.0 425.6L350.5 425.7L350.0 425.9L349.5 426.1L349.0 426.4L348.5 426.6L348.0 427.0L347.5 427.4L347.0 427.8L346.5 428.3L346.0 428.8L345.5 429.8L345.0 430.4L344.5 431.6L344.0 432.6L343.5 434.3L343.0 436.4L342.5 437.8L342.0 430.8L341.5 424.9L338.5 425.1L338.0 425.1L337.5 425.2L337.0 425.2L336.5 425.3L336.0 425.4L335.5 425.5L335.0 425.6L334.5 425.8L334.0 426.0L333.5 426.2L333.0 426.3L332.5 426.7L332.0 426.9L331.5 427.5L331.0 428.0L330.5 428.5L330.0 429.1L329.5 430.0L329.0 431.0L328.5 432.3L328.0 433.7L327.5 434.5L327.0 436.2L326.5 427.5L326.0 424.9L323.5 425.1L323.0 425.1L322.5 425.2L322.0 425.2L321.5 425.3L321.0 425.4L320.5 425.5L320.0 425.7L319.5 425.8L319.0 426.0L318.5 426.2L318.0 426.4L317.5 426.7L317.0 427.1L316.5 427.5L316.0 428.0L315.5 428.7L315.0 429.2L314.5 429.8L314.0 431.2L313.5 432.6L313.0 433.2L312.5 434.7L312.0 437.3L311.5 438.4L311.0 424.8L276.0 425.1L275.5 425.1L275.0 425.2L274.5 425.3L274.0 425.4L273.5 425.5L273.0 425.6L272.5 425.7L272.0 425.9L271.5 426.0L271.0 426.2L270.5 426.5L270.0 426.9L269.5 427.3L269.0 427.9L268.5 428.3L268.0 428.8L267.5 429.9L267.0 430.6L266.5 431.8L266.0 432.9L265.5 434.4L265.0 429.3L264.5 424.9L261.5 425.1L261.0 425.1L260.5 425.2L260.0 425.3L259.5 425.3L259.0 425.5L258.5 425.6L258.0 425.7L257.5 425.9L257.0 426.0L256.5 426.3L256.0 426.7L255.5 426.9L255.0 427.4L254.5 427.9L254.0 428.3L253.5 429.1L253.0 429.7L252.5 430.4L252.0 431.9L251.5 433.3L251.0 434.5L250.5 435.8L250.0 438.0L249.5 428.4L249.0 424.9L244.5 425.1L244.0 425.2L243.5 425.2L243.0 425.3L242.5 425.4L242.0 425.4L241.5 425.6L241.0 425.7L240.5 425.9L240.0 426.1L239.5 426.4L239.0 426.6L238.5 427.0L238.0 427.4L237.5 427.9L237.0 428.2L236.5 428.8L236.0 429.8L235.5 430.8L235.0 431.5L234.5 433.0L234.0 425.1L230.5 425.1L230.0 425.2L229.5 425.2L229.0 425.3L228.5 425.4L228.0 425.5L227.5 425.6L227.0 425.8L226.5 425.9L226.0 426.1L225.5 426.3L225.0 426.6L224.5 426.9L224.0 427.4L223.5 428.0L223.0 428.5L222.5 429.1L222.0 429.8L221.5 430.7L221.0 432.0L220.5 433.1L220.0 435.0L219.5 436.9L219.0 436.4L218.5 424.9L214.5 425.1L214.0 425.1L213.5 425.2L213.0 425.3L212.5 425.3L212.0 425.4L211.5 425.5L211.0 425.7L210.5 425.9L210.0 426.1L209.5 426.2L209.0 426.6L208.5 426.9L208.0 427.2L207.5 427.6L207.0 428.2L206.5 428.7L206.0 429.4L205.5 430.7L205.0 431.8L204.5 433.0L204.0 433.6L203.5 431.1L203.0 424.9L200.5 425.1L200.0 425.1L199.5 425.2L199.0 425.2L198.5 425.3L198.0 425.4L197.5 425.5L197.0 425.6L196.5 425.8L196.0 426.0L195.5 426.1L195.0 426.5L194.5 426.8L194.0 427.1L193.5 427.6L193.0 428.1L192.5 428.7L192.0 429.4L191.5 430.1L191.0 431.3L190.5 432.6L190.0 433.3L189.5 435.2L189.0 437.2L188.5 439.5L188.0 431.0L187.5 424.8L156.0 424.8Z" fill="#ff78a8" stroke="#f4c6d6" stroke-opacity="0.45" stroke-width="0.5" />
<rect x="156" y="524.05" width="935" height="1.5" fill="#e99bbb"/>
<path d="M156.0 524.8L190.0 524.8L190.5 522.3L191.0 520.0L191.5 519.4L192.0 519.5L192.5 519.4L193.0 519.1L193.5 519.4L194.0 518.9L194.5 519.0L195.0 518.6L195.5 518.7L196.0 519.4L196.5 519.3L197.0 519.4L197.5 519.1L198.0 519.2L198.5 519.7L199.0 519.2L199.5 519.5L200.0 519.5L200.5 519.2L201.0 519.7L201.5 519.6L202.0 519.5L202.5 519.3L203.0 519.8L203.5 520.0L204.0 520.2L204.5 519.7L205.0 519.6L205.5 519.8L206.0 520.0L206.5 519.8L207.0 520.1L207.5 520.5L208.0 520.1L208.5 520.0L209.0 520.4L209.5 520.7L210.0 520.6L210.5 520.8L211.0 520.8L211.5 520.6L212.0 520.9L212.5 520.6L213.0 520.5L213.5 520.9L214.0 520.9L214.5 520.6L215.0 521.1L215.5 521.1L216.0 520.8L216.5 521.2L217.0 521.0L217.5 520.6L218.0 520.9L218.5 520.8L219.0 520.7L219.5 520.7L220.0 521.0L220.5 521.1L221.0 521.2L221.5 521.1L222.0 521.0L222.5 521.2L223.0 521.2L223.5 521.2L224.0 520.8L224.5 521.1L225.0 521.0L225.5 520.7L226.0 520.9L226.5 521.2L227.0 521.0L227.5 520.7L228.0 521.2L228.5 520.9L229.0 520.9L229.5 520.9L230.0 520.7L230.5 521.1L231.0 521.1L231.5 520.9L232.0 521.0L232.5 520.7L233.0 520.7L233.5 520.7L234.0 521.1L234.5 521.0L235.0 521.2L235.5 521.1L236.0 520.7L236.5 520.7L237.0 520.7L237.5 521.1L238.0 521.1L238.5 520.9L239.0 520.7L239.5 520.9L240.0 521.2L240.5 520.7L241.0 520.8L241.5 521.1L242.0 521.1L242.5 520.7L243.0 521.0L243.5 520.8L244.0 521.2L244.5 520.7L245.0 521.2L245.5 520.7L246.0 521.1L246.5 521.2L247.0 520.7L247.5 520.9L248.0 521.0L248.5 520.8L249.0 521.1L249.5 521.1L250.0 521.1L250.5 521.2L251.0 521.1L251.5 520.9L252.0 521.0L252.5 521.0L253.0 521.0L253.5 521.0L254.0 521.3L254.5 521.2L255.0 520.8L255.5 521.1L256.0 520.9L256.5 521.2L257.0 521.1L257.5 520.8L258.0 520.9L258.5 520.7L259.0 520.9L259.5 521.0L260.0 521.0L260.5 521.0L261.0 520.9L261.5 520.7L262.0 521.0L262.5 520.8L263.0 521.2L263.5 521.2L264.0 521.2L264.5 520.8L265.0 521.2L265.5 520.9L266.0 520.8L266.5 521.2L267.0 521.1L267.5 520.7L268.0 521.2L268.5 521.0L269.0 521.2L269.5 520.9L270.0 521.0L270.5 521.3L271.0 520.9L271.5 521.3L272.0 520.8L272.5 521.2L273.0 521.3L273.5 521.2L274.0 521.1L274.5 520.8L275.0 521.2L275.5 521.0L276.0 521.3L276.5 520.9L277.0 521.3L277.5 520.9L278.0 521.3L278.5 521.3L279.0 521.1L279.5 521.0L280.0 521.2L280.5 521.0L281.0 521.3L281.5 521.3L282.0 521.1L282.5 520.9L283.0 521.0L283.5 521.1L284.0 521.2L284.5 520.9L285.0 521.2L285.5 520.8L286.0 520.9L286.5 521.0L287.0 521.1L287.5 520.9L288.0 521.1L288.5 520.9L289.0 521.1L289.5 521.3L290.0 521.3L290.5 521.2L291.0 521.3L291.5 520.8L292.0 521.2L292.5 521.2L293.0 521.3L293.5 521.2L294.0 520.8L294.5 521.2L295.0 521.2L295.5 521.3L296.0 521.1L296.5 521.2L297.0 521.3L297.5 521.3L298.0 521.3L298.5 521.2L299.0 521.0L299.5 520.9L300.0 520.9L300.5 521.1L301.0 520.8L301.5 520.9L302.0 521.3L302.5 520.8L303.0 520.9L303.5 521.3L304.0 521.1L304.5 520.9L305.0 521.0L305.5 521.0L306.0 521.2L306.5 521.3L307.0 521.3L307.5 521.1L308.0 521.0L308.5 521.1L309.0 520.9L309.5 521.1L310.0 521.0L310.5 521.0L311.0 521.3L311.5 521.0L312.0 521.0L312.5 521.1L313.0 521.1L313.5 520.9L314.0 521.0L314.5 521.3L315.0 521.0L315.5 521.1L316.0 521.4L316.5 521.0L317.0 521.0L317.5 521.1L318.0 521.1L318.5 520.9L319.0 520.8L319.5 521.4L320.0 520.9L320.5 521.1L321.0 521.3L321.5 521.3L322.0 521.3L322.5 520.9L323.0 520.9L323.5 520.9L324.0 521.3L324.5 521.1L325.0 521.4L325.5 521.1L326.0 521.3L326.5 521.2L327.0 521.4L327.5 520.9L328.0 520.9L328.5 520.9L329.0 521.2L329.5 520.8L330.0 521.2L330.5 521.3L331.0 521.4L331.5 521.3L332.0 521.3L332.5 521.1L333.0 521.2L333.5 520.9L334.0 521.1L334.5 520.9L335.0 521.0L335.5 521.0L336.0 521.0L336.5 521.3L337.0 520.9L337.5 521.2L338.0 521.3L338.5 520.9L339.0 521.1L339.5 521.1L340.0 521.3L340.5 521.3L341.0 521.2L341.5 520.9L342.0 521.2L342.5 521.3L343.0 521.2L343.5 521.3L344.0 521.1L344.5 521.0L345.0 521.2L345.5 521.2L346.0 521.4L346.5 520.9L347.0 521.2L347.5 521.0L348.0 521.3L348.5 521.2L349.0 520.9L349.5 521.0L350.0 521.4L350.5 520.9L351.0 521.1L351.5 521.2L352.0 521.0L352.5 520.9L353.0 521.4L353.5 521.2L354.0 520.9L354.5 521.1L355.0 521.2L355.5 521.4L356.0 521.3L356.5 521.1L357.0 521.4L357.5 521.1L358.0 521.4L358.5 521.2L359.0 521.2L359.5 521.1L360.0 521.3L360.5 520.9L361.0 521.0L361.5 521.3L362.0 520.9L362.5 521.3L363.0 521.2L363.5 521.2L364.0 521.1L364.5 521.3L365.0 521.3L365.5 521.1L366.0 521.0L366.5 521.2L367.0 520.9L367.5 521.0L368.0 521.4L368.5 521.3L369.0 521.2L369.5 521.4L370.0 521.1L370.5 521.4L371.0 521.4L371.5 521.4L372.0 521.5L372.5 521.0L373.0 521.1L373.5 521.0L374.0 521.4L374.5 521.1L375.0 521.1L375.5 521.3L376.0 521.4L376.5 521.3L377.0 521.0L377.5 521.0L378.0 521.3L378.5 521.0L379.0 521.5L379.5 521.3L380.0 521.4L380.5 521.0L381.0 521.3L381.5 521.1L382.0 521.5L382.5 521.0L383.0 521.1L383.5 521.3L384.0 521.0L384.5 521.4L385.0 521.3L385.5 521.5L386.0 521.0L386.5 521.0L387.0 521.4L387.5 521.0L388.0 521.3L388.5 521.3L389.0 521.0L389.5 521.1L390.0 521.1L390.5 521.2L391.0 521.3L391.5 521.1L392.0 521.4L392.5 521.4L393.0 521.5L393.5 521.4L394.0 521.0L394.5 521.4L395.0 521.5L395.5 521.1L396.0 521.4L396.5 521.2L397.0 521.1L397.5 521.2L398.0 521.1L398.5 521.2L399.0 521.1L399.5 521.4L400.0 521.5L400.5 521.2L401.0 521.3L401.5 521.3L402.0 521.1L402.5 521.0L403.0 521.3L403.5 521.1L404.0 521.5L404.5 521.5L405.0 521.0L405.5 521.0L406.0 521.1L406.5 521.4L407.0 521.0L407.5 521.2L408.0 521.4L408.5 521.5L409.0 521.4L409.5 521.2L410.0 521.6L410.5 521.2L411.0 521.4L411.5 521.1L412.0 521.5L412.5 521.3L413.0 521.2L413.5 521.5L414.0 521.3L414.5 521.4L415.0 521.4L415.5 521.4L416.0 521.1L416.5 521.4L417.0 521.2L417.5 521.6L418.0 521.3L418.5 521.4L419.0 521.3L419.5 521.6L420.0 521.2L420.5 521.5L421.0 521.4L421.5 521.5L422.0 521.3L422.5 521.5L423.0 521.2L423.5 521.5L424.0 521.1L424.5 521.3L425.0 521.1L425.5 521.1L426.0 521.1L426.5 521.2L427.0 521.4L427.5 521.1L428.0 521.5L428.5 521.3L429.0 521.5L429.5 521.2L430.0 521.6L430.5 521.2L431.0 521.1L431.5 521.3L432.0 521.3L432.5 521.4L433.0 521.4L433.5 521.4L434.0 521.6L434.5 521.3L435.0 521.2L435.5 521.4L436.0 521.4L436.5 521.5L437.0 521.6L437.5 521.3L438.0 521.3L438.5 521.2L439.0 521.3L439.5 521.3L440.0 521.1L440.5 521.2L441.0 521.2L441.5 521.5L442.0 521.4L442.5 521.1L443.0 521.2L443.5 521.6L444.0 521.2L444.5 521.1L445.0 521.2L445.5 521.4L446.0 521.5L446.5 521.4L447.0 521.6L447.5 521.5L448.0 521.3L448.5 521.5L449.0 521.6L449.5 521.3L450.0 521.2L450.5 521.4L451.0 521.6L451.5 521.4L452.0 521.3L452.5 521.3L453.0 521.6L453.5 521.6L454.0 521.5L454.5 521.5L455.0 521.6L455.5 521.6L456.0 521.8L456.5 521.9L457.0 521.7L457.5 521.8L458.0 522.0L458.5 521.8L459.0 522.1L459.5 522.1L460.0 522.0L460.5 521.9L461.0 521.9L461.5 522.1L462.0 522.1L462.5 522.2L463.0 521.9L463.5 522.1L464.0 522.3L464.5 522.1L465.0 522.1L465.5 522.0L466.0 522.3L466.5 522.4L467.0 522.3L467.5 522.5L468.0 522.5L468.5 522.2L469.0 522.5L469.5 522.4L470.0 522.3L470.5 522.5L471.0 522.6L471.5 522.4L472.0 522.7L472.5 522.5L473.0 522.5L473.5 522.7L474.0 522.7L474.5 522.7L475.0 522.6L475.5 522.6L476.0 522.7L476.5 522.7L477.0 522.9L477.5 522.7L478.0 522.7L478.5 522.9L479.0 522.8L479.5 522.8L480.0 522.8L480.5 523.0L481.0 523.0L481.5 523.0L482.0 523.0L482.5 523.0L483.0 523.1L483.5 523.1L484.0 523.2L484.5 523.3L485.0 523.3L485.5 523.3L486.0 523.3L486.5 523.4L487.0 523.2L487.5 523.3L488.0 523.4L488.5 523.4L489.0 523.3L489.5 523.5L490.0 523.3L490.5 523.5L491.0 523.6L491.5 523.4L492.0 523.5L492.5 523.5L493.0 523.6L493.5 523.5L494.0 523.6L494.5 523.7L495.0 523.7L495.5 523.7L496.0 523.6L496.5 523.7L497.0 523.8L497.5 523.8L498.0 523.8L498.5 523.8L499.0 523.8L499.5 523.8L500.0 524.0L500.5 523.9L501.0 524.0L501.5 523.9L502.0 524.0L502.5 524.0L503.0 524.0L503.5 524.1L504.0 524.0L504.5 524.1L505.0 524.1L505.5 524.1L506.0 524.1L506.5 524.2L507.0 524.1L507.5 524.2L508.0 524.2L508.5 524.2L509.0 524.2L509.5 524.2L510.0 524.2L510.5 524.2L511.0 524.2L511.5 524.2L512.0 524.2L512.5 524.2L513.0 524.2L513.5 524.2L514.0 524.2L514.5 524.2L515.0 524.2L515.5 524.2L516.0 524.2L516.5 524.2L517.0 524.2L517.5 524.2L518.0 524.3L518.5 524.3L519.0 524.2L519.5 524.2L520.0 524.2L520.5 524.3L521.0 524.2L521.5 524.2L522.0 524.2L522.5 524.2L523.0 524.2L523.5 524.2L524.0 524.2L524.5 524.2L525.0 524.2L525.5 524.8L681.0 524.8L681.5 522.3L682.0 519.7L682.5 518.8L683.0 519.1L683.5 519.3L684.0 518.7L684.5 518.8L685.0 519.0L685.5 518.8L686.0 518.8L686.5 519.2L687.0 518.7L687.5 519.0L688.0 519.5L688.5 519.4L689.0 518.8L689.5 519.5L690.0 519.2L690.5 519.3L691.0 519.1L691.5 519.5L692.0 519.7L692.5 519.6L693.0 519.9L693.5 519.7L694.0 519.8L694.5 520.1L695.0 519.8L695.5 519.9L696.0 520.1L696.5 519.6L697.0 520.2L697.5 520.1L698.0 520.3L698.5 519.9L699.0 520.2L699.5 520.4L700.0 520.4L700.5 520.1L701.0 520.4L701.5 520.4L702.0 520.3L702.5 520.3L703.0 520.7L703.5 520.7L704.0 521.0L704.5 520.9L705.0 520.9L705.5 520.9L706.0 520.8L706.5 520.6L707.0 521.2L707.5 520.7L708.0 521.1L708.5 520.8L709.0 521.2L709.5 520.8L710.0 521.1L710.5 521.1L711.0 521.0L711.5 520.7L712.0 521.1L712.5 520.8L713.0 520.8L713.5 520.7L714.0 521.1L714.5 520.9L715.0 521.0L715.5 520.9L716.0 521.1L716.5 520.9L717.0 520.9L717.5 520.9L718.0 520.9L718.5 521.2L719.0 520.9L719.5 520.8L720.0 521.0L720.5 520.7L721.0 520.8L721.5 521.2L722.0 520.8L722.5 521.0L723.0 520.9L723.5 520.7L724.0 520.8L724.5 521.0L725.0 521.0L725.5 520.9L726.0 521.1L726.5 521.0L727.0 520.7L727.5 520.7L728.0 520.9L728.5 520.9L729.0 520.9L729.5 521.0L730.0 521.1L730.5 520.9L731.0 521.2L731.5 520.7L732.0 521.2L732.5 521.2L733.0 520.7L733.5 520.9L734.0 520.7L734.5 520.9L735.0 520.8L735.5 520.9L736.0 520.9L736.5 520.8L737.0 521.2L737.5 520.8L738.0 520.9L738.5 520.8L739.0 520.9L739.5 521.1L740.0 521.1L740.5 520.9L741.0 521.2L741.5 521.2L742.0 520.8L742.5 520.7L743.0 521.3L743.5 520.9L744.0 520.7L744.5 521.0L745.0 520.9L745.5 521.2L746.0 521.3L746.5 521.2L747.0 521.2L747.5 521.2L748.0 520.9L748.5 520.8L749.0 521.3L749.5 520.9L750.0 520.9L750.5 520.9L751.0 521.0L751.5 521.1L752.0 520.9L752.5 521.3L753.0 520.8L753.5 521.1L754.0 521.2L754.5 521.0L755.0 521.1L755.5 521.0L756.0 521.2L756.5 521.1L757.0 520.9L757.5 521.1L758.0 520.7L758.5 521.0L759.0 521.3L759.5 520.9L760.0 521.1L760.5 520.7L761.0 521.0L761.5 521.1L762.0 521.1L762.5 521.0L763.0 520.8L763.5 521.3L764.0 521.1L764.5 520.8L765.0 521.3L765.5 520.8L766.0 521.0L766.5 520.8L767.0 520.9L767.5 521.1L768.0 521.0L768.5 521.2L769.0 520.8L769.5 521.0L770.0 521.1L770.5 521.2L771.0 520.9L771.5 521.3L772.0 520.9L772.5 521.0L773.0 520.8L773.5 521.1L774.0 521.2L774.5 521.2L775.0 521.1L775.5 521.1L776.0 521.2L776.5 520.8L777.0 521.3L777.5 520.9L778.0 521.0L778.5 521.0L779.0 521.3L779.5 520.8L780.0 521.0L780.5 520.9L781.0 520.8L781.5 520.9L782.0 521.2L782.5 521.2L783.0 521.3L783.5 521.0L784.0 521.1L784.5 520.8L785.0 521.0L785.5 521.3L786.0 521.2L786.5 521.0L787.0 521.0L787.5 521.1L788.0 520.8L788.5 521.2L789.0 521.2L789.5 520.8L790.0 520.9L790.5 520.9L791.0 521.0L791.5 521.3L792.0 520.9L792.5 521.0L793.0 521.0L793.5 521.3L794.0 521.2L794.5 521.1L795.0 521.2L795.5 521.0L796.0 521.0L796.5 521.4L797.0 521.2L797.5 520.9L798.0 521.3L798.5 521.3L799.0 520.9L799.5 521.1L800.0 520.9L800.5 521.0L801.0 521.3L801.5 521.0L802.0 521.3L802.5 521.2L803.0 521.3L803.5 520.9L804.0 521.3L804.5 521.2L805.0 521.3L805.5 521.4L806.0 521.0L806.5 521.1L807.0 521.2L807.5 521.2L808.0 520.8L808.5 521.3L809.0 520.9L809.5 521.0L810.0 520.8L810.5 520.9L811.0 521.3L811.5 520.9L812.0 521.3L812.5 520.9L813.0 521.1L813.5 521.3L814.0 521.0L814.5 521.4L815.0 521.1L815.5 521.3L816.0 521.1L816.5 520.9L817.0 521.3L817.5 521.0L818.0 521.0L818.5 521.0L819.0 520.9L819.5 521.1L820.0 520.9L820.5 520.9L821.0 521.3L821.5 521.2L822.0 521.2L822.5 521.4L823.0 521.2L823.5 521.4L824.0 521.0L824.5 521.2L825.0 521.2L825.5 521.4L826.0 520.9L826.5 521.1L827.0 521.1L827.5 520.9L828.0 521.3L828.5 521.3L829.0 521.4L829.5 521.0L830.0 521.4L830.5 521.1L831.0 521.0L831.5 520.9L832.0 521.4L832.5 521.2L833.0 521.3L833.5 521.2L834.0 521.1L834.5 521.4L835.0 521.0L835.5 521.0L836.0 521.2L836.5 521.0L837.0 521.2L837.5 521.0L838.0 521.3L838.5 521.2L839.0 521.0L839.5 521.0L840.0 521.4L840.5 520.9L841.0 521.3L841.5 521.1L842.0 521.2L842.5 521.2L843.0 521.4L843.5 520.9L844.0 520.9L844.5 521.0L845.0 521.0L845.5 521.1L846.0 521.1L846.5 521.2L847.0 521.1L847.5 521.2L848.0 520.9L848.5 521.3L849.0 521.4L849.5 520.9L850.0 521.3L850.5 521.2L851.0 521.4L851.5 521.3L852.0 521.3L852.5 521.4L853.0 521.0L853.5 521.2L854.0 521.4L854.5 521.2L855.0 521.1L855.5 521.3L856.0 521.4L856.5 521.3L857.0 521.5L857.5 521.0L858.0 521.2L858.5 521.3L859.0 521.3L859.5 521.4L860.0 521.0L860.5 521.5L861.0 521.2L861.5 521.4L862.0 521.0L862.5 521.4L863.0 521.3L863.5 521.2L864.0 521.0L864.5 521.1L865.0 521.1L865.5 521.1L866.0 521.0L866.5 521.0L867.0 521.1L867.5 521.2L868.0 521.2L868.5 521.1L869.0 521.2L869.5 521.3L870.0 521.1L870.5 521.3L871.0 521.3L871.5 521.1L872.0 521.2L872.5 521.4L873.0 521.4L873.5 521.2L874.0 521.0L874.5 521.1L875.0 521.0L875.5 521.3L876.0 521.5L876.5 521.2L877.0 521.0L877.5 521.2L878.0 521.2L878.5 521.2L879.0 521.3L879.5 521.3L880.0 521.2L880.5 521.5L881.0 521.3L881.5 521.2L882.0 521.0L882.5 521.3L883.0 521.0L883.5 521.2L884.0 521.4L884.5 521.0L885.0 521.3L885.5 521.1L886.0 521.1L886.5 521.1L887.0 521.5L887.5 521.3L888.0 521.4L888.5 521.2L889.0 521.4L889.5 521.2L890.0 521.3L890.5 521.4L891.0 521.5L891.5 521.1L892.0 521.2L892.5 521.3L893.0 521.4L893.5 521.3L894.0 521.2L894.5 521.5L895.0 521.1L895.5 521.5L896.0 521.3L896.5 521.2L897.0 521.5L897.5 521.1L898.0 521.2L898.5 521.5L899.0 521.5L899.5 521.3L900.0 521.3L900.5 521.5L901.0 521.3L901.5 521.3L902.0 521.4L902.5 521.1L903.0 521.4L903.5 521.1L904.0 521.2L904.5 521.3L905.0 521.4L905.5 521.2L906.0 521.4L906.5 521.3L907.0 521.4L907.5 521.4L908.0 521.1L908.5 521.3L909.0 521.3L909.5 521.4L910.0 521.5L910.5 521.4L911.0 521.5L911.5 521.5L912.0 521.2L912.5 521.5L913.0 521.5L913.5 521.1L914.0 521.4L914.5 521.2L915.0 521.4L915.5 521.4L916.0 521.5L916.5 521.3L917.0 521.4L917.5 521.2L918.0 521.1L918.5 521.4L919.0 521.3L919.5 521.1L920.0 521.3L920.5 521.5L921.0 521.4L921.5 521.3L922.0 521.4L922.5 521.5L923.0 521.4L923.5 521.6L924.0 521.4L924.5 521.5L925.0 521.4L925.5 521.5L926.0 521.5L926.5 521.1L927.0 521.1L927.5 521.5L928.0 521.6L928.5 521.3L929.0 521.4L929.5 521.3L930.0 521.2L930.5 521.3L931.0 521.6L931.5 521.2L932.0 521.6L932.5 521.5L933.0 521.5L933.5 521.6L934.0 521.3L934.5 521.2L935.0 521.3L935.5 521.4L936.0 521.5L936.5 521.3L937.0 521.6L937.5 521.3L938.0 521.7L938.5 521.7L939.0 521.7L939.5 521.5L940.0 521.5L940.5 521.5L941.0 521.8L941.5 521.5L942.0 521.5L942.5 521.6L943.0 521.7L943.5 522.0L944.0 521.8L944.5 521.6L945.0 521.7L945.5 521.8L946.0 522.0L946.5 521.7L947.0 521.9L947.5 522.2L948.0 522.0L948.5 522.1L949.0 521.9L949.5 522.2L950.0 522.1L950.5 521.9L951.0 522.2L951.5 522.3L952.0 522.2L952.5 522.2L953.0 522.4L953.5 522.2L954.0 522.2L954.5 522.4L955.0 522.4L955.5 522.5L956.0 522.5L956.5 522.4L957.0 522.5L957.5 522.5L958.0 522.6L958.5 522.3L959.0 522.6L959.5 522.3L960.0 522.7L960.5 522.6L961.0 522.6L961.5 522.5L962.0 522.6L962.5 522.6L963.0 522.8L963.5 522.9L964.0 522.6L964.5 522.8L965.0 522.7L965.5 522.9L966.0 522.7L966.5 522.9L967.0 522.8L967.5 522.9L968.0 522.9L968.5 523.0L969.0 522.9L969.5 522.9L970.0 522.9L970.5 523.0L971.0 523.1L971.5 523.0L972.0 523.0L972.5 523.1L973.0 523.2L973.5 523.2L974.0 523.1L974.5 523.1L975.0 523.1L975.5 523.3L976.0 523.2L976.5 523.3L977.0 523.2L977.5 523.2L978.0 523.4L978.5 523.3L979.0 523.4L979.5 523.4L980.0 523.3L980.5 523.4L981.0 523.4L981.5 523.4L982.0 523.5L982.5 523.6L983.0 523.4L983.5 523.5L984.0 523.6L984.5 523.7L985.0 523.6L985.5 523.7L986.0 523.7L986.5 523.7L987.0 523.7L987.5 523.8L988.0 523.7L988.5 523.8L989.0 523.8L989.5 523.8L990.0 523.8L990.5 523.9L991.0 523.9L991.5 523.9L992.0 523.9L992.5 523.9L993.0 523.9L993.5 523.9L994.0 523.9L994.5 524.0L995.0 524.0L995.5 524.0L996.0 524.0L996.5 524.0L997.0 524.1L997.5 524.2L998.0 524.2L998.5 524.1L999.0 524.1L999.5 524.1L1000.0 524.2L1000.5 524.2L1001.0 524.2L1001.5 524.2L1002.0 524.2L1002.5 524.2L1003.0 524.2L1003.5 524.2L1004.0 524.2L1004.5 524.2L1005.0 524.2L1005.5 524.2L1006.0 524.2L1006.5 524.2L1007.0 524.3L1007.5 524.2L1008.0 524.2L1008.5 524.2L1009.0 524.2L1009.5 524.2L1010.0 524.2L1010.5 524.2L1011.0 524.2L1011.5 524.2L1012.0 524.2L1012.5 524.2L1013.0 524.2L1013.5 524.2L1014.0 524.2L1014.5 524.3L1015.0 524.2L1015.5 524.2L1016.0 524.2L1016.5 524.2L1017.0 524.2L1017.5 524.3L1018.0 524.2L1018.5 524.2L1019.0 524.3L1019.5 524.2L1020.0 524.2L1020.5 524.8L1091.0 524.8L1091.0 524.8L1020.5 524.8L1020.0 525.4L1019.5 525.4L1019.0 525.4L1018.5 525.4L1018.0 525.3L1017.5 525.4L1017.0 525.4L1016.5 525.4L1016.0 525.4L1015.5 525.3L1015.0 525.4L1014.5 525.4L1014.0 525.4L1013.5 525.4L1013.0 525.4L1012.5 525.4L1012.0 525.4L1011.5 525.3L1011.0 525.4L1010.5 525.4L1010.0 525.3L1009.5 525.4L1009.0 525.4L1008.5 525.4L1008.0 525.4L1007.5 525.4L1007.0 525.4L1006.5 525.3L1006.0 525.4L1005.5 525.4L1005.0 525.4L1004.5 525.4L1004.0 525.4L1003.5 525.3L1003.0 525.3L1002.5 525.4L1002.0 525.4L1001.5 525.4L1001.0 525.4L1000.5 525.4L1000.0 525.4L999.5 525.4L999.0 525.5L998.5 525.5L998.0 525.5L997.5 525.5L997.0 525.5L996.5 525.5L996.0 525.5L995.5 525.6L995.0 525.6L994.5 525.7L994.0 525.7L993.5 525.6L993.0 525.7L992.5 525.7L992.0 525.6L991.5 525.7L991.0 525.7L990.5 525.8L990.0 525.8L989.5 525.8L989.0 525.8L988.5 525.9L988.0 525.9L987.5 525.8L987.0 525.9L986.5 525.9L986.0 526.0L985.5 526.0L985.0 526.0L984.5 525.9L984.0 526.1L983.5 526.0L983.0 526.1L982.5 526.1L982.0 526.1L981.5 526.0L981.0 526.2L980.5 526.3L980.0 526.3L979.5 526.2L979.0 526.1L978.5 526.2L978.0 526.3L977.5 526.2L977.0 526.4L976.5 526.3L976.0 526.3L975.5 526.4L975.0 526.4L974.5 526.5L974.0 526.3L973.5 526.4L973.0 526.4L972.5 526.6L972.0 526.4L971.5 526.4L971.0 526.5L970.5 526.6L970.0 526.7L969.5 526.7L969.0 526.7L968.5 526.5L968.0 526.8L967.5 526.7L967.0 526.7L966.5 526.7L966.0 526.9L965.5 526.9L965.0 527.0L964.5 526.9L964.0 526.8L963.5 527.0L963.0 526.8L962.5 526.9L962.0 527.1L961.5 527.0L961.0 526.8L960.5 526.9L960.0 527.1L959.5 527.1L959.0 527.2L958.5 527.2L958.0 527.0L957.5 527.1L957.0 527.2L956.5 527.1L956.0 527.3L955.5 527.2L955.0 527.2L954.5 527.2L954.0 527.5L953.5 527.3L953.0 527.4L952.5 527.5L952.0 527.6L951.5 527.5L951.0 527.6L950.5 527.4L950.0 527.5L949.5 527.4L949.0 527.6L948.5 527.4L948.0 527.5L947.5 527.6L947.0 527.5L946.5 527.7L946.0 527.7L945.5 527.9L945.0 527.5L944.5 527.6L944.0 527.8L943.5 527.9L943.0 527.8L942.5 528.0L942.0 528.0L941.5 527.9L941.0 527.7L940.5 528.1L940.0 527.9L939.5 527.8L939.0 528.2L938.5 528.2L938.0 528.0L937.5 528.2L937.0 527.9L936.5 528.3L936.0 527.9L935.5 528.3L935.0 528.1L934.5 528.3L934.0 528.1L933.5 528.1L933.0 528.2L932.5 528.1L932.0 528.0L931.5 528.4L931.0 528.5L930.5 528.1L930.0 528.2L929.5 528.1L929.0 528.3L928.5 528.2L928.0 528.3L927.5 528.1L927.0 528.4L926.5 528.4L926.0 528.2L925.5 528.4L925.0 528.1L924.5 528.0L924.0 528.3L923.5 528.3L923.0 528.3L922.5 528.4L922.0 528.0L921.5 528.2L921.0 528.3L920.5 528.4L920.0 528.3L919.5 528.1L919.0 528.1L918.5 528.1L918.0 528.3L917.5 528.1L917.0 528.1L916.5 528.1L916.0 528.5L915.5 528.5L915.0 528.4L914.5 528.1L914.0 528.5L913.5 528.1L913.0 528.2L912.5 528.4L912.0 528.2L911.5 528.0L911.0 528.2L910.5 528.1L910.0 528.5L909.5 528.1L909.0 528.2L908.5 528.1L908.0 528.2L907.5 528.1L907.0 528.1L906.5 528.4L906.0 528.5L905.5 528.1L905.0 528.2L904.5 528.5L904.0 528.5L903.5 528.2L903.0 528.5L902.5 528.5L902.0 528.1L901.5 528.4L901.0 528.5L900.5 528.5L900.0 528.2L899.5 528.2L899.0 528.5L898.5 528.2L898.0 528.2L897.5 528.2L897.0 528.0L896.5 528.5L896.0 528.5L895.5 528.1L895.0 528.1L894.5 528.1L894.0 528.3L893.5 528.6L893.0 528.4L892.5 528.3L892.0 528.2L891.5 528.4L891.0 528.2L890.5 528.4L890.0 528.5L889.5 528.1L889.0 528.6L888.5 528.4L888.0 528.2L887.5 528.3L887.0 528.2L886.5 528.3L886.0 528.6L885.5 528.4L885.0 528.1L884.5 528.5L884.0 528.2L883.5 528.5L883.0 528.3L882.5 528.4L882.0 528.3L881.5 528.5L881.0 528.4L880.5 528.3L880.0 528.4L879.5 528.6L879.0 528.4L878.5 528.3L878.0 528.4L877.5 528.6L877.0 528.5L876.5 528.4L876.0 528.1L875.5 528.6L875.0 528.2L874.5 528.5L874.0 528.3L873.5 528.1L873.0 528.4L872.5 528.3L872.0 528.3L871.5 528.6L871.0 528.3L870.5 528.4L870.0 528.3L869.5 528.3L869.0 528.3L868.5 528.6L868.0 528.3L867.5 528.6L867.0 528.4L866.5 528.1L866.0 528.2L865.5 528.5L865.0 528.4L864.5 528.5L864.0 528.4L863.5 528.6L863.0 528.5L862.5 528.3L862.0 528.5L861.5 528.2L861.0 528.5L860.5 528.3L860.0 528.4L859.5 528.1L859.0 528.5L858.5 528.7L858.0 528.4L857.5 528.2L857.0 528.3L856.5 528.4L856.0 528.4L855.5 528.3L855.0 528.4L854.5 528.4L854.0 528.5L853.5 528.5L853.0 528.5L852.5 528.4L852.0 528.3L851.5 528.4L851.0 528.2L850.5 528.2L850.0 528.4L849.5 528.4L849.0 528.5L848.5 528.5L848.0 528.3L847.5 528.4L847.0 528.3L846.5 528.6L846.0 528.3L845.5 528.3L845.0 528.2L844.5 528.6L844.0 528.5L843.5 528.6L843.0 528.2L842.5 528.4L842.0 528.2L841.5 528.3L841.0 528.4L840.5 528.7L840.0 528.4L839.5 528.6L839.0 528.7L838.5 528.7L838.0 528.3L837.5 528.3L837.0 528.7L836.5 528.4L836.0 528.4L835.5 528.7L835.0 528.2L834.5 528.5L834.0 528.6L833.5 528.2L833.0 528.2L832.5 528.4L832.0 528.2L831.5 528.6L831.0 528.2L830.5 528.5L830.0 528.5L829.5 528.3L829.0 528.2L828.5 528.6L828.0 528.2L827.5 528.3L827.0 528.2L826.5 528.5L826.0 528.5L825.5 528.7L825.0 528.6L824.5 528.6L824.0 528.7L823.5 528.6L823.0 528.5L822.5 528.5L822.0 528.5L821.5 528.3L821.0 528.7L820.5 528.3L820.0 528.5L819.5 528.2L819.0 528.7L818.5 528.4L818.0 528.2L817.5 528.4L817.0 528.2L816.5 528.5L816.0 528.6L815.5 528.3L815.0 528.5L814.5 528.2L814.0 528.3L813.5 528.6L813.0 528.3L812.5 528.3L812.0 528.4L811.5 528.5L811.0 528.2L810.5 528.4L810.0 528.2L809.5 528.4L809.0 528.2L808.5 528.4L808.0 528.7L807.5 528.8L807.0 528.3L806.5 528.4L806.0 528.3L805.5 528.7L805.0 528.8L804.5 528.7L804.0 528.5L803.5 528.4L803.0 528.4L802.5 528.5L802.0 528.7L801.5 528.5L801.0 528.3L800.5 528.3L800.0 528.5L799.5 528.4L799.0 528.6L798.5 528.8L798.0 528.5L797.5 528.7L797.0 528.8L796.5 528.8L796.0 528.3L795.5 528.2L795.0 528.3L794.5 528.3L794.0 528.3L793.5 528.4L793.0 528.7L792.5 528.4L792.0 528.8L791.5 528.3L791.0 528.8L790.5 528.6L790.0 528.3L789.5 528.8L789.0 528.4L788.5 528.3L788.0 528.8L787.5 528.3L787.0 528.5L786.5 528.8L786.0 528.6L785.5 528.8L785.0 528.5L784.5 528.3L784.0 528.8L783.5 528.8L783.0 528.3L782.5 528.4L782.0 528.3L781.5 528.8L781.0 528.7L780.5 528.5L780.0 528.4L779.5 528.5L779.0 528.8L778.5 528.3L778.0 528.5L777.5 528.4L777.0 528.6L776.5 528.5L776.0 528.3L775.5 528.6L775.0 528.6L774.5 528.7L774.0 528.4L773.5 528.6L773.0 528.6L772.5 528.8L772.0 528.4L771.5 528.7L771.0 528.5L770.5 528.7L770.0 528.4L769.5 528.7L769.0 528.4L768.5 528.7L768.0 528.7L767.5 528.3L767.0 528.8L766.5 528.8L766.0 528.4L765.5 528.8L765.0 528.8L764.5 528.8L764.0 528.6L763.5 528.4L763.0 528.5L762.5 528.8L762.0 528.7L761.5 528.8L761.0 528.5L760.5 528.8L760.0 528.7L759.5 528.8L759.0 528.9L758.5 528.5L758.0 528.8L757.5 528.8L757.0 528.5L756.5 528.7L756.0 528.8L755.5 528.7L755.0 528.6L754.5 528.3L754.0 528.8L753.5 528.7L753.0 528.4L752.5 528.7L752.0 528.3L751.5 528.9L751.0 528.9L750.5 528.7L750.0 528.4L749.5 528.8L749.0 528.8L748.5 528.4L748.0 528.5L747.5 528.3L747.0 528.8L746.5 528.9L746.0 528.7L745.5 528.3L745.0 528.5L744.5 528.4L744.0 528.6L743.5 528.9L743.0 528.6L742.5 528.6L742.0 528.7L741.5 528.4L741.0 528.7L740.5 528.9L740.0 528.6L739.5 528.6L739.0 528.5L738.5 528.8L738.0 528.6L737.5 528.9L737.0 528.4L736.5 528.4L736.0 528.6L735.5 528.5L735.0 528.7L734.5 528.7L734.0 528.7L733.5 528.8L733.0 528.7L732.5 528.5L732.0 528.5L731.5 528.7L731.0 528.8L730.5 528.8L730.0 528.7L729.5 528.5L729.0 528.8L728.5 528.9L728.0 528.5L727.5 528.6L727.0 528.5L726.5 528.7L726.0 528.6L725.5 528.8L725.0 528.6L724.5 528.9L724.0 528.7L723.5 528.4L723.0 528.7L722.5 529.0L722.0 528.9L721.5 528.7L721.0 528.8L720.5 528.4L720.0 528.6L719.5 528.9L719.0 528.7L718.5 528.9L718.0 528.9L717.5 528.7L717.0 528.5L716.5 528.4L716.0 528.5L715.5 528.5L715.0 528.9L714.5 528.8L714.0 528.8L713.5 528.9L713.0 528.9L712.5 528.9L712.0 528.9L711.5 528.9L711.0 528.5L710.5 528.9L710.0 528.5L709.5 528.5L709.0 529.0L708.5 528.4L708.0 528.9L707.5 528.9L707.0 528.9L706.5 528.9L706.0 528.6L705.5 528.8L705.0 528.8L704.5 528.7L704.0 529.0L703.5 528.8L703.0 528.8L702.5 528.9L702.0 529.0L701.5 528.9L701.0 529.1L700.5 529.5L700.0 529.4L699.5 529.7L699.0 529.5L698.5 529.6L698.0 529.7L697.5 529.4L697.0 529.8L696.5 529.7L696.0 529.9L695.5 529.6L695.0 530.0L694.5 529.8L694.0 529.9L693.5 529.6L693.0 530.4L692.5 530.3L692.0 530.3L691.5 530.6L691.0 530.3L690.5 530.4L690.0 530.5L689.5 530.5L689.0 530.5L688.5 530.7L688.0 530.6L687.5 531.0L687.0 530.5L686.5 530.8L686.0 531.0L685.5 530.6L685.0 530.6L684.5 530.4L684.0 530.8L683.5 530.6L683.0 530.8L682.5 530.6L682.0 529.8L681.5 527.3L681.0 524.8L525.5 524.8L525.0 525.4L524.5 525.4L524.0 525.4L523.5 525.4L523.0 525.4L522.5 525.4L522.0 525.4L521.5 525.4L521.0 525.3L520.5 525.4L520.0 525.4L519.5 525.4L519.0 525.4L518.5 525.4L518.0 525.4L517.5 525.4L517.0 525.4L516.5 525.4L516.0 525.4L515.5 525.4L515.0 525.4L514.5 525.4L514.0 525.4L513.5 525.4L513.0 525.4L512.5 525.4L512.0 525.4L511.5 525.4L511.0 525.4L510.5 525.4L510.0 525.4L509.5 525.4L509.0 525.4L508.5 525.4L508.0 525.4L507.5 525.4L507.0 525.4L506.5 525.4L506.0 525.4L505.5 525.5L505.0 525.5L504.5 525.5L504.0 525.5L503.5 525.5L503.0 525.6L502.5 525.7L502.0 525.6L501.5 525.7L501.0 525.7L500.5 525.8L500.0 525.7L499.5 525.7L499.0 525.7L498.5 525.7L498.0 525.8L497.5 525.9L497.0 525.8L496.5 525.9L496.0 525.9L495.5 525.9L495.0 526.0L494.5 525.9L494.0 526.0L493.5 526.0L493.0 526.0L492.5 526.0L492.0 526.1L491.5 526.2L491.0 526.0L490.5 526.1L490.0 526.3L489.5 526.3L489.0 526.3L488.5 526.3L488.0 526.3L487.5 526.3L487.0 526.3L486.5 526.2L486.0 526.3L485.5 526.5L485.0 526.3L484.5 526.5L484.0 526.5L483.5 526.4L483.0 526.6L482.5 526.6L482.0 526.7L481.5 526.7L481.0 526.7L480.5 526.7L480.0 526.6L479.5 526.6L479.0 526.8L478.5 526.7L478.0 526.6L477.5 526.7L477.0 526.9L476.5 526.8L476.0 526.8L475.5 526.8L475.0 527.0L474.5 527.0L474.0 526.8L473.5 526.9L473.0 527.0L472.5 527.0L472.0 527.2L471.5 527.2L471.0 527.3L470.5 527.1L470.0 527.0L469.5 527.2L469.0 527.3L468.5 527.1L468.0 527.3L467.5 527.4L467.0 527.2L466.5 527.4L466.0 527.5L465.5 527.5L465.0 527.4L464.5 527.4L464.0 527.5L463.5 527.4L463.0 527.6L462.5 527.6L462.0 527.4L461.5 527.8L461.0 527.6L460.5 527.5L460.0 527.7L459.5 527.7L459.0 527.7L458.5 527.6L458.0 527.7L457.5 528.0L457.0 527.8L456.5 527.7L456.0 527.7L455.5 528.0L455.0 528.2L454.5 527.9L454.0 527.8L453.5 527.9L453.0 528.2L452.5 528.1L452.0 528.0L451.5 528.1L451.0 528.4L450.5 528.4L450.0 528.3L449.5 528.2L449.0 528.3L448.5 528.4L448.0 528.4L447.5 528.5L447.0 528.1L446.5 528.1L446.0 528.1L445.5 528.5L445.0 528.1L444.5 528.1L444.0 528.1L443.5 528.2L443.0 528.5L442.5 528.1L442.0 528.5L441.5 528.5L441.0 528.4L440.5 528.5L440.0 528.1L439.5 528.2L439.0 528.0L438.5 528.4L438.0 528.0L437.5 528.0L437.0 528.2L436.5 528.2L436.0 528.1L435.5 528.1L435.0 528.4L434.5 528.1L434.0 528.3L433.5 528.2L433.0 528.4L432.5 528.3L432.0 528.2L431.5 528.3L431.0 528.1L430.5 528.0L430.0 528.3L429.5 528.5L429.0 528.1L428.5 528.2L428.0 528.2L427.5 528.1L427.0 528.5L426.5 528.1L426.0 528.1L425.5 528.3L425.0 528.2L424.5 528.0L424.0 528.5L423.5 528.1L423.0 528.5L422.5 528.3L422.0 528.5L421.5 528.2L421.0 528.3L420.5 528.4L420.0 528.5L419.5 528.3L419.0 528.1L418.5 528.5L418.0 528.5L417.5 528.5L417.0 528.1L416.5 528.1L416.0 528.6L415.5 528.3L415.0 528.3L414.5 528.5L414.0 528.2L413.5 528.4L413.0 528.1L412.5 528.3L412.0 528.1L411.5 528.3L411.0 528.1L410.5 528.1L410.0 528.2L409.5 528.2L409.0 528.4L408.5 528.2L408.0 528.2L407.5 528.4L407.0 528.1L406.5 528.5L406.0 528.3L405.5 528.3L405.0 528.4L404.5 528.2L404.0 528.2L403.5 528.5L403.0 528.5L402.5 528.1L402.0 528.4L401.5 528.2L401.0 528.6L400.5 528.2L400.0 528.5L399.5 528.2L399.0 528.2L398.5 528.3L398.0 528.2L397.5 528.1L397.0 528.5L396.5 528.4L396.0 528.3L395.5 528.3L395.0 528.3L394.5 528.1L394.0 528.6L393.5 528.6L393.0 528.4L392.5 528.1L392.0 528.5L391.5 528.1L391.0 528.3L390.5 528.3L390.0 528.5L389.5 528.5L389.0 528.2L388.5 528.4L388.0 528.2L387.5 528.6L387.0 528.3L386.5 528.1L386.0 528.4L385.5 528.5L385.0 528.2L384.5 528.5L384.0 528.4L383.5 528.2L383.0 528.6L382.5 528.2L382.0 528.1L381.5 528.1L381.0 528.5L380.5 528.1L380.0 528.3L379.5 528.6L379.0 528.4L378.5 528.3L378.0 528.6L377.5 528.2L377.0 528.2L376.5 528.3L376.0 528.1L375.5 528.3L375.0 528.3L374.5 528.1L374.0 528.6L373.5 528.3L373.0 528.7L372.5 528.6L372.0 528.3L371.5 528.1L371.0 528.7L370.5 528.3L370.0 528.6L369.5 528.3L369.0 528.2L368.5 528.6L368.0 528.5L367.5 528.2L367.0 528.3L366.5 528.2L366.0 528.5L365.5 528.2L365.0 528.4L364.5 528.1L364.0 528.6L363.5 528.3L363.0 528.5L362.5 528.1L362.0 528.5L361.5 528.3L361.0 528.4L360.5 528.5L360.0 528.4L359.5 528.1L359.0 528.3L358.5 528.5L358.0 528.2L357.5 528.5L357.0 528.3L356.5 528.3L356.0 528.7L355.5 528.6L355.0 528.4L354.5 528.6L354.0 528.5L353.5 528.5L353.0 528.2L352.5 528.3L352.0 528.6L351.5 528.7L351.0 528.2L350.5 528.4L350.0 528.5L349.5 528.2L349.0 528.6L348.5 528.4L348.0 528.3L347.5 528.3L347.0 528.5L346.5 528.2L346.0 528.3L345.5 528.3L345.0 528.5L344.5 528.4L344.0 528.7L343.5 528.3L343.0 528.2L342.5 528.2L342.0 528.2L341.5 528.7L341.0 528.3L340.5 528.7L340.0 528.3L339.5 528.4L339.0 528.3L338.5 528.3L338.0 528.6L337.5 528.4L337.0 528.2L336.5 528.2L336.0 528.5L335.5 528.4L335.0 528.2L334.5 528.5L334.0 528.7L333.5 528.6L333.0 528.7L332.5 528.3L332.0 528.3L331.5 528.7L331.0 528.7L330.5 528.2L330.0 528.4L329.5 528.5L329.0 528.4L328.5 528.4L328.0 528.6L327.5 528.3L327.0 528.6L326.5 528.7L326.0 528.4L325.5 528.4L325.0 528.5L324.5 528.2L324.0 528.7L323.5 528.6L323.0 528.5L322.5 528.3L322.0 528.5L321.5 528.5L321.0 528.7L320.5 528.4L320.0 528.8L319.5 528.5L319.0 528.7L318.5 528.3L318.0 528.3L317.5 528.5L317.0 528.4L316.5 528.6L316.0 528.4L315.5 528.2L315.0 528.4L314.5 528.4L314.0 528.3L313.5 528.6L313.0 528.6L312.5 528.4L312.0 528.8L311.5 528.3L311.0 528.4L310.5 528.4L310.0 528.3L309.5 528.5L309.0 528.7L308.5 528.2L308.0 528.6L307.5 528.6L307.0 528.7L306.5 528.4L306.0 528.3L305.5 528.6L305.0 528.7L304.5 528.7L304.0 528.7L303.5 528.5L303.0 528.7L302.5 528.6L302.0 528.7L301.5 528.6L301.0 528.3L300.5 528.4L300.0 528.7L299.5 528.6L299.0 528.5L298.5 528.4L298.0 528.3L297.5 528.5L297.0 528.4L296.5 528.5L296.0 528.5L295.5 528.5L295.0 528.5L294.5 528.8L294.0 528.6L293.5 528.8L293.0 528.5L292.5 528.5L292.0 528.4L291.5 528.6L291.0 528.7L290.5 528.4L290.0 528.7L289.5 528.3L289.0 528.5L288.5 528.6L288.0 528.7L287.5 528.8L287.0 528.6L286.5 528.8L286.0 528.5L285.5 528.3L285.0 528.5L284.5 528.6L284.0 528.3L283.5 528.3L283.0 528.4L282.5 528.4L282.0 528.5L281.5 528.4L281.0 528.4L280.5 528.4L280.0 528.4L279.5 528.8L279.0 528.5L278.5 528.8L278.0 528.8L277.5 528.8L277.0 528.8L276.5 528.5L276.0 528.3L275.5 528.7L275.0 528.8L274.5 528.4L274.0 528.8L273.5 528.4L273.0 528.7L272.5 528.4L272.0 528.9L271.5 528.9L271.0 528.6L270.5 528.5L270.0 528.6L269.5 528.3L269.0 528.5L268.5 528.5L268.0 528.6L267.5 528.8L267.0 528.6L266.5 528.9L266.0 528.9L265.5 528.4L265.0 528.7L264.5 528.8L264.0 528.7L263.5 528.5L263.0 528.6L262.5 528.4L262.0 528.9L261.5 528.5L261.0 528.8L260.5 528.9L260.0 528.6L259.5 528.7L259.0 528.6L258.5 528.6L258.0 528.8L257.5 528.6L257.0 528.5L256.5 528.7L256.0 528.8L255.5 528.6L255.0 528.7L254.5 528.6L254.0 528.8L253.5 528.4L253.0 528.3L252.5 528.6L252.0 528.9L251.5 528.9L251.0 528.6L250.5 528.9L250.0 528.6L249.5 528.7L249.0 528.5L248.5 528.5L248.0 528.9L247.5 528.9L247.0 528.7L246.5 528.4L246.0 528.7L245.5 528.7L245.0 528.8L244.5 528.8L244.0 528.4L243.5 528.4L243.0 528.9L242.5 528.6L242.0 528.8L241.5 528.8L241.0 528.6L240.5 528.8L240.0 528.7L239.5 528.8L239.0 528.6L238.5 528.9L238.0 528.5L237.5 528.5L237.0 528.6L236.5 528.9L236.0 528.6L235.5 528.8L235.0 528.5L234.5 528.4L234.0 528.7L233.5 528.8L233.0 528.8L232.5 529.0L232.0 528.5L231.5 528.8L231.0 528.8L230.5 528.6L230.0 528.8L229.5 529.0L229.0 528.4L228.5 528.5L228.0 528.9L227.5 528.5L227.0 528.5L226.5 528.4L226.0 528.7L225.5 529.0L225.0 528.5L224.5 528.6L224.0 528.5L223.5 528.9L223.0 528.6L222.5 528.5L222.0 528.4L221.5 528.5L221.0 528.4L220.5 528.8L220.0 528.6L219.5 528.9L219.0 528.9L218.5 528.4L218.0 528.8L217.5 528.8L217.0 528.7L216.5 528.6L216.0 528.6L215.5 528.7L215.0 528.5L214.5 528.5L214.0 529.0L213.5 528.8L213.0 529.1L212.5 529.2L212.0 529.0L211.5 529.3L211.0 528.9L210.5 529.3L210.0 528.9L209.5 529.2L209.0 529.4L208.5 529.2L208.0 529.7L207.5 529.6L207.0 529.6L206.5 529.9L206.0 529.5L205.5 529.7L205.0 529.5L204.5 529.8L204.0 529.9L203.5 529.8L203.0 530.1L202.5 529.6L202.0 529.8L201.5 530.3L201.0 530.1L200.5 530.3L200.0 530.0L199.5 530.3L199.0 530.2L198.5 530.1L198.0 530.0L197.5 530.3L197.0 530.5L196.5 530.8L196.0 530.2L195.5 530.4L195.0 530.2L194.5 530.5L194.0 530.9L193.5 530.3L193.0 530.8L192.5 530.2L192.0 530.5L191.5 530.6L191.0 529.5L190.5 527.0L190.0 524.8L156.0 524.8Z" fill="#ff78a8" stroke="#f4c6d6" stroke-opacity="0.45" stroke-width="0.5" />
<rect x="156" y="624.05" width="935" height="1.5" fill="#e99bbb"/>
<defs><linearGradient id="g5" x1="0" y1="0" x2="0" y2="1"><stop offset="0" stop-color="#d8a8bc" stop-opacity="0.35"/><stop offset="0.6" stop-color="#f0a0c0" stop-opacity="0.6"/><stop offset="1" stop-color="#ff78a8" stop-opacity="0.95"/></linearGradient><linearGradient id="gn" x1="0" y1="0" x2="0" y2="1"><stop offset="0" stop-color="#f0b8cc" stop-opacity="0.5"/><stop offset="0.5" stop-color="#ff80ae" stop-opacity="1"/><stop offset="1" stop-color="#f0b8cc" stop-opacity="0.5"/></linearGradient></defs>
<path d="M156.0 615.3L156.5 615.2L157.0 616.0L157.5 615.8L158.0 615.5L158.5 618.9L159.0 623.3L159.5 624.8L172.0 624.8L172.5 617.1L173.0 610.5L173.5 610.7L174.0 611.5L174.5 611.6L175.0 610.7L175.5 611.3L176.0 611.3L176.5 611.0L177.0 611.1L177.5 612.0L178.0 611.1L178.5 612.9L179.0 612.6L179.5 613.5L180.0 613.1L180.5 612.9L181.0 613.1L181.5 613.9L182.0 613.7L182.5 613.4L183.0 614.3L183.5 614.5L184.0 615.2L184.5 615.0L185.0 614.9L185.5 615.2L186.0 614.8L186.5 615.5L187.0 615.3L187.5 615.7L188.0 615.1L188.5 615.4L189.0 617.7L189.5 622.4L190.0 624.8L202.5 624.8L203.0 622.8L203.5 612.9L204.0 611.4L204.5 612.0L205.0 611.9L205.5 612.1L206.0 611.3L206.5 611.5L207.0 612.5L207.5 611.5L208.0 611.8L208.5 612.3L209.0 613.2L209.5 613.5L210.0 613.1L210.5 613.8L211.0 613.7L211.5 614.1L212.0 614.3L212.5 614.2L213.0 614.4L213.5 613.9L214.0 615.2L214.5 615.3L215.0 615.5L215.5 615.0L216.0 615.4L216.5 615.4L217.0 615.6L217.5 615.7L218.0 615.4L218.5 616.1L219.0 615.9L219.5 616.2L220.0 616.1L220.5 619.9L221.0 624.4L221.5 624.8L233.5 624.8L234.0 618.9L234.5 611.7L235.0 611.1L235.5 611.8L236.0 611.6L236.5 611.5L237.0 611.5L237.5 611.8L238.0 612.0L238.5 612.4L239.0 612.4L239.5 612.7L240.0 613.8L240.5 613.8L241.0 613.4L241.5 613.9L242.0 613.5L242.5 613.5L243.0 614.4L243.5 614.3L244.0 614.2L244.5 614.4L245.0 615.0L245.5 615.0L246.0 615.7L246.5 615.1L247.0 615.1L247.5 615.8L248.0 615.4L248.5 615.5L249.0 616.0L249.5 616.0L250.0 616.2L250.5 616.3L251.0 615.7L251.5 620.0L252.0 624.5L252.5 624.8L264.0 624.8L264.5 624.2L265.0 614.4L265.5 611.3L266.0 611.9L266.5 611.9L267.0 611.8L267.5 612.2L268.0 612.2L268.5 612.1L269.0 611.6L269.5 612.1L270.0 612.0L270.5 613.4L271.0 613.7L271.5 613.6L272.0 613.2L272.5 613.3L273.0 613.6L273.5 614.3L274.0 614.2L274.5 614.5L275.0 613.9L275.5 615.1L276.0 615.1L276.5 615.1L277.0 615.7L277.5 615.1L278.0 615.2L278.5 615.9L279.0 616.0L279.5 615.6L280.0 615.8L280.5 615.7L281.0 616.1L281.5 617.9L282.0 622.3L282.5 624.8L295.0 624.8L295.5 619.9L296.0 611.5L296.5 611.2L297.0 610.6L297.5 611.0L298.0 611.4L298.5 611.3L299.0 611.9L299.5 611.3L300.0 611.8L300.5 611.2L301.0 612.1L301.5 613.0L302.0 612.6L302.5 613.4L303.0 612.9L303.5 613.0L304.0 613.2L304.5 613.4L305.0 613.5L305.5 613.2L306.0 613.4L306.5 614.5L307.0 614.9L307.5 615.2L308.0 615.3L308.5 615.0L309.0 615.0L309.5 615.2L310.0 615.5L310.5 615.0L311.0 615.4L311.5 615.6L312.0 617.3L312.5 622.0L313.0 624.8L326.0 624.8L326.5 615.9L327.0 612.0L327.5 611.8L328.0 612.2L328.5 611.3L329.0 611.5L329.5 611.4L330.0 612.2L330.5 612.1L331.0 611.7L331.5 612.4L332.0 611.8L332.5 613.4L333.0 613.4L333.5 614.0L334.0 613.7L334.5 613.4L335.0 613.7L335.5 613.8L336.0 614.1L336.5 613.9L337.0 614.6L337.5 615.0L338.0 615.3L338.5 615.7L339.0 615.8L339.5 615.6L340.0 615.7L340.5 615.3L341.0 615.6L341.5 616.1L342.0 616.2L342.5 615.6L343.0 618.2L343.5 622.9L344.0 624.8L356.5 624.8L357.0 621.7L357.5 611.8L358.0 611.9L358.5 612.0L359.0 611.6L359.5 612.2L360.0 612.1L360.5 612.0L361.0 612.0L361.5 612.4L362.0 612.2L362.5 612.3L363.0 613.6L363.5 613.6L364.0 613.7L364.5 613.5L365.0 613.5L365.5 614.1L366.0 613.7L366.5 614.5L367.0 614.2L367.5 614.6L368.0 615.5L368.5 615.7L369.0 615.3L369.5 615.8L370.0 615.7L370.5 616.0L371.0 615.9L371.5 616.0L372.0 615.7L372.5 616.1L373.0 615.6L373.5 616.3L374.0 616.8L374.5 621.2L375.0 624.8L387.5 624.8L388.0 616.9L388.5 610.4L389.0 611.4L389.5 610.9L390.0 610.9L390.5 610.8L391.0 611.4L391.5 611.8L392.0 610.9L392.5 611.4L393.0 611.4L393.5 611.8L394.0 612.8L394.5 612.5L395.0 613.2L395.5 613.5L396.0 612.7L396.5 613.2L397.0 613.1L397.5 613.8L398.0 613.7L398.5 613.7L399.0 614.3L399.5 614.5L400.0 615.1L400.5 614.7L401.0 615.3L401.5 614.8L402.0 615.4L402.5 615.3L403.0 615.3L403.5 615.2L404.0 615.5L404.5 615.4L405.0 617.0L405.5 621.8L406.0 624.8L418.0 624.8L418.5 623.0L419.0 613.0L419.5 611.1L420.0 611.5L420.5 611.6L421.0 612.0L421.5 612.0L422.0 612.2L422.5 612.0L423.0 612.5L423.5 612.5L424.0 611.7L424.5 612.8L425.0 613.1L425.5 613.3L426.0 613.8L426.5 613.5L427.0 613.4L427.5 614.1L428.0 614.2L428.5 614.5L429.0 614.2L429.5 615.2L430.0 615.4L430.5 614.9L431.0 615.1L431.5 615.6L432.0 615.3L432.5 615.5L433.0 615.4L433.5 615.6L434.0 615.5L434.5 615.8L435.0 616.1L435.5 616.0L436.0 615.8L436.5 615.8L437.0 616.4L437.5 616.1L438.0 616.6L438.5 616.2L439.0 616.7L439.5 616.4L440.0 616.3L440.5 616.3L441.0 616.8L441.5 617.0L442.0 616.8L442.5 617.1L443.0 617.1L443.5 617.2L444.0 616.8L444.5 617.0L445.0 617.1L445.5 617.2L446.0 617.8L446.5 621.8L447.0 624.8L464.5 624.8L465.0 616.8L465.5 611.6L466.0 611.0L466.5 610.7L467.0 610.9L467.5 611.2L468.0 611.6L468.5 611.5L469.0 612.1L469.5 611.5L470.0 612.3L470.5 612.2L471.0 612.8L471.5 612.9L472.0 613.7L472.5 613.3L473.0 613.5L473.5 613.2L474.0 613.9L474.5 613.6L475.0 613.5L475.5 614.0L476.0 615.1L476.5 615.1L477.0 615.4L477.5 614.8L478.0 614.8L478.5 615.6L479.0 615.5L479.5 615.5L480.0 615.8L480.5 615.2L481.0 615.8L481.5 617.6L482.0 621.9L482.5 624.8L495.0 624.8L495.5 622.2L496.0 612.5L496.5 611.1L497.0 610.8L497.5 611.1L498.0 611.5L498.5 611.5L499.0 611.1L499.5 611.6L500.0 611.3L500.5 611.3L501.0 611.3L501.5 612.7L502.0 612.7L502.5 612.9L503.0 613.5L503.5 613.5L504.0 613.1L504.5 613.4L505.0 614.0L505.5 613.6L506.0 613.8L506.5 614.7L507.0 614.6L507.5 614.9L508.0 614.9L508.5 615.5L509.0 615.3L509.5 615.5L510.0 615.6L510.5 615.2L511.0 615.6L511.5 615.9L512.0 615.9L512.5 620.9L513.0 624.8L526.0 624.8L526.5 617.8L527.0 610.1L527.5 610.7L528.0 610.7L528.5 610.8L529.0 611.1L529.5 610.3L530.0 610.5L530.5 611.3L531.0 611.2L531.5 610.8L532.0 611.5L532.5 612.4L533.0 612.9L533.5 612.5L534.0 612.5L534.5 613.1L535.0 613.2L535.5 613.1L536.0 613.7L536.5 613.3L537.0 613.6L537.5 614.5L538.0 614.8L538.5 614.6L539.0 614.8L539.5 614.7L540.0 615.0L540.5 615.0L541.0 615.3L541.5 615.3L542.0 614.9L542.5 614.8L543.0 619.2L543.5 624.1L544.0 624.8L556.5 624.8L557.0 623.8L557.5 614.5L558.0 612.0L558.5 611.9L559.0 611.7L559.5 611.1L560.0 612.2L560.5 612.2L561.0 611.6L561.5 612.3L562.0 611.6L562.5 611.9L563.0 613.2L563.5 613.3L564.0 613.9L564.5 613.5L565.0 613.7L565.5 613.5L566.0 613.7L566.5 614.0L567.0 614.4L567.5 613.7L568.0 615.1L568.5 615.0L569.0 614.9L569.5 615.3L570.0 615.6L570.5 615.6L571.0 615.5L571.5 615.4L572.0 615.9L572.5 615.9L573.0 615.8L573.5 617.3L574.0 621.3L574.5 624.8L587.5 624.8L588.0 619.8L588.5 611.4L589.0 610.9L589.5 611.1L590.0 610.8L590.5 611.4L591.0 611.4L591.5 611.4L592.0 611.2L592.5 611.6L593.0 611.7L593.5 611.1L594.0 613.3L594.5 613.1L595.0 613.0L595.5 613.6L596.0 613.5L596.5 613.2L597.0 613.5L597.5 613.4L598.0 613.6L598.5 613.7L599.0 614.8L599.5 615.3L600.0 615.3L600.5 615.2L601.0 615.5L601.5 615.0L602.0 614.9L602.5 615.6L603.0 615.3L603.5 615.5L604.0 615.3L604.5 615.2L605.0 620.1L605.5 624.7L618.5 624.8L619.0 615.3L619.5 611.5L620.0 611.4L620.5 610.8L621.0 611.1L621.5 611.3L622.0 611.0L622.5 611.2L623.0 611.6L623.5 611.7L624.0 611.8L624.5 611.4L625.0 613.0L625.5 612.7L626.0 613.1L626.5 613.5L627.0 613.8L627.5 614.0L628.0 613.7L628.5 613.8L629.0 614.0L629.5 613.8L630.0 615.2L630.5 614.7L631.0 615.3L631.5 615.4L632.0 615.3L632.5 615.3L633.0 615.6L633.5 615.0L634.0 615.3L634.5 615.3L635.0 615.5L635.5 617.5L636.0 622.1L636.5 624.8L649.0 624.8L649.5 621.2L650.0 612.1L650.5 611.5L651.0 611.8L651.5 611.5L652.0 611.5L652.5 612.5L653.0 612.3L653.5 611.9L654.0 612.1L654.5 612.8L655.0 612.1L655.5 613.9L656.0 614.0L656.5 614.0L657.0 614.0L657.5 614.3L658.0 614.2L658.5 614.4L659.0 614.2L659.5 614.6L660.0 614.1L660.5 615.2L661.0 615.2L661.5 615.5L662.0 615.5L662.5 615.5L663.0 615.9L663.5 615.4L664.0 615.7L664.5 615.8L665.0 616.0L665.5 615.7L666.0 618.3L666.5 622.7L667.0 624.8L680.0 624.8L680.5 617.1L681.0 610.8L681.5 611.0L682.0 610.7L682.5 611.4L683.0 611.0L683.5 611.2L684.0 611.7L684.5 611.4L685.0 611.6L685.5 611.0L686.0 611.5L686.5 612.9L687.0 612.6L687.5 612.7L688.0 613.5L688.5 613.3L689.0 613.2L689.5 613.9L690.0 614.0L690.5 614.1L691.0 613.4L691.5 614.9L692.0 614.6L692.5 614.6L693.0 615.0L693.5 614.9L694.0 615.2L694.5 615.4L695.0 615.5L695.5 615.1L696.0 615.5L696.5 615.2L697.0 615.8L697.5 618.3L698.0 622.9L698.5 624.8L710.5 624.8L711.0 622.7L711.5 613.0L712.0 611.1L712.5 611.3L713.0 611.9L713.5 612.1L714.0 612.1L714.5 611.8L715.0 611.9L715.5 612.2L716.0 612.4L716.5 612.1L717.0 613.3L717.5 613.3L718.0 613.2L718.5 613.5L719.0 613.3L719.5 613.6L720.0 614.2L720.5 613.6L721.0 614.4L721.5 614.5L722.0 615.4L722.5 615.4L723.0 615.2L723.5 615.2L724.0 615.2L724.5 615.7L725.0 615.6L725.5 615.4L726.0 615.3L726.5 616.0L727.0 615.8L727.5 616.4L728.0 620.9L728.5 624.8L741.5 624.8L742.0 618.6L742.5 611.1L743.0 611.2L743.5 611.2L744.0 611.6L744.5 611.3L745.0 611.8L745.5 611.7L746.0 611.4L746.5 612.2L747.0 612.0L747.5 611.9L748.0 613.1L748.5 613.3L749.0 613.0L749.5 613.5L750.0 613.9L750.5 613.7L751.0 614.0L751.5 613.8L752.0 614.0L752.5 614.0L753.0 615.0L753.5 615.5L754.0 615.6L754.5 615.5L755.0 615.4L755.5 615.7L756.0 615.1L756.5 615.8L757.0 615.5L757.5 616.0L758.0 615.7L758.5 616.3L759.0 620.8L759.5 624.8L772.0 624.8L772.5 624.1L773.0 613.7L773.5 610.6L774.0 611.0L774.5 610.9L775.0 611.6L775.5 611.7L776.0 611.0L776.5 611.5L777.0 611.0L777.5 611.2L778.0 612.1L778.5 612.9L779.0 612.5L779.5 612.9L780.0 613.5L780.5 613.4L781.0 613.0L781.5 613.0L782.0 613.6L782.5 614.0L783.0 613.8L783.5 614.7L784.0 614.8L784.5 614.9L785.0 614.8L785.5 615.1L786.0 615.1L786.5 615.1L787.0 615.5L787.5 615.3L788.0 615.0L788.5 615.6L789.0 616.0L789.5 620.5L790.0 624.8L803.0 624.8L803.5 620.1L804.0 612.0L804.5 612.2L805.0 611.8L805.5 612.4L806.0 612.6L806.5 611.9L807.0 612.2L807.5 612.2L808.0 611.9L808.5 612.0L809.0 612.8L809.5 613.4L810.0 613.3L810.5 614.2L811.0 614.1L811.5 613.9L812.0 614.5L812.5 614.3L813.0 614.0L813.5 614.7L814.0 614.4L814.5 615.1L815.0 615.8L815.5 615.4L816.0 615.8L816.5 615.3L817.0 616.0L817.5 616.1L818.0 615.7L818.5 615.9L819.0 615.8L819.5 615.9L820.0 616.3L820.5 619.2L821.0 623.7L821.5 624.8L834.0 624.8L834.5 615.7L835.0 611.2L835.5 610.9L836.0 611.6L836.5 611.2L837.0 610.8L837.5 611.4L838.0 611.2L838.5 611.9L839.0 611.3L839.5 611.4L840.0 611.3L840.5 612.5L841.0 612.5L841.5 613.3L842.0 613.0L842.5 613.7L843.0 613.6L843.5 613.7L844.0 613.5L844.5 613.5L845.0 613.9L845.5 614.6L846.0 614.4L846.5 615.2L847.0 614.6L847.5 615.2L848.0 615.1L848.5 615.5L849.0 615.2L849.5 615.4L850.0 615.5L850.5 615.8L851.0 615.4L851.5 615.8L852.0 620.6L852.5 624.8L864.5 624.8L865.0 621.6L865.5 612.2L866.0 611.8L866.5 612.3L867.0 612.5L867.5 611.8L868.0 611.8L868.5 611.8L869.0 612.6L869.5 612.6L870.0 612.9L870.5 612.6L871.0 613.9L871.5 613.9L872.0 614.0L872.5 613.5L873.0 613.8L873.5 614.3L874.0 614.2L874.5 614.3L875.0 614.5L875.5 614.5L876.0 615.6L876.5 615.8L877.0 615.7L877.5 615.6L878.0 615.9L878.5 615.4L879.0 615.6L879.5 616.0L880.0 616.1L880.5 615.9L881.0 616.0L881.5 619.1L882.0 623.6L882.5 624.8L895.5 624.8L896.0 617.7L896.5 611.5L897.0 611.7L897.5 612.3L898.0 611.7L898.5 612.2L899.0 612.5L899.5 612.7L900.0 612.0L900.5 612.5L901.0 612.5L901.5 612.6L902.0 613.5L902.5 613.4L903.0 613.5L903.5 613.5L904.0 614.0L904.5 614.3L905.0 614.0L905.5 614.0L906.0 614.8L906.5 614.9L907.0 615.5L907.5 615.7L908.0 615.3L908.5 615.9L909.0 615.6L909.5 616.1L910.0 615.6L910.5 615.9L911.0 616.3L911.5 615.9L912.0 615.8L912.5 618.7L913.0 622.8L913.5 624.8L926.0 624.8L926.5 622.8L927.0 612.9L927.5 611.1L928.0 610.9L928.5 610.5L929.0 610.5L929.5 610.4L930.0 610.7L930.5 610.7L931.0 610.7L931.5 611.5L932.0 611.5L932.5 612.1L933.0 612.4L933.5 613.0L934.0 612.8L934.5 613.0L935.0 613.5L935.5 613.5L936.0 613.4L936.5 613.4L937.0 613.4L937.5 614.3L938.0 614.7L938.5 615.1L939.0 614.4L939.5 614.9L940.0 614.9L940.5 614.8L941.0 614.9L941.5 615.1L942.0 615.1L942.5 615.6L943.0 615.5L943.5 617.9L944.0 622.6L944.5 624.8L957.0 624.8L957.5 618.7L958.0 610.9L958.5 611.2L959.0 610.9L959.5 611.2L960.0 611.9L960.5 612.0L961.0 612.1L961.5 611.4L962.0 611.7L962.5 611.4L963.0 612.5L963.5 613.0L964.0 613.0L964.5 613.4L965.0 613.1L965.5 613.6L966.0 613.5L966.5 614.0L967.0 614.1L967.5 614.0L968.0 613.6L968.5 615.3L969.0 615.3L969.5 615.2L970.0 615.0L970.5 615.4L971.0 615.4L971.5 615.7L972.0 615.2L972.5 615.2L973.0 615.9L973.5 616.0L974.0 615.8L974.5 616.7L975.0 621.4L975.5 624.8L987.5 624.8L988.0 624.3L988.5 614.5L989.0 611.4L989.5 612.3L990.0 612.0L990.5 612.0L991.0 612.3L991.5 612.0L992.0 611.7L992.5 612.6L993.0 612.2L993.5 612.3L994.0 613.1L994.5 613.9L995.0 613.3L995.5 613.9L996.0 614.2L996.5 613.8L997.0 614.4L997.5 614.4L998.0 614.6L998.5 614.1L999.0 615.2L999.5 615.6L1000.0 615.6L1000.5 615.2L1001.0 615.6L1001.5 615.6L1002.0 615.5L1002.5 615.5L1003.0 615.5L1003.5 615.5L1004.0 616.1L1004.5 616.1L1005.0 615.7L1005.5 619.4L1006.0 623.8L1006.5 624.8L1018.5 624.8L1019.0 619.9L1019.5 611.0L1020.0 611.0L1020.5 611.1L1021.0 610.7L1021.5 611.0L1022.0 611.8L1022.5 611.3L1023.0 610.9L1023.5 611.2L1024.0 611.8L1024.5 611.5L1025.0 613.0L1025.5 613.1L1026.0 612.9L1026.5 613.2L1027.0 613.4L1027.5 613.1L1028.0 613.8L1028.5 613.8L1029.0 613.6L1029.5 613.5L1030.0 615.1L1030.5 614.9L1031.0 614.6L1031.5 615.0L1032.0 614.8L1032.5 614.8L1033.0 615.4L1033.5 615.4L1034.0 615.6L1034.5 615.2L1035.0 615.4L1035.5 617.4L1036.0 622.1L1036.5 624.8L1049.5 624.8L1050.0 615.8L1050.5 610.9L1051.0 610.3L1051.5 611.5L1052.0 610.8L1052.5 610.8L1053.0 610.8L1053.5 611.4L1054.0 611.6L1054.5 610.9L1055.0 611.4L1055.5 610.9L1056.0 612.8L1056.5 613.2L1057.0 612.5L1057.5 612.8L1058.0 613.1L1058.5 613.1L1059.0 613.2L1059.5 613.3L1060.0 613.9L1060.5 613.3L1061.0 614.9L1061.5 614.5L1062.0 614.7L1062.5 614.9L1063.0 615.0L1063.5 614.6L1064.0 615.0L1064.5 615.0L1065.0 615.1L1065.5 615.5L1066.0 615.3L1066.5 615.1L1067.0 615.3L1067.5 620.3L1068.0 624.8L1080.0 624.8L1080.5 621.7L1081.0 612.1L1081.5 611.1L1082.0 611.7L1082.5 611.1L1083.0 612.1L1083.5 611.7L1084.0 611.9L1084.5 611.9L1085.0 612.2L1085.5 611.9L1086.0 611.6L1086.5 613.6L1087.0 613.4L1087.5 613.1L1088.0 613.0L1088.5 613.4L1089.0 613.7L1089.5 614.0L1090.0 613.4L1090.5 613.9L1091.0 614.0L1091.0 626.5L1090.5 625.9L1090.0 625.8L1089.5 626.5L1089.0 626.1L1088.5 625.8L1088.0 626.3L1087.5 625.9L1087.0 626.3L1086.5 626.5L1086.0 626.1L1085.5 625.9L1085.0 626.4L1084.5 626.2L1084.0 626.5L1083.5 626.5L1083.0 626.2L1082.5 626.3L1082.0 626.2L1081.5 626.3L1081.0 625.8L1080.5 626.1L1080.0 624.8L1068.0 624.8L1067.5 625.9L1067.0 626.4L1066.5 626.3L1066.0 626.3L1065.5 626.2L1065.0 626.1L1064.5 626.4L1064.0 626.1L1063.5 626.3L1063.0 626.3L1062.5 626.5L1062.0 626.5L1061.5 626.3L1061.0 625.8L1060.5 626.2L1060.0 626.4L1059.5 626.1L1059.0 625.8L1058.5 626.0L1058.0 626.5L1057.5 626.0L1057.0 626.5L1056.5 626.4L1056.0 626.3L1055.5 626.3L1055.0 626.3L1054.5 626.1L1054.0 626.3L1053.5 626.4L1053.0 626.2L1052.5 626.1L1052.0 625.8L1051.5 626.5L1051.0 626.1L1050.5 626.5L1050.0 625.8L1049.5 624.8L1036.5 624.8L1036.0 626.3L1035.5 625.9L1035.0 625.8L1034.5 626.1L1034.0 625.9L1033.5 626.5L1033.0 626.0L1032.5 626.0L1032.0 626.3L1031.5 625.9L1031.0 626.6L1030.5 626.6L1030.0 625.9L1029.5 626.6L1029.0 625.9L1028.5 626.4L1028.0 625.9L1027.5 626.1L1027.0 626.2L1026.5 625.9L1026.0 626.2L1025.5 625.9L1025.0 626.2L1024.5 625.8L1024.0 626.1L1023.5 626.1L1023.0 625.9L1022.5 626.3L1022.0 626.6L1021.5 626.0L1021.0 625.9L1020.5 626.5L1020.0 626.2L1019.5 626.6L1019.0 626.5L1018.5 624.8L1006.5 624.8L1006.0 625.8L1005.5 626.4L1005.0 626.0L1004.5 626.3L1004.0 626.0L1003.5 626.3L1003.0 625.9L1002.5 625.8L1002.0 625.8L1001.5 626.3L1001.0 626.3L1000.5 626.4L1000.0 626.6L999.5 625.9L999.0 626.3L998.5 626.2L998.0 626.4L997.5 626.1L997.0 626.5L996.5 626.3L996.0 626.6L995.5 626.1L995.0 626.2L994.5 626.4L994.0 626.1L993.5 625.9L993.0 625.9L992.5 626.1L992.0 626.5L991.5 626.3L991.0 626.2L990.5 626.2L990.0 626.5L989.5 626.0L989.0 626.3L988.5 626.2L988.0 626.3L987.5 624.8L975.5 624.8L975.0 626.2L974.5 626.5L974.0 626.0L973.5 626.4L973.0 626.1L972.5 626.1L972.0 626.2L971.5 626.4L971.0 626.5L970.5 626.5L970.0 626.3L969.5 625.9L969.0 625.8L968.5 626.4L968.0 625.9L967.5 626.0L967.0 626.5L966.5 626.6L966.0 626.2L965.5 625.9L965.0 626.2L964.5 626.4L964.0 626.5L963.5 625.9L963.0 625.9L962.5 626.1L962.0 626.0L961.5 626.1L961.0 626.2L960.5 626.5L960.0 626.5L959.5 626.5L959.0 626.0L958.5 626.2L958.0 626.0L957.5 626.4L957.0 624.8L944.5 624.8L944.0 626.0L943.5 626.4L943.0 626.5L942.5 626.2L942.0 626.5L941.5 626.1L941.0 625.9L940.5 626.3L940.0 626.5L939.5 625.9L939.0 626.5L938.5 626.3L938.0 625.9L937.5 625.9L937.0 626.4L936.5 626.1L936.0 626.0L935.5 626.3L935.0 625.9L934.5 625.8L934.0 625.8L933.5 626.1L933.0 626.4L932.5 626.1L932.0 626.3L931.5 626.4L931.0 625.8L930.5 626.1L930.0 626.4L929.5 626.0L929.0 625.9L928.5 626.2L928.0 626.6L927.5 626.0L927.0 626.1L926.5 625.9L926.0 624.8L913.5 624.8L913.0 626.6L912.5 626.6L912.0 626.0L911.5 626.2L911.0 625.8L910.5 626.2L910.0 626.0L909.5 625.8L909.0 626.0L908.5 626.0L908.0 626.1L907.5 626.5L907.0 625.9L906.5 626.5L906.0 626.5L905.5 626.0L905.0 626.3L904.5 626.1L904.0 626.5L903.5 626.3L903.0 626.4L902.5 626.1L902.0 625.9L901.5 626.1L901.0 626.4L900.5 626.2L900.0 626.4L899.5 626.0L899.0 625.9L898.5 626.3L898.0 626.0L897.5 626.4L897.0 625.9L896.5 626.5L896.0 626.2L895.5 624.8L882.5 624.8L882.0 626.0L881.5 626.2L881.0 626.4L880.5 625.8L880.0 626.2L879.5 626.3L879.0 626.5L878.5 626.1L878.0 626.2L877.5 626.4L877.0 626.3L876.5 626.3L876.0 626.3L875.5 626.5L875.0 626.1L874.5 626.2L874.0 626.3L873.5 625.9L873.0 626.3L872.5 626.5L872.0 626.5L871.5 626.3L871.0 626.3L870.5 626.3L870.0 626.2L869.5 626.5L869.0 626.2L868.5 626.3L868.0 626.0L867.5 625.9L867.0 626.4L866.5 626.0L866.0 626.4L865.5 625.9L865.0 626.1L864.5 624.8L852.5 624.8L852.0 626.6L851.5 626.6L851.0 625.8L850.5 626.5L850.0 626.2L849.5 626.3L849.0 625.8L848.5 626.0L848.0 626.6L847.5 626.5L847.0 626.4L846.5 625.9L846.0 626.3L845.5 626.1L845.0 626.0L844.5 626.3L844.0 625.9L843.5 626.4L843.0 626.0L842.5 625.9L842.0 626.3L841.5 626.0L841.0 626.4L840.5 626.3L840.0 626.0L839.5 625.9L839.0 626.0L838.5 626.4L838.0 626.0L837.5 625.8L837.0 626.3L836.5 626.1L836.0 626.3L835.5 626.4L835.0 626.0L834.5 626.1L834.0 624.8L821.5 624.8L821.0 626.6L820.5 626.3L820.0 626.2L819.5 626.1L819.0 626.1L818.5 626.2L818.0 626.1L817.5 626.4L817.0 626.2L816.5 625.9L816.0 626.2L815.5 626.0L815.0 626.6L814.5 626.3L814.0 626.6L813.5 626.2L813.0 626.1L812.5 626.1L812.0 625.9L811.5 626.2L811.0 626.2L810.5 626.0L810.0 626.2L809.5 626.3L809.0 626.0L808.5 626.2L808.0 626.5L807.5 626.2L807.0 626.4L806.5 626.3L806.0 626.6L805.5 626.3L805.0 625.8L804.5 626.3L804.0 625.9L803.5 626.2L803.0 624.8L790.0 624.8L789.5 626.2L789.0 625.8L788.5 625.8L788.0 625.8L787.5 626.1L787.0 625.8L786.5 626.4L786.0 626.4L785.5 626.4L785.0 626.5L784.5 626.5L784.0 626.4L783.5 626.2L783.0 626.2L782.5 625.9L782.0 626.4L781.5 626.4L781.0 625.8L780.5 626.6L780.0 626.2L779.5 626.4L779.0 626.1L778.5 625.9L778.0 626.3L777.5 626.5L777.0 626.2L776.5 626.1L776.0 626.4L775.5 625.9L775.0 626.1L774.5 626.3L774.0 625.8L773.5 626.5L773.0 626.1L772.5 625.9L772.0 624.8L759.5 624.8L759.0 626.0L758.5 625.9L758.0 626.1L757.5 626.5L757.0 626.0L756.5 626.5L756.0 626.5L755.5 626.5L755.0 626.3L754.5 626.2L754.0 626.4L753.5 625.9L753.0 626.3L752.5 625.9L752.0 626.1L751.5 626.4L751.0 626.5L750.5 626.4L750.0 626.5L749.5 626.5L749.0 626.2L748.5 626.3L748.0 626.3L747.5 625.9L747.0 626.4L746.5 625.8L746.0 626.4L745.5 626.0L745.0 626.6L744.5 626.4L744.0 626.4L743.5 626.5L743.0 626.0L742.5 626.2L742.0 626.5L741.5 624.8L728.5 624.8L728.0 626.2L727.5 626.5L727.0 626.0L726.5 626.1L726.0 626.3L725.5 625.9L725.0 626.4L724.5 626.5L724.0 626.6L723.5 626.4L723.0 626.0L722.5 626.2L722.0 626.0L721.5 626.4L721.0 625.8L720.5 626.0L720.0 626.4L719.5 626.2L719.0 625.9L718.5 626.2L718.0 626.4L717.5 626.3L717.0 625.9L716.5 626.2L716.0 626.0L715.5 625.9L715.0 626.5L714.5 626.5L714.0 626.2L713.5 625.8L713.0 626.4L712.5 626.0L712.0 626.2L711.5 626.1L711.0 625.8L710.5 624.8L698.5 624.8L698.0 626.0L697.5 626.4L697.0 625.8L696.5 626.4L696.0 626.3L695.5 625.9L695.0 626.1L694.5 626.5L694.0 626.3L693.5 625.9L693.0 626.1L692.5 626.6L692.0 626.1L691.5 625.8L691.0 626.0L690.5 626.2L690.0 626.1L689.5 626.0L689.0 625.9L688.5 626.5L688.0 625.8L687.5 626.5L687.0 626.5L686.5 626.4L686.0 626.2L685.5 626.4L685.0 626.3L684.5 626.4L684.0 626.3L683.5 626.2L683.0 625.8L682.5 626.4L682.0 626.0L681.5 626.6L681.0 626.2L680.5 625.9L680.0 624.8L667.0 624.8L666.5 626.1L666.0 625.8L665.5 626.3L665.0 626.4L664.5 625.9L664.0 626.4L663.5 626.4L663.0 626.4L662.5 626.6L662.0 626.2L661.5 626.4L661.0 626.0L660.5 626.2L660.0 626.1L659.5 626.3L659.0 625.8L658.5 626.1L658.0 626.4L657.5 626.0L657.0 626.0L656.5 626.2L656.0 626.4L655.5 626.6L655.0 626.4L654.5 626.1L654.0 626.5L653.5 626.2L653.0 626.2L652.5 626.4L652.0 626.4L651.5 625.8L651.0 626.0L650.5 626.3L650.0 626.1L649.5 626.4L649.0 624.8L636.5 624.8L636.0 626.5L635.5 626.6L635.0 626.2L634.5 625.9L634.0 626.5L633.5 626.2L633.0 626.0L632.5 625.9L632.0 625.9L631.5 626.5L631.0 625.8L630.5 626.1L630.0 626.4L629.5 626.1L629.0 626.6L628.5 626.4L628.0 625.9L627.5 626.0L627.0 626.6L626.5 626.5L626.0 626.0L625.5 625.8L625.0 626.4L624.5 626.0L624.0 625.8L623.5 625.8L623.0 626.2L622.5 626.0L622.0 626.5L621.5 626.5L621.0 626.1L620.5 626.0L620.0 625.9L619.5 626.0L619.0 626.4L618.5 624.8L606.0 624.8L605.5 626.5L605.0 626.3L604.5 626.0L604.0 626.3L603.5 626.5L603.0 626.0L602.5 625.9L602.0 626.1L601.5 626.3L601.0 626.2L600.5 626.3L600.0 626.4L599.5 626.3L599.0 626.3L598.5 626.5L598.0 626.0L597.5 626.2L597.0 625.9L596.5 625.8L596.0 626.1L595.5 626.3L595.0 626.3L594.5 626.2L594.0 626.2L593.5 626.0L593.0 626.1L592.5 626.0L592.0 625.9L591.5 625.8L591.0 626.4L590.5 626.5L590.0 626.2L589.5 625.9L589.0 625.8L588.5 626.4L588.0 625.9L587.5 624.8L574.5 624.8L574.0 626.5L573.5 626.3L573.0 626.2L572.5 626.6L572.0 626.6L571.5 626.3L571.0 626.2L570.5 626.4L570.0 626.1L569.5 626.1L569.0 626.2L568.5 626.0L568.0 626.1L567.5 626.3L567.0 626.0L566.5 626.5L566.0 626.6L565.5 626.5L565.0 626.3L564.5 626.2L564.0 626.6L563.5 626.1L563.0 626.5L562.5 626.5L562.0 626.5L561.5 626.3L561.0 626.1L560.5 626.1L560.0 625.9L559.5 625.9L559.0 626.5L558.5 626.0L558.0 626.5L557.5 626.5L557.0 625.8L556.5 624.8L544.0 624.8L543.5 626.0L543.0 625.9L542.5 626.6L542.0 626.2L541.5 625.9L541.0 626.4L540.5 625.9L540.0 626.3L539.5 625.9L539.0 626.4L538.5 626.0L538.0 626.2L537.5 626.4L537.0 626.4L536.5 626.6L536.0 626.3L535.5 626.3L535.0 626.3L534.5 625.9L534.0 626.6L533.5 626.3L533.0 626.6L532.5 625.8L532.0 626.4L531.5 626.5L531.0 626.0L530.5 626.1L530.0 626.4L529.5 626.6L529.0 626.0L528.5 625.9L528.0 626.2L527.5 626.2L527.0 626.4L526.5 626.1L526.0 624.8L513.0 624.8L512.5 625.8L512.0 626.2L511.5 626.5L511.0 626.0L510.5 626.3L510.0 626.4L509.5 625.9L509.0 626.5L508.5 625.8L508.0 626.4L507.5 626.4L507.0 626.5L506.5 625.8L506.0 625.9L505.5 626.2L505.0 625.8L504.5 626.2L504.0 625.8L503.5 626.4L503.0 626.3L502.5 626.3L502.0 626.3L501.5 626.3L501.0 626.6L500.5 625.8L500.0 626.4L499.5 626.3L499.0 626.2L498.5 626.4L498.0 626.3L497.5 626.2L497.0 626.5L496.5 626.5L496.0 626.3L495.5 626.5L495.0 624.8L482.5 624.8L482.0 626.1L481.5 626.4L481.0 626.4L480.5 625.8L480.0 626.0L479.5 626.1L479.0 626.3L478.5 626.2L478.0 626.5L477.5 625.9L477.0 625.9L476.5 626.5L476.0 626.3L475.5 626.5L475.0 626.3L474.5 626.0L474.0 626.5L473.5 625.8L473.0 626.2L472.5 626.1L472.0 626.1L471.5 626.2L471.0 626.1L470.5 625.9L470.0 626.5L469.5 626.1L469.0 626.6L468.5 626.3L468.0 626.1L467.5 626.1L467.0 626.1L466.5 626.0L466.0 626.6L465.5 626.4L465.0 626.3L464.5 624.8L447.0 624.8L446.5 626.1L446.0 625.8L445.5 626.0L445.0 626.5L444.5 626.0L444.0 625.8L443.5 626.2L443.0 625.9L442.5 626.3L442.0 626.1L441.5 626.6L441.0 625.9L440.5 626.4L440.0 625.8L439.5 625.9L439.0 626.2L438.5 626.3L438.0 626.6L437.5 626.1L437.0 625.9L436.5 626.0L436.0 626.5L435.5 626.3L435.0 626.1L434.5 626.1L434.0 626.2L433.5 626.2L433.0 626.6L432.5 626.2L432.0 626.4L431.5 626.2L431.0 626.4L430.5 626.0L430.0 626.1L429.5 626.1L429.0 625.9L428.5 626.5L428.0 626.4L427.5 626.5L427.0 625.8L426.5 626.4L426.0 626.2L425.5 626.1L425.0 626.3L424.5 626.5L424.0 626.0L423.5 626.0L423.0 626.0L422.5 626.1L422.0 626.3L421.5 626.0L421.0 625.8L420.5 626.5L420.0 625.8L419.5 625.8L419.0 626.0L418.5 626.1L418.0 624.8L406.0 624.8L405.5 626.3L405.0 626.5L404.5 626.0L404.0 625.9L403.5 626.0L403.0 626.2L402.5 626.4L402.0 625.9L401.5 625.9L401.0 626.3L400.5 625.9L400.0 625.9L399.5 625.9L399.0 626.4L398.5 625.9L398.0 626.0L397.5 626.6L397.0 626.2L396.5 626.1L396.0 626.1L395.5 625.9L395.0 626.1L394.5 626.1L394.0 626.5L393.5 626.1L393.0 626.3L392.5 625.9L392.0 625.8L391.5 626.4L391.0 626.0L390.5 626.0L390.0 626.4L389.5 626.2L389.0 626.4L388.5 626.4L388.0 626.1L387.5 624.8L375.0 624.8L374.5 626.5L374.0 625.9L373.5 626.5L373.0 626.0L372.5 626.2L372.0 626.2L371.5 625.9L371.0 626.3L370.5 626.0L370.0 626.5L369.5 626.1L369.0 626.2L368.5 626.4L368.0 625.9L367.5 626.1L367.0 626.2L366.5 626.2L366.0 625.8L365.5 626.4L365.0 626.6L364.5 626.4L364.0 625.8L363.5 626.6L363.0 626.4L362.5 625.9L362.0 626.3L361.5 625.9L361.0 626.4L360.5 625.9L360.0 626.3L359.5 626.2L359.0 626.3L358.5 626.3L358.0 626.2L357.5 626.2L357.0 626.5L356.5 624.8L344.0 624.8L343.5 626.0L343.0 625.9L342.5 626.0L342.0 625.9L341.5 626.6L341.0 626.6L340.5 626.1L340.0 626.1L339.5 626.4L339.0 625.9L338.5 626.1L338.0 625.9L337.5 626.0L337.0 626.3L336.5 626.5L336.0 626.4L335.5 626.4L335.0 626.2L334.5 626.6L334.0 626.5L333.5 626.1L333.0 626.3L332.5 626.5L332.0 626.3L331.5 626.6L331.0 626.4L330.5 626.4L330.0 626.1L329.5 626.5L329.0 625.8L328.5 626.4L328.0 626.2L327.5 626.1L327.0 626.1L326.5 626.3L326.0 624.8L313.0 624.8L312.5 625.8L312.0 625.8L311.5 626.6L311.0 626.0L310.5 626.6L310.0 626.3L309.5 625.9L309.0 626.0L308.5 626.6L308.0 625.9L307.5 626.4L307.0 626.3L306.5 626.3L306.0 626.3L305.5 625.9L305.0 626.6L304.5 626.4L304.0 625.8L303.5 625.9L303.0 626.5L302.5 626.3L302.0 625.8L301.5 626.6L301.0 626.2L300.5 626.2L300.0 626.6L299.5 626.5L299.0 625.9L298.5 626.5L298.0 626.6L297.5 626.2L297.0 626.4L296.5 626.2L296.0 626.5L295.5 626.5L295.0 624.8L282.5 624.8L282.0 625.8L281.5 626.2L281.0 626.1L280.5 626.1L280.0 626.3L279.5 625.9L279.0 626.4L278.5 626.3L278.0 626.2L277.5 626.3L277.0 626.3L276.5 626.3L276.0 626.1L275.5 626.0L275.0 626.4L274.5 626.2L274.0 626.1L273.5 626.6L273.0 625.9L272.5 625.9L272.0 626.5L271.5 625.9L271.0 626.0L270.5 625.9L270.0 626.5L269.5 626.5L269.0 626.2L268.5 626.1L268.0 626.0L267.5 626.5L267.0 626.3L266.5 626.1L266.0 625.9L265.5 626.4L265.0 626.2L264.5 626.1L264.0 624.8L252.5 624.8L252.0 626.1L251.5 626.3L251.0 626.1L250.5 626.6L250.0 626.5L249.5 626.5L249.0 626.6L248.5 626.0L248.0 625.8L247.5 626.3L247.0 626.0L246.5 626.4L246.0 625.8L245.5 626.2L245.0 626.2L244.5 626.0L244.0 626.1L243.5 626.2L243.0 626.1L242.5 626.6L242.0 625.9L241.5 626.0L241.0 626.0L240.5 625.9L240.0 626.6L239.5 626.3L239.0 625.8L238.5 626.1L238.0 625.8L237.5 626.2L237.0 625.9L236.5 626.3L236.0 625.9L235.5 626.3L235.0 626.3L234.5 626.5L234.0 626.4L233.5 624.8L221.5 624.8L221.0 625.9L220.5 626.4L220.0 626.2L219.5 625.9L219.0 626.2L218.5 626.2L218.0 626.6L217.5 626.6L217.0 626.6L216.5 625.9L216.0 626.2L215.5 625.9L215.0 626.0L214.5 625.9L214.0 625.9L213.5 625.8L213.0 626.2L212.5 626.4L212.0 625.9L211.5 626.1L211.0 626.4L210.5 625.9L210.0 626.2L209.5 625.9L209.0 625.9L208.5 626.6L208.0 626.1L207.5 625.8L207.0 626.3L206.5 626.6L206.0 626.6L205.5 626.0L205.0 625.9L204.5 626.1L204.0 626.1L203.5 626.6L203.0 626.1L202.5 624.8L190.0 624.8L189.5 625.9L189.0 626.2L188.5 626.1L188.0 626.4L187.5 626.3L187.0 626.1L186.5 626.3L186.0 626.1L185.5 626.4L185.0 626.3L184.5 625.8L184.0 626.0L183.5 626.4L183.0 626.6L182.5 626.0L182.0 626.3L181.5 625.8L181.0 626.3L180.5 626.3L180.0 626.3L179.5 626.1L179.0 626.2L178.5 625.8L178.0 625.9L177.5 626.0L177.0 626.3L176.5 626.3L176.0 626.5L175.5 625.8L175.0 626.1L174.5 626.5L174.0 626.0L173.5 626.0L173.0 626.0L172.5 626.1L172.0 624.8L159.5 624.8L159.0 625.9L158.5 626.2L158.0 626.1L157.5 626.3L157.0 625.9L156.5 626.2L156.0 626.5Z" fill="url(#g5)"/>
<path d="M174.5 625.8L174.7 610.5L177.8 611.1L178.0 625.8ZM179.4 625.8L179.6 613.2L182.5 613.6L182.7 625.8ZM185.0 625.8L185.2 614.2L187.4 614.6L187.6 625.8ZM205.6 625.8L205.8 611.1L208.4 611.7L208.6 625.8ZM210.8 625.8L211.0 613.6L212.7 614.1L212.9 625.8ZM215.6 625.8L215.8 614.6L217.8 615.0L218.0 625.8ZM236.4 625.8L236.6 611.2L238.7 611.7L238.9 625.8ZM241.3 625.8L241.5 613.7L243.8 614.1L244.0 625.8ZM246.4 625.8L246.6 614.6L248.9 615.0L249.1 625.8ZM267.5 625.8L267.7 611.2L270.7 611.8L270.9 625.8ZM271.9 625.8L272.1 613.7L273.9 614.2L274.1 625.8ZM276.8 625.8L277.0 614.7L279.2 615.1L279.4 625.8ZM265.2 625.8L265.4 612.3L266.0 612.8L266.2 625.8ZM297.9 625.8L298.1 610.5L301.3 611.1L301.5 625.8ZM302.8 625.8L303.0 613.2L304.5 613.6L304.7 625.8ZM307.8 625.8L308.0 614.2L309.6 614.6L309.8 625.8ZM328.7 625.8L328.9 611.2L331.1 611.7L331.3 625.8ZM334.3 625.8L334.5 613.7L336.4 614.1L336.6 625.8ZM339.0 625.8L339.2 614.6L341.5 615.0L341.7 625.8ZM359.6 625.8L359.8 611.3L362.0 611.8L362.2 625.8ZM364.2 625.8L364.4 613.8L367.2 614.2L367.4 625.8ZM369.1 625.8L369.3 614.7L370.8 615.1L371.0 625.8ZM357.5 625.8L357.7 612.4L358.3 612.9L358.5 625.8ZM389.9 625.8L390.1 610.4L393.2 610.9L393.4 625.8ZM395.8 625.8L396.0 613.0L398.8 613.5L399.0 625.8ZM400.2 625.8L400.4 614.0L403.2 614.5L403.4 625.8ZM421.2 625.8L421.4 611.1L423.7 611.6L423.9 625.8ZM425.7 625.8L425.9 613.6L428.3 614.1L428.5 625.8ZM430.7 625.8L430.9 614.6L432.6 615.0L432.8 625.8ZM419.0 625.8L419.2 612.2L419.9 612.7L420.1 625.8ZM436.4 625.8L436.6 617.8L438.2 618.1L438.4 625.8ZM440.9 625.8L441.1 617.8L442.7 618.1L442.9 625.8ZM467.8 625.8L468.0 610.7L469.7 611.3L469.9 625.8ZM472.2 625.8L472.4 613.3L475.1 613.8L475.3 625.8ZM477.3 625.8L477.5 614.3L478.9 614.7L479.1 625.8ZM464.5 625.8L464.7 611.9L465.3 612.4L465.5 625.8ZM498.6 625.8L498.8 610.8L501.1 611.3L501.3 625.8ZM503.2 625.8L503.4 613.3L506.5 613.8L506.7 625.8ZM508.3 625.8L508.5 614.3L511.5 614.8L511.7 625.8ZM529.1 625.8L529.3 610.1L531.4 610.7L531.6 625.8ZM533.5 625.8L533.7 612.8L536.5 613.3L536.7 625.8ZM539.1 625.8L539.3 613.9L542.0 614.3L542.2 625.8ZM560.1 625.8L560.3 611.0L562.7 611.6L562.9 625.8ZM564.9 625.8L565.1 613.5L567.6 614.0L567.8 625.8ZM569.7 625.8L569.9 614.5L572.7 614.9L572.9 625.8ZM590.3 625.8L590.5 610.5L593.7 611.1L593.9 625.8ZM595.9 625.8L596.1 613.2L599.0 613.6L599.2 625.8ZM600.5 625.8L600.7 614.2L603.1 614.6L603.3 625.8ZM621.3 625.8L621.5 610.7L624.8 611.3L625.0 625.8ZM626.7 625.8L626.9 613.3L629.5 613.7L629.7 625.8ZM630.7 625.8L630.9 614.3L633.9 614.7L634.1 625.8ZM618.7 625.8L618.9 611.8L619.8 612.4L620.0 625.8ZM651.8 625.8L652.0 611.3L654.3 611.9L654.5 625.8ZM657.4 625.8L657.6 613.8L660.0 614.2L660.2 625.8ZM662.0 625.8L662.2 614.8L665.0 615.2L665.2 625.8ZM649.4 625.8L649.6 612.4L650.6 612.9L650.8 625.8ZM682.5 625.8L682.7 610.5L684.8 611.1L685.0 625.8ZM688.0 625.8L688.2 613.1L691.2 613.6L691.4 625.8ZM692.5 625.8L692.7 614.1L695.2 614.6L695.4 625.8ZM680.8 625.8L681.0 611.7L682.0 612.2L682.2 625.8ZM713.6 625.8L713.8 611.0L717.2 611.6L717.4 625.8ZM719.0 625.8L719.2 613.5L722.0 614.0L722.2 625.8ZM723.7 625.8L723.9 614.5L725.9 614.9L726.1 625.8ZM744.6 625.8L744.8 611.0L747.8 611.6L748.0 625.8ZM749.5 625.8L749.7 613.5L751.7 614.0L751.9 625.8ZM754.0 625.8L754.2 614.5L756.3 614.9L756.5 625.8ZM741.6 625.8L741.8 612.1L742.6 612.6L742.8 625.8ZM775.5 625.8L775.7 610.5L778.1 611.1L778.3 625.8ZM780.3 625.8L780.5 613.1L783.1 613.6L783.3 625.8ZM784.6 625.8L784.8 614.1L786.9 614.6L787.1 625.8ZM806.4 625.8L806.6 611.5L808.6 612.0L808.8 625.8ZM811.4 625.8L811.6 613.9L813.7 614.3L813.9 625.8ZM815.7 625.8L815.9 614.9L817.9 615.3L818.1 625.8ZM836.3 625.8L836.5 610.5L839.1 611.1L839.3 625.8ZM841.5 625.8L841.7 613.1L843.8 613.6L844.0 625.8ZM846.5 625.8L846.7 614.1L848.4 614.6L848.6 625.8ZM867.4 625.8L867.6 611.4L870.6 611.9L870.8 625.8ZM872.4 625.8L872.6 613.9L875.7 614.3L875.9 625.8ZM877.0 625.8L877.2 614.8L880.1 615.2L880.3 625.8ZM865.5 625.8L865.7 612.5L866.7 613.0L866.9 625.8ZM898.7 625.8L898.9 611.5L902.0 612.0L902.2 625.8ZM903.9 625.8L904.1 613.9L906.0 614.4L906.2 625.8ZM908.3 625.8L908.5 614.9L911.4 615.3L911.6 625.8ZM896.2 625.8L896.4 612.6L897.2 613.0L897.4 625.8ZM929.3 625.8L929.5 610.3L931.3 610.8L931.5 625.8ZM934.7 625.8L934.9 612.9L937.4 613.4L937.6 625.8ZM939.3 625.8L939.5 614.0L941.5 614.4L941.7 625.8ZM927.1 625.8L927.3 611.4L928.2 612.0L928.4 625.8ZM960.0 625.8L960.2 610.9L962.5 611.4L962.7 625.8ZM964.5 625.8L964.7 613.4L966.9 613.9L967.1 625.8ZM970.3 625.8L970.5 614.4L973.3 614.8L973.5 625.8ZM957.4 625.8L957.6 612.0L958.6 612.5L958.8 625.8ZM991.0 625.8L991.2 611.3L993.8 611.8L994.0 625.8ZM995.6 625.8L995.8 613.8L997.6 614.2L997.8 625.8ZM1000.3 625.8L1000.5 614.7L1003.0 615.1L1003.2 625.8ZM987.9 625.8L988.1 612.4L988.6 612.9L988.8 625.8ZM1021.7 625.8L1021.9 610.5L1023.9 611.0L1024.1 625.8ZM1027.0 625.8L1027.2 613.1L1029.5 613.6L1029.7 625.8ZM1031.3 625.8L1031.5 614.1L1033.7 614.5L1033.9 625.8ZM1018.8 625.8L1019.0 611.6L1019.6 612.2L1019.8 625.8ZM1052.5 625.8L1052.7 610.4L1055.9 610.9L1056.1 625.8ZM1057.7 625.8L1057.9 613.0L1059.6 613.5L1059.8 625.8ZM1061.9 625.8L1062.1 614.0L1064.3 614.5L1064.5 625.8ZM1082.8 625.8L1083.0 610.9L1085.9 611.4L1086.1 625.8ZM1087.8 625.8L1088.0 613.4L1091.2 613.9L1091.4 625.8ZM1080.7 625.8L1080.9 612.0L1081.5 612.5L1081.7 625.8Z" fill="#ff78a8"/>
<rect x="156" y="724.05" width="935" height="1.5" fill="#e99bbb"/>
<path d="M156.0 724.8L156.5 723.4L157.0 722.2L157.5 721.0L158.0 720.1L158.5 719.7L159.0 719.4L159.5 717.7L160.0 717.6L160.5 717.8L161.0 717.2L161.5 717.6L162.0 717.2L162.5 717.6L163.0 718.1L163.5 718.7L164.0 718.6L164.5 718.4L165.0 718.0L165.5 718.5L166.0 717.4L166.5 718.4L167.0 718.0L167.5 716.6L168.0 716.7L168.5 716.8L169.0 716.1L169.5 716.9L170.0 716.0L170.5 715.8L171.0 716.1L171.5 715.9L172.0 716.4L172.5 716.7L173.0 717.3L173.5 716.8L174.0 716.9L174.5 717.1L175.0 716.4L175.5 715.6L176.0 716.7L176.5 716.4L177.0 715.9L177.5 717.4L178.0 717.0L178.5 717.0L179.0 717.6L179.5 716.7L180.0 717.6L180.5 717.0L181.0 717.5L181.5 717.8L182.0 718.3L182.5 719.2L183.0 718.8L183.5 719.5L184.0 720.6L184.5 720.2L185.0 718.8L185.5 718.0L186.0 718.3L186.5 718.9L187.0 718.6L187.5 718.4L188.0 719.0L188.5 719.4L189.0 719.4L189.5 719.5L190.0 719.2L190.5 718.8L191.0 718.8L191.5 719.1L192.0 719.5L192.5 720.1L193.0 719.2L193.5 719.7L194.0 719.7L194.5 719.5L195.0 718.7L195.5 717.9L196.0 717.0L196.5 716.2L197.0 715.8L197.5 715.3L198.0 714.8L198.5 714.4L199.0 714.6L199.5 714.6L200.0 714.4L200.5 714.8L201.0 714.9L201.5 716.8L202.0 716.8L202.5 717.3L203.0 717.7L203.5 717.4L204.0 717.6L204.5 717.1L205.0 719.2L205.5 719.0L206.0 720.9L206.5 720.4L207.0 719.3L207.5 718.5L208.0 717.8L208.5 718.2L209.0 718.9L209.5 717.6L210.0 718.3L210.5 718.0L211.0 717.5L211.5 718.1L212.0 717.1L212.5 717.4L213.0 716.1L213.5 717.2L214.0 715.8L214.5 716.3L215.0 714.4L215.5 714.1L216.0 714.1L216.5 714.5L217.0 714.3L217.5 715.7L218.0 716.4L218.5 716.2L219.0 715.0L219.5 714.2L220.0 714.6L220.5 715.1L221.0 714.8L221.5 716.0L222.0 715.4L222.5 716.3L223.0 717.1L223.5 715.8L224.0 716.1L224.5 716.7L225.0 716.2L225.5 716.2L226.0 716.1L226.5 716.3L227.0 715.2L227.5 714.1L228.0 713.0L228.5 713.6L229.0 714.4L229.5 715.2L230.0 715.2L230.5 714.9L231.0 714.5L231.5 714.7L232.0 714.6L232.5 715.2L233.0 715.5L233.5 715.2L234.0 716.6L234.5 716.8L235.0 716.0L235.5 716.1L236.0 716.9L236.5 716.7L237.0 716.6L237.5 717.3L238.0 716.4L238.5 716.0L239.0 716.7L239.5 715.7L240.0 715.0L240.5 715.5L241.0 716.2L241.5 716.3L242.0 717.8L242.5 718.0L243.0 718.4L243.5 719.3L244.0 720.4L244.5 719.7L245.0 719.5L245.5 719.5L246.0 720.6L246.5 719.5L247.0 718.7L247.5 718.0L248.0 717.4L248.5 717.3L249.0 717.5L249.5 718.9L250.0 718.1L250.5 717.5L251.0 718.6L251.5 718.1L252.0 717.8L252.5 717.0L253.0 717.0L253.5 715.2L254.0 715.9L254.5 715.8L255.0 715.4L255.5 715.4L256.0 716.4L256.5 715.3L257.0 715.2L257.5 714.0L258.0 714.2L258.5 714.2L259.0 715.5L259.5 715.1L260.0 715.5L260.5 715.9L261.0 716.6L261.5 715.8L262.0 716.3L262.5 716.4L263.0 715.8L263.5 715.3L264.0 714.4L264.5 714.9L265.0 716.8L265.5 717.3L266.0 717.4L266.5 717.1L267.0 717.0L267.5 716.3L268.0 716.4L268.5 716.9L269.0 716.6L269.5 716.5L270.0 715.8L270.5 716.0L271.0 716.2L271.5 715.1L272.0 714.4L272.5 714.8L273.0 716.5L273.5 716.0L274.0 715.9L274.5 716.3L275.0 715.8L275.5 716.1L276.0 716.1L276.5 716.2L277.0 715.5L277.5 716.1L278.0 715.6L278.5 717.5L279.0 718.4L279.5 718.2L280.0 720.1L280.5 720.0L281.0 719.4L281.5 719.4L282.0 719.1L282.5 718.8L283.0 719.1L283.5 717.5L284.0 716.9L284.5 716.7L285.0 717.4L285.5 718.1L286.0 717.3L286.5 717.6L287.0 716.6L287.5 717.5L288.0 716.3L288.5 717.5L289.0 716.6L289.5 716.1L290.0 716.6L290.5 716.3L291.0 715.5L291.5 715.9L292.0 716.0L292.5 714.7L293.0 716.2L293.5 716.4L294.0 715.8L294.5 716.8L295.0 717.4L295.5 716.8L296.0 717.8L296.5 717.7L297.0 718.4L297.5 719.0L298.0 718.7L298.5 718.5L299.0 718.5L299.5 718.9L300.0 720.1L300.5 720.0L301.0 719.7L301.5 718.4L302.0 718.9L302.5 718.9L303.0 720.8L303.5 721.3L304.0 721.0L304.5 721.3L305.0 720.7L305.5 720.5L306.0 718.7L306.5 718.9L307.0 718.1L307.5 718.0L308.0 716.8L308.5 716.3L309.0 715.1L309.5 715.5L310.0 714.9L310.5 713.4L311.0 713.3L311.5 713.7L312.0 713.2L312.5 714.4L313.0 714.1L313.5 714.2L314.0 713.6L314.5 714.9L315.0 716.6L315.5 716.8L316.0 717.8L316.5 718.0L317.0 717.9L317.5 718.4L318.0 718.2L318.5 717.1L319.0 716.0L319.5 715.0L320.0 715.7L320.5 715.9L321.0 715.1L321.5 715.6L322.0 715.1L322.5 715.0L323.0 715.1L323.5 715.3L324.0 715.4L324.5 715.6L325.0 715.0L325.5 713.5L326.0 714.1L326.5 713.3L327.0 713.8L327.5 713.8L328.0 714.3L328.5 713.6L329.0 714.4L329.5 714.3L330.0 713.0L330.5 714.2L331.0 715.0L331.5 715.4L332.0 715.3L332.5 716.0L333.0 715.3L333.5 716.6L334.0 716.8L334.5 715.9L335.0 715.9L335.5 715.9L336.0 715.7L336.5 715.8L337.0 715.8L337.5 716.7L338.0 717.1L338.5 716.9L339.0 716.5L339.5 716.0L340.0 714.9L340.5 714.7L341.0 713.4L341.5 712.4L342.0 712.2L342.5 713.3L343.0 713.6L343.5 715.7L344.0 716.1L344.5 717.0L345.0 717.8L345.5 718.8L346.0 718.4L346.5 718.2L347.0 718.7L347.5 719.0L348.0 719.7L348.5 720.0L349.0 718.8L349.5 718.1L350.0 718.6L350.5 718.0L351.0 716.5L351.5 714.8L352.0 715.0L352.5 715.4L353.0 714.4L353.5 715.6L354.0 715.2L354.5 716.0L355.0 715.6L355.5 716.1L356.0 716.1L356.5 716.7L357.0 717.1L357.5 717.0L358.0 717.8L358.5 718.2L359.0 717.5L359.5 716.3L360.0 715.7L360.5 715.7L361.0 716.4L361.5 716.3L362.0 716.6L362.5 716.8L363.0 716.2L363.5 717.0L364.0 716.8L364.5 716.0L365.0 715.8L365.5 716.2L366.0 716.1L366.5 715.8L367.0 716.5L367.5 715.9L368.0 715.7L368.5 715.1L369.0 715.2L369.5 716.4L370.0 715.2L370.5 714.8L371.0 714.1L371.5 714.4L372.0 713.9L372.5 714.9L373.0 715.8L373.5 717.0L374.0 717.5L374.5 717.8L375.0 719.3L375.5 719.6L376.0 719.9L376.5 720.9L377.0 719.4L377.5 719.6L378.0 720.1L378.5 720.2L379.0 720.2L379.5 720.8L380.0 720.0L380.5 719.2L381.0 718.5L381.5 717.5L382.0 717.1L382.5 718.4L383.0 718.8L383.5 720.8L384.0 721.3L384.5 721.1L385.0 720.3L385.5 718.8L386.0 718.8L386.5 719.3L387.0 719.1L387.5 718.6L388.0 718.8L388.5 718.6L389.0 719.3L389.5 718.7L390.0 719.8L390.5 719.6L391.0 717.3L391.5 716.2L392.0 715.7L392.5 715.5L393.0 715.1L393.5 715.6L394.0 716.1L394.5 715.2L395.0 714.1L395.5 715.4L396.0 715.0L396.5 715.3L397.0 714.2L397.5 714.9L398.0 714.8L398.5 715.4L399.0 717.3L399.5 716.8L400.0 717.5L400.5 718.1L401.0 717.8L401.5 718.1L402.0 717.7L402.5 717.3L403.0 718.3L403.5 718.5L404.0 718.1L404.5 717.3L405.0 717.3L405.5 716.3L406.0 715.3L406.5 715.9L407.0 715.6L407.5 714.5L408.0 714.9L408.5 715.6L409.0 715.5L409.5 715.8L410.0 717.4L410.5 717.8L411.0 718.1L411.5 719.2L412.0 719.8L412.5 720.1L413.0 720.0L413.5 720.1L414.0 718.7L414.5 719.4L415.0 718.6L415.5 718.8L416.0 719.2L416.5 719.1L417.0 718.6L417.5 719.0L418.0 719.1L418.5 718.8L419.0 717.6L419.5 717.8L420.0 718.6L420.5 717.2L421.0 717.2L421.5 715.9L422.0 716.1L422.5 716.3L423.0 717.9L423.5 717.7L424.0 719.4L424.5 718.8L425.0 719.2L425.5 719.1L426.0 719.5L426.5 718.9L427.0 718.1L427.5 716.6L428.0 717.0L428.5 716.7L429.0 716.9L429.5 717.5L430.0 717.0L430.5 717.9L431.0 716.8L431.5 716.9L432.0 716.3L432.5 716.0L433.0 717.5L433.5 717.9L434.0 718.5L434.5 718.0L435.0 716.4L435.5 716.6L436.0 716.0L436.5 716.2L437.0 716.4L437.5 715.4L438.0 715.5L438.5 715.4L439.0 715.2L439.5 715.1L440.0 715.9L440.5 716.0L441.0 715.5L441.5 715.7L442.0 715.0L442.5 715.6L443.0 715.5L443.5 716.3L444.0 717.1L444.5 716.5L445.0 717.6L445.5 717.7L446.0 716.9L446.5 716.4L447.0 716.8L447.5 716.7L448.0 716.0L448.5 716.0L449.0 713.7L449.5 713.1L450.0 712.4L450.5 713.2L451.0 712.9L451.5 714.0L452.0 713.3L452.5 713.5L453.0 714.3L453.5 713.1L454.0 714.3L454.5 713.7L455.0 715.6L455.5 716.6L456.0 717.1L456.5 716.9L457.0 715.4L457.5 715.8L458.0 714.3L458.5 715.0L459.0 713.6L459.5 713.9L460.0 713.9L460.5 713.9L461.0 713.6L461.5 713.3L462.0 714.6L462.5 713.0L463.0 714.0L463.5 713.9L464.0 713.3L464.5 713.6L465.0 713.6L465.5 713.5L466.0 714.5L466.5 714.8L467.0 713.6L467.5 714.8L468.0 714.3L468.5 713.4L469.0 713.8L469.5 713.3L470.0 713.4L470.5 713.6L471.0 714.6L471.5 714.6L472.0 714.7L472.5 714.5L473.0 713.8L473.5 713.5L474.0 712.9L474.5 712.6L475.0 712.6L475.5 712.3L476.0 712.6L476.5 713.0L477.0 715.6L477.5 716.4L478.0 716.2L478.5 716.6L479.0 715.6L479.5 715.4L480.0 715.1L480.5 713.8L481.0 714.0L481.5 714.9L482.0 715.2L482.5 716.2L483.0 716.5L483.5 717.1L484.0 717.7L484.5 719.0L485.0 719.1L485.5 720.0L486.0 720.9L486.5 720.2L487.0 718.4L487.5 717.3L488.0 716.0L488.5 716.7L489.0 717.3L489.5 716.7L490.0 716.7L490.5 715.8L491.0 714.9L491.5 713.9L492.0 713.9L492.5 712.9L493.0 713.7L493.5 713.8L494.0 713.7L494.5 714.0L495.0 715.6L495.5 716.2L496.0 716.2L496.5 715.9L497.0 715.7L497.5 715.8L498.0 715.6L498.5 714.3L499.0 713.7L499.5 714.4L500.0 714.1L500.5 714.1L501.0 713.7L501.5 714.3L502.0 714.4L502.5 714.4L503.0 714.5L503.5 714.0L504.0 713.9L504.5 713.1L505.0 713.8L505.5 713.6L506.0 713.7L506.5 714.0L507.0 715.8L507.5 716.8L508.0 716.3L508.5 718.0L509.0 717.1L509.5 718.3L510.0 718.3L510.5 717.0L511.0 716.7L511.5 715.2L512.0 714.4L512.5 715.8L513.0 716.2L513.5 717.1L514.0 718.0L514.5 717.4L515.0 715.9L515.5 714.4L516.0 714.0L516.5 714.8L517.0 716.0L517.5 717.6L518.0 717.3L518.5 718.0L519.0 717.7L519.5 716.6L520.0 717.0L520.5 717.6L521.0 717.5L521.5 717.6L522.0 717.9L522.5 717.6L523.0 717.0L523.5 717.4L524.0 716.1L524.5 716.1L525.0 716.4L525.5 716.6L526.0 716.5L526.5 715.8L527.0 714.1L527.5 714.4L528.0 712.8L528.5 714.5L529.0 715.6L529.5 715.3L530.0 717.0L530.5 716.3L531.0 716.5L531.5 716.2L532.0 716.2L532.5 715.3L533.0 716.6L533.5 717.0L534.0 716.7L534.5 717.2L535.0 716.7L535.5 715.8L536.0 715.5L536.5 715.9L537.0 716.1L537.5 716.0L538.0 717.0L538.5 717.9L539.0 718.3L539.5 718.0L540.0 718.6L540.5 718.7L541.0 717.9L541.5 718.9L542.0 718.1L542.5 719.9L543.0 720.1L543.5 720.5L544.0 721.3L544.5 721.1L545.0 721.1L545.5 721.3L546.0 721.3L546.5 721.3L547.0 720.6L547.5 718.9L548.0 718.4L548.5 717.2L549.0 717.0L549.5 717.1L550.0 716.8L550.5 715.2L551.0 714.3L551.5 713.2L552.0 713.8L552.5 713.9L553.0 713.9L553.5 714.1L554.0 714.0L554.5 714.3L555.0 714.8L555.5 714.9L556.0 716.2L556.5 715.3L557.0 715.3L557.5 715.0L558.0 714.6L558.5 714.3L559.0 714.5L559.5 713.6L560.0 714.9L560.5 715.9L561.0 715.7L561.5 717.0L562.0 717.5L562.5 718.9L563.0 719.8L563.5 721.2L564.0 721.3L564.5 720.4L565.0 719.6L565.5 717.9L566.0 717.4L566.5 717.2L567.0 716.8L567.5 715.3L568.0 715.3L568.5 715.2L569.0 715.2L569.5 716.9L570.0 716.2L570.5 715.8L571.0 716.2L571.5 716.3L572.0 714.9L572.5 716.3L573.0 717.3L573.5 717.7L574.0 717.8L574.5 716.8L575.0 717.1L575.5 716.8L576.0 716.5L576.5 716.2L577.0 718.0L577.5 717.6L578.0 719.0L578.5 718.5L579.0 719.1L579.5 719.4L580.0 720.3L580.5 719.2L581.0 719.4L581.5 719.7L582.0 718.9L582.5 719.5L583.0 718.6L583.5 717.2L584.0 717.2L584.5 718.4L585.0 719.5L585.5 719.6L586.0 719.4L586.5 719.6L587.0 720.2L587.5 720.0L588.0 719.5L588.5 719.7L589.0 719.0L589.5 717.9L590.0 717.4L590.5 716.1L591.0 716.5L591.5 716.0L592.0 715.4L592.5 714.2L593.0 715.1L593.5 715.1L594.0 714.9L594.5 714.6L595.0 716.1L595.5 715.5L596.0 715.4L596.5 715.8L597.0 714.0L597.5 713.3L598.0 713.3L598.5 714.3L599.0 713.9L599.5 713.3L600.0 714.2L600.5 713.6L601.0 715.6L601.5 715.9L602.0 717.5L602.5 717.5L603.0 716.9L603.5 717.5L604.0 717.6L604.5 718.8L605.0 719.2L605.5 720.3L606.0 721.2L606.5 721.3L607.0 719.9L607.5 720.0L608.0 719.9L608.5 719.8L609.0 718.0L609.5 716.1L610.0 716.9L610.5 716.2L611.0 716.9L611.5 716.2L612.0 716.8L612.5 717.0L613.0 717.0L613.5 715.5L614.0 715.6L614.5 716.5L615.0 718.0L615.5 718.9L616.0 720.3L616.5 720.9L617.0 720.4L617.5 718.7L618.0 718.5L618.5 719.0L619.0 720.2L619.5 720.6L620.0 720.3L620.5 719.7L621.0 718.9L621.5 719.0L622.0 718.1L622.5 718.1L623.0 717.1L623.5 716.4L624.0 715.2L624.5 715.0L625.0 715.5L625.5 716.8L626.0 717.2L626.5 717.3L627.0 716.9L627.5 717.4L628.0 717.7L628.5 717.7L629.0 716.9L629.5 716.3L630.0 716.8L630.5 717.5L631.0 716.5L631.5 716.8L632.0 715.8L632.5 716.8L633.0 717.6L633.5 717.5L634.0 716.9L634.5 716.8L635.0 716.6L635.5 715.7L636.0 714.5L636.5 715.2L637.0 714.3L637.5 713.8L638.0 714.5L638.5 715.0L639.0 714.3L639.5 713.5L640.0 713.4L640.5 714.5L641.0 714.2L641.5 713.1L642.0 712.9L642.5 713.1L643.0 713.6L643.5 713.8L644.0 715.0L644.5 716.0L645.0 716.7L645.5 717.7L646.0 717.1L646.5 717.7L647.0 718.1L647.5 718.6L648.0 717.8L648.5 717.5L649.0 716.1L649.5 715.1L650.0 715.0L650.5 714.1L651.0 714.8L651.5 715.8L652.0 714.7L652.5 715.1L653.0 713.6L653.5 712.6L654.0 713.4L654.5 713.0L655.0 713.4L655.5 713.5L656.0 713.2L656.5 714.5L657.0 715.5L657.5 716.7L658.0 717.2L658.5 717.1L659.0 717.5L659.5 718.3L660.0 718.4L660.5 717.1L661.0 718.6L661.5 718.9L662.0 718.9L662.5 718.1L663.0 718.5L663.5 720.3L664.0 720.2L664.5 719.3L665.0 718.7L665.5 719.4L666.0 718.7L666.5 718.1L667.0 719.6L667.5 719.1L668.0 719.4L668.5 717.8L669.0 718.1L669.5 717.1L670.0 715.3L670.5 715.6L671.0 716.6L671.5 716.4L672.0 717.6L672.5 717.2L673.0 717.1L673.5 715.7L674.0 715.4L674.5 717.0L675.0 716.9L675.5 717.1L676.0 717.9L676.5 719.3L677.0 719.7L677.5 718.8L678.0 719.7L678.5 720.3L679.0 720.6L679.5 720.3L680.0 719.9L680.5 719.9L681.0 719.5L681.5 720.6L682.0 719.8L682.5 720.1L683.0 718.5L683.5 719.2L684.0 718.7L684.5 719.0L685.0 718.8L685.5 719.4L686.0 718.4L686.5 718.2L687.0 718.3L687.5 717.7L688.0 718.0L688.5 718.1L689.0 718.8L689.5 718.5L690.0 718.2L690.5 719.2L691.0 718.9L691.5 719.1L692.0 719.2L692.5 718.0L693.0 718.0L693.5 718.1L694.0 717.7L694.5 717.5L695.0 715.7L695.5 715.4L696.0 715.4L696.5 715.1L697.0 717.2L697.5 717.0L698.0 717.9L698.5 718.5L699.0 718.3L699.5 716.7L700.0 717.0L700.5 717.2L701.0 719.0L701.5 718.6L702.0 719.4L702.5 719.1L703.0 719.6L703.5 718.5L704.0 719.5L704.5 718.7L705.0 720.0L705.5 720.4L706.0 720.7L706.5 720.3L707.0 719.3L707.5 719.8L708.0 719.1L708.5 719.9L709.0 719.7L709.5 720.6L710.0 720.6L710.5 718.9L711.0 718.1L711.5 717.4L712.0 717.0L712.5 715.0L713.0 714.0L713.5 713.2L714.0 713.4L714.5 714.4L715.0 715.0L715.5 716.4L716.0 716.0L716.5 717.3L717.0 716.1L717.5 716.5L718.0 716.2L718.5 717.2L719.0 718.6L719.5 719.0L720.0 719.3L720.5 719.2L721.0 719.0L721.5 718.6L722.0 717.6L722.5 717.6L723.0 717.9L723.5 717.8L724.0 717.2L724.5 716.1L725.0 716.2L725.5 716.5L726.0 716.4L726.5 714.8L727.0 714.0L727.5 713.6L728.0 712.9L728.5 712.2L729.0 713.4L729.5 713.3L730.0 713.2L730.5 713.6L731.0 714.1L731.5 713.4L732.0 713.1L732.5 713.9L733.0 713.1L733.5 713.3L734.0 714.6L734.5 715.2L735.0 715.5L735.5 715.2L736.0 714.6L736.5 715.7L737.0 717.6L737.5 718.1L738.0 718.3L738.5 718.1L739.0 718.3L739.5 718.0L740.0 717.4L740.5 717.8L741.0 717.6L741.5 718.2L742.0 717.2L742.5 716.7L743.0 717.9L743.5 716.6L744.0 717.8L744.5 717.3L745.0 716.3L745.5 715.3L746.0 715.5L746.5 715.6L747.0 716.2L747.5 716.1L748.0 716.1L748.5 715.3L749.0 715.0L749.5 715.1L750.0 715.7L750.5 715.5L751.0 717.1L751.5 718.1L752.0 718.2L752.5 717.5L753.0 716.4L753.5 715.8L754.0 715.4L754.5 716.3L755.0 715.2L755.5 714.8L756.0 715.1L756.5 714.8L757.0 715.3L757.5 715.5L758.0 716.1L758.5 716.1L759.0 714.9L759.5 716.1L760.0 716.7L760.5 715.9L761.0 716.3L761.5 715.1L762.0 715.6L762.5 715.2L763.0 716.3L763.5 716.8L764.0 716.7L764.5 717.2L765.0 715.9L765.5 715.6L766.0 715.1L766.5 715.5L767.0 716.5L767.5 716.6L768.0 717.0L768.5 716.3L769.0 717.3L769.5 716.9L770.0 716.6L770.5 715.6L771.0 715.0L771.5 715.2L772.0 715.5L772.5 715.8L773.0 715.3L773.5 714.9L774.0 716.1L774.5 716.1L775.0 715.7L775.5 716.5L776.0 716.6L776.5 716.9L777.0 715.7L777.5 716.2L778.0 716.1L778.5 716.1L779.0 714.7L779.5 715.1L780.0 715.3L780.5 714.7L781.0 714.4L781.5 713.8L782.0 715.1L782.5 715.2L783.0 714.6L783.5 713.6L784.0 714.7L784.5 714.7L785.0 715.2L785.5 715.8L786.0 715.4L786.5 715.3L787.0 716.7L787.5 717.8L788.0 718.2L788.5 718.1L789.0 717.6L789.5 717.5L790.0 718.0L790.5 716.8L791.0 717.8L791.5 716.2L792.0 715.7L792.5 717.3L793.0 716.4L793.5 717.1L794.0 717.1L794.5 717.6L795.0 717.9L795.5 716.9L796.0 717.0L796.5 716.8L797.0 717.3L797.5 717.1L798.0 716.9L798.5 716.8L799.0 717.5L799.5 716.6L800.0 717.7L800.5 717.0L801.0 716.9L801.5 718.4L802.0 717.2L802.5 717.5L803.0 718.8L803.5 718.6L804.0 717.5L804.5 718.8L805.0 718.6L805.5 717.8L806.0 718.3L806.5 717.8L807.0 719.3L807.5 718.5L808.0 718.5L808.5 718.1L809.0 717.9L809.5 717.4L810.0 716.6L810.5 716.7L811.0 716.2L811.5 717.2L812.0 717.4L812.5 717.2L813.0 716.6L813.5 715.9L814.0 715.5L814.5 716.7L815.0 715.7L815.5 714.9L816.0 715.1L816.5 715.5L817.0 713.7L817.5 713.9L818.0 712.9L818.5 713.4L819.0 713.0L819.5 714.0L820.0 715.2L820.5 715.0L821.0 715.8L821.5 715.2L822.0 715.1L822.5 715.2L823.0 715.4L823.5 715.8L824.0 715.9L824.5 716.6L825.0 717.3L825.5 717.9L826.0 718.2L826.5 717.9L827.0 718.5L827.5 718.0L828.0 718.5L828.5 718.1L829.0 718.9L829.5 718.2L830.0 719.2L830.5 719.7L831.0 719.5L831.5 720.5L832.0 719.8L832.5 720.4L833.0 720.0L833.5 719.7L834.0 718.9L834.5 719.2L835.0 718.8L835.5 718.8L836.0 718.3L836.5 718.0L837.0 717.2L837.5 717.6L838.0 717.6L838.5 718.0L839.0 717.1L839.5 718.8L840.0 719.2L840.5 718.3L841.0 717.8L841.5 718.0L842.0 718.9L842.5 717.3L843.0 718.3L843.5 717.1L844.0 717.5L844.5 717.5L845.0 715.5L845.5 715.5L846.0 715.6L846.5 715.8L847.0 716.9L847.5 717.6L848.0 717.9L848.5 718.2L849.0 717.8L849.5 717.6L850.0 718.9L850.5 718.1L851.0 718.9L851.5 719.6L852.0 719.7L852.5 719.0L853.0 719.6L853.5 720.1L854.0 719.0L854.5 717.5L855.0 717.8L855.5 716.0L856.0 715.3L856.5 715.5L857.0 716.6L857.5 716.9L858.0 717.3L858.5 717.3L859.0 717.4L859.5 716.5L860.0 716.4L860.5 716.6L861.0 716.7L861.5 717.2L862.0 716.8L862.5 717.8L863.0 716.9L863.5 717.2L864.0 717.2L864.5 718.0L865.0 717.9L865.5 717.7L866.0 718.6L866.5 719.3L867.0 719.9L867.5 718.8L868.0 719.5L868.5 720.2L869.0 719.9L869.5 721.3L870.0 721.2L870.5 720.9L871.0 721.3L871.5 721.0L872.0 720.4L872.5 719.6L873.0 718.4L873.5 715.8L874.0 714.8L874.5 715.8L875.0 715.4L875.5 717.3L876.0 717.3L876.5 717.0L877.0 715.3L877.5 714.9L878.0 715.3L878.5 716.0L879.0 715.3L879.5 716.7L880.0 715.8L880.5 716.1L881.0 716.6L881.5 716.9L882.0 716.3L882.5 715.8L883.0 717.2L883.5 717.1L884.0 717.0L884.5 715.8L885.0 714.8L885.5 715.0L886.0 714.0L886.5 714.3L887.0 714.0L887.5 714.6L888.0 713.9L888.5 714.0L889.0 715.5L889.5 715.3L890.0 716.4L890.5 716.3L891.0 715.7L891.5 716.6L892.0 716.9L892.5 716.9L893.0 717.8L893.5 717.9L894.0 716.6L894.5 717.5L895.0 717.6L895.5 716.3L896.0 716.9L896.5 716.5L897.0 717.0L897.5 716.7L898.0 716.5L898.5 716.7L899.0 715.1L899.5 715.1L900.0 715.7L900.5 716.4L901.0 715.8L901.5 716.1L902.0 716.3L902.5 716.4L903.0 715.3L903.5 715.4L904.0 714.5L904.5 714.8L905.0 714.9L905.5 716.1L906.0 715.9L906.5 715.9L907.0 717.3L907.5 717.1L908.0 717.8L908.5 719.5L909.0 718.9L909.5 719.5L910.0 720.8L910.5 720.5L911.0 719.1L911.5 719.9L912.0 718.6L912.5 719.3L913.0 719.4L913.5 721.0L914.0 721.3L914.5 720.7L915.0 720.1L915.5 720.6L916.0 720.1L916.5 719.9L917.0 719.6L917.5 718.7L918.0 718.6L918.5 718.5L919.0 718.4L919.5 718.2L920.0 717.9L920.5 718.2L921.0 717.1L921.5 717.4L922.0 717.4L922.5 717.0L923.0 717.3L923.5 715.9L924.0 716.4L924.5 716.9L925.0 715.9L925.5 716.0L926.0 715.8L926.5 714.9L927.0 715.4L927.5 715.8L928.0 715.5L928.5 716.3L929.0 715.0L929.5 713.7L930.0 713.3L930.5 713.0L931.0 714.6L931.5 715.8L932.0 716.2L932.5 716.3L933.0 715.9L933.5 715.1L934.0 716.5L934.5 717.1L935.0 717.8L935.5 718.6L936.0 720.6L936.5 719.5L937.0 720.5L937.5 719.3L938.0 718.8L938.5 719.2L939.0 718.1L939.5 717.4L940.0 716.2L940.5 715.6L941.0 716.8L941.5 716.9L942.0 716.9L942.5 715.9L943.0 716.8L943.5 717.1L944.0 717.7L944.5 718.2L945.0 717.2L945.5 716.2L946.0 716.3L946.5 717.0L947.0 717.2L947.5 717.2L948.0 717.2L948.5 716.1L949.0 716.2L949.5 716.6L950.0 716.1L950.5 716.8L951.0 717.8L951.5 718.2L952.0 718.1L952.5 718.5L953.0 718.6L953.5 718.0L954.0 717.2L954.5 716.5L955.0 716.6L955.5 716.2L956.0 716.6L956.5 716.2L957.0 717.4L957.5 716.5L958.0 717.5L958.5 716.5L959.0 716.8L959.5 716.3L960.0 715.8L960.5 715.8L961.0 716.1L961.5 716.8L962.0 716.6L962.5 716.2L963.0 717.7L963.5 718.2L964.0 718.0L964.5 718.3L965.0 717.6L965.5 717.0L966.0 717.3L966.5 717.0L967.0 716.8L967.5 716.5L968.0 717.0L968.5 716.4L969.0 718.1L969.5 717.8L970.0 717.2L970.5 717.2L971.0 718.6L971.5 718.8L972.0 720.0L972.5 719.3L973.0 717.5L973.5 717.4L974.0 716.5L974.5 717.3L975.0 716.7L975.5 716.5L976.0 716.1L976.5 716.2L977.0 716.2L977.5 717.5L978.0 717.7L978.5 717.3L979.0 716.6L979.5 716.3L980.0 716.5L980.5 716.2L981.0 716.6L981.5 717.1L982.0 716.3L982.5 717.5L983.0 716.7L983.5 717.3L984.0 718.2L984.5 718.6L985.0 718.2L985.5 719.1L986.0 720.1L986.5 719.5L987.0 718.8L987.5 718.5L988.0 717.3L988.5 717.2L989.0 718.0L989.5 719.2L990.0 718.0L990.5 718.4L991.0 718.2L991.5 716.3L992.0 715.7L992.5 715.5L993.0 716.1L993.5 715.6L994.0 716.1L994.5 714.7L995.0 716.2L995.5 716.6L996.0 715.9L996.5 716.4L997.0 715.6L997.5 715.5L998.0 714.9L998.5 716.5L999.0 716.0L999.5 717.8L1000.0 719.1L1000.5 719.4L1001.0 719.6L1001.5 719.9L1002.0 721.3L1002.5 720.4L1003.0 720.2L1003.5 718.4L1004.0 717.2L1004.5 716.8L1005.0 717.8L1005.5 716.6L1006.0 716.3L1006.5 715.9L1007.0 715.1L1007.5 715.4L1008.0 715.0L1008.5 715.4L1009.0 715.6L1009.5 715.4L1010.0 714.9L1010.5 714.8L1011.0 714.8L1011.5 715.1L1012.0 715.2L1012.5 715.4L1013.0 714.3L1013.5 715.0L1014.0 715.4L1014.5 714.2L1015.0 715.4L1015.5 715.8L1016.0 716.1L1016.5 716.0L1017.0 716.2L1017.5 717.9L1018.0 717.6L1018.5 717.5L1019.0 717.0L1019.5 717.0L1020.0 717.2L1020.5 717.5L1021.0 718.3L1021.5 718.0L1022.0 719.0L1022.5 719.4L1023.0 719.8L1023.5 719.5L1024.0 719.5L1024.5 720.2L1025.0 719.4L1025.5 717.9L1026.0 718.4L1026.5 717.4L1027.0 717.5L1027.5 717.5L1028.0 717.4L1028.5 717.2L1029.0 717.3L1029.5 716.9L1030.0 715.9L1030.5 714.8L1031.0 714.9L1031.5 714.4L1032.0 715.4L1032.5 715.5L1033.0 715.3L1033.5 716.1L1034.0 717.0L1034.5 717.0L1035.0 717.1L1035.5 717.8L1036.0 718.1L1036.5 718.6L1037.0 719.2L1037.5 719.9L1038.0 720.7L1038.5 719.2L1039.0 719.6L1039.5 718.1L1040.0 718.1L1040.5 717.4L1041.0 718.4L1041.5 717.7L1042.0 718.1L1042.5 717.3L1043.0 717.7L1043.5 717.7L1044.0 717.9L1044.5 719.1L1045.0 719.3L1045.5 719.7L1046.0 719.3L1046.5 718.6L1047.0 718.7L1047.5 716.5L1048.0 716.6L1048.5 715.6L1049.0 716.5L1049.5 715.6L1050.0 716.9L1050.5 716.1L1051.0 716.5L1051.5 716.2L1052.0 716.4L1052.5 717.6L1053.0 717.3L1053.5 717.2L1054.0 717.8L1054.5 717.7L1055.0 715.8L1055.5 714.9L1056.0 714.9L1056.5 715.5L1057.0 714.5L1057.5 716.3L1058.0 716.4L1058.5 716.3L1059.0 717.0L1059.5 718.2L1060.0 719.0L1060.5 719.5L1061.0 719.2L1061.5 721.3L1062.0 720.6L1062.5 720.8L1063.0 720.0L1063.5 718.5L1064.0 718.6L1064.5 718.0L1065.0 719.2L1065.5 720.6L1066.0 719.8L1066.5 720.3L1067.0 719.7L1067.5 718.9L1068.0 718.8L1068.5 718.6L1069.0 718.9L1069.5 719.6L1070.0 719.4L1070.5 720.0L1071.0 718.5L1071.5 719.0L1072.0 719.0L1072.5 719.1L1073.0 718.0L1073.5 717.5L1074.0 717.0L1074.5 717.1L1075.0 716.2L1075.5 717.2L1076.0 715.8L1076.5 715.4L1077.0 714.7L1077.5 714.9L1078.0 713.9L1078.5 714.2L1079.0 714.7L1079.5 715.5L1080.0 715.1L1080.5 714.9L1081.0 714.9L1081.5 716.0L1082.0 715.9L1082.5 716.2L1083.0 716.1L1083.5 716.6L1084.0 716.6L1084.5 716.4L1085.0 718.6L1085.5 718.3L1086.0 719.3L1086.5 719.2L1087.0 717.9L1087.5 718.0L1088.0 716.4L1088.5 716.9L1089.0 715.6L1089.5 715.1L1090.0 714.4L1090.5 713.0L1091.0 713.0L1091.0 734.3L1090.5 733.8L1090.0 734.5L1089.5 733.5L1089.0 733.4L1088.5 733.6L1088.0 732.1L1087.5 732.9L1087.0 731.4L1086.5 732.2L1086.0 732.0L1085.5 730.9L1085.0 731.7L1084.5 733.0L1084.0 734.4L1083.5 733.2L1083.0 733.4L1082.5 733.8L1082.0 734.4L1081.5 734.3L1081.0 733.6L1080.5 733.5L1080.0 734.4L1079.5 733.2L1079.0 734.8L1078.5 734.7L1078.0 734.5L1077.5 734.2L1077.0 733.6L1076.5 733.8L1076.0 733.2L1075.5 733.2L1075.0 733.6L1074.5 733.2L1074.0 733.0L1073.5 733.6L1073.0 733.0L1072.5 731.4L1072.0 731.2L1071.5 731.2L1071.0 730.8L1070.5 731.0L1070.0 731.2L1069.5 730.4L1069.0 731.6L1068.5 732.0L1068.0 733.1L1067.5 732.7L1067.0 731.7L1066.5 731.6L1066.0 731.8L1065.5 731.5L1065.0 731.8L1064.5 733.4L1064.0 733.7L1063.5 732.1L1063.0 731.9L1062.5 730.6L1062.0 729.8L1061.5 730.1L1061.0 731.3L1060.5 732.3L1060.0 732.2L1059.5 733.0L1059.0 732.7L1058.5 732.3L1058.0 733.1L1057.5 732.8L1057.0 733.9L1056.5 734.3L1056.0 733.5L1055.5 733.4L1055.0 731.5L1054.5 731.0L1054.0 730.3L1053.5 731.2L1053.0 732.4L1052.5 731.8L1052.0 733.2L1051.5 732.7L1051.0 733.1L1050.5 732.8L1050.0 732.7L1049.5 734.1L1049.0 733.3L1048.5 734.2L1048.0 733.3L1047.5 732.6L1047.0 731.5L1046.5 731.1L1046.0 729.7L1045.5 730.3L1045.0 731.7L1044.5 732.1L1044.0 732.9L1043.5 732.9L1043.0 732.5L1042.5 734.0L1042.0 733.2L1041.5 733.6L1041.0 734.6L1040.5 734.3L1040.0 733.0L1039.5 733.1L1039.0 733.0L1038.5 732.2L1038.0 730.8L1037.5 730.9L1037.0 731.5L1036.5 732.3L1036.0 732.9L1035.5 732.3L1035.0 733.0L1034.5 732.6L1034.0 732.8L1033.5 732.9L1033.0 733.9L1032.5 734.2L1032.0 735.3L1031.5 733.9L1031.0 734.8L1030.5 734.2L1030.0 734.2L1029.5 732.8L1029.0 733.3L1028.5 733.9L1028.0 733.3L1027.5 732.8L1027.0 733.2L1026.5 733.0L1026.0 733.8L1025.5 732.1L1025.0 731.5L1024.5 731.4L1024.0 731.8L1023.5 731.4L1023.0 731.3L1022.5 731.5L1022.0 732.1L1021.5 732.4L1021.0 734.1L1020.5 734.8L1020.0 734.3L1019.5 733.2L1019.0 733.0L1018.5 732.6L1018.0 731.9L1017.5 732.4L1017.0 732.2L1016.5 733.2L1016.0 733.0L1015.5 733.2L1015.0 733.2L1014.5 734.0L1014.0 734.1L1013.5 734.5L1013.0 733.8L1012.5 734.4L1012.0 735.0L1011.5 734.1L1011.0 735.0L1010.5 734.5L1010.0 735.2L1009.5 735.8L1009.0 735.1L1008.5 734.4L1008.0 734.3L1007.5 735.5L1007.0 734.4L1006.5 735.1L1006.0 734.6L1005.5 733.3L1005.0 734.1L1004.5 733.8L1004.0 732.9L1003.5 732.0L1003.0 731.6L1002.5 730.2L1002.0 730.4L1001.5 730.8L1001.0 731.9L1000.5 731.8L1000.0 731.9L999.5 732.9L999.0 732.9L998.5 734.2L998.0 734.5L997.5 733.3L997.0 733.9L996.5 732.5L996.0 732.5L995.5 733.1L995.0 733.3L994.5 733.3L994.0 734.4L993.5 733.9L993.0 733.5L992.5 734.5L992.0 734.6L991.5 734.3L991.0 733.7L990.5 731.6L990.0 732.4L989.5 732.8L989.0 732.0L988.5 732.3L988.0 733.2L987.5 732.2L987.0 732.0L986.5 730.3L986.0 731.1L985.5 730.5L985.0 732.2L984.5 732.6L984.0 733.3L983.5 733.2L983.0 733.3L982.5 734.3L982.0 734.0L981.5 733.9L981.0 734.6L980.5 734.5L980.0 734.3L979.5 733.7L979.0 734.0L978.5 732.5L978.0 732.1L977.5 732.0L977.0 733.3L976.5 734.1L976.0 734.0L975.5 734.2L975.0 733.8L974.5 732.9L974.0 733.5L973.5 733.1L973.0 732.6L972.5 731.9L972.0 730.4L971.5 730.8L971.0 732.6L970.5 732.6L970.0 732.3L969.5 733.3L969.0 732.5L968.5 732.6L968.0 732.3L967.5 732.6L967.0 733.0L966.5 732.9L966.0 732.3L965.5 732.9L965.0 731.5L964.5 731.6L964.0 730.5L963.5 731.1L963.0 731.9L962.5 732.5L962.0 733.7L961.5 733.8L961.0 733.2L960.5 733.4L960.0 733.1L959.5 732.6L959.0 733.4L958.5 731.7L958.0 732.6L957.5 732.1L957.0 731.7L956.5 732.5L956.0 732.3L955.5 732.3L955.0 731.7L954.5 732.6L954.0 731.5L953.5 731.3L953.0 731.6L952.5 730.7L952.0 731.3L951.5 731.6L951.0 731.9L950.5 733.0L950.0 733.9L949.5 732.9L949.0 733.4L948.5 733.5L948.0 732.4L947.5 733.7L947.0 734.0L946.5 733.2L946.0 734.1L945.5 733.0L945.0 732.7L944.5 732.6L944.0 732.2L943.5 733.0L943.0 732.9L942.5 734.5L942.0 734.4L941.5 734.8L941.0 735.3L940.5 735.2L940.0 734.6L939.5 734.3L939.0 733.3L938.5 731.8L938.0 729.9L937.5 730.3L937.0 730.6L936.5 730.2L936.0 730.6L935.5 729.6L935.0 732.0L934.5 733.3L934.0 734.1L933.5 732.9L933.0 733.6L932.5 732.2L932.0 731.7L931.5 732.9L931.0 734.2L930.5 736.0L930.0 736.5L929.5 736.3L929.0 734.0L928.5 733.7L928.0 732.3L927.5 733.1L927.0 732.9L926.5 733.4L926.0 733.6L925.5 734.4L925.0 734.3L924.5 733.2L924.0 733.1L923.5 732.9L923.0 732.2L922.5 731.7L922.0 732.7L921.5 731.9L921.0 732.5L920.5 733.2L920.0 732.5L919.5 732.2L919.0 731.1L918.5 730.9L918.0 730.8L917.5 730.1L917.0 730.4L916.5 729.8L916.0 730.6L915.5 729.2L915.0 730.4L914.5 728.9L914.0 729.0L913.5 729.6L913.0 730.7L912.5 731.3L912.0 732.6L911.5 732.8L911.0 732.1L910.5 730.2L910.0 730.3L909.5 730.1L909.0 731.1L908.5 730.6L908.0 730.5L907.5 731.8L907.0 732.3L906.5 732.5L906.0 733.2L905.5 732.5L905.0 733.4L904.5 734.1L904.0 735.0L903.5 733.9L903.0 734.0L902.5 733.2L902.0 733.2L901.5 733.2L901.0 732.9L900.5 733.2L900.0 734.7L899.5 733.9L899.0 734.1L898.5 734.3L898.0 734.1L897.5 734.2L897.0 733.9L896.5 733.7L896.0 734.0L895.5 734.1L895.0 733.8L894.5 732.6L894.0 733.7L893.5 733.0L893.0 733.8L892.5 733.3L892.0 733.4L891.5 733.4L891.0 733.1L890.5 734.0L890.0 734.9L889.5 733.7L889.0 734.3L888.5 735.5L888.0 736.0L887.5 735.1L887.0 734.7L886.5 735.7L886.0 735.9L885.5 735.8L885.0 733.9L884.5 733.9L884.0 734.2L883.5 733.1L883.0 733.5L882.5 734.2L882.0 734.2L881.5 734.7L881.0 733.7L880.5 733.8L880.0 733.5L879.5 734.3L879.0 733.7L878.5 734.1L878.0 734.1L877.5 734.6L877.0 732.5L876.5 731.7L876.0 732.4L875.5 731.9L875.0 733.8L874.5 733.2L874.0 735.0L873.5 734.3L873.0 732.6L872.5 730.8L872.0 730.2L871.5 731.2L871.0 730.1L870.5 730.2L870.0 730.3L869.5 730.2L869.0 731.3L868.5 730.9L868.0 731.9L867.5 731.0L867.0 731.6L866.5 731.2L866.0 732.2L865.5 732.2L865.0 732.5L864.5 731.8L864.0 731.3L863.5 731.0L863.0 731.3L862.5 730.8L862.0 730.8L861.5 731.4L861.0 731.8L860.5 732.5L860.0 732.0L859.5 732.6L859.0 732.6L858.5 730.7L858.0 731.6L857.5 732.3L857.0 732.2L856.5 732.4L856.0 733.6L855.5 732.1L855.0 732.5L854.5 730.6L854.0 730.4L853.5 730.9L853.0 730.9L852.5 731.1L852.0 730.7L851.5 731.1L851.0 731.2L850.5 732.3L850.0 732.3L849.5 732.4L849.0 731.7L848.5 731.5L848.0 730.4L847.5 732.0L847.0 732.3L846.5 733.2L846.0 733.8L845.5 733.6L845.0 733.4L844.5 733.1L844.0 731.6L843.5 731.5L843.0 731.5L842.5 732.0L842.0 732.5L841.5 731.1L841.0 732.3L840.5 731.1L840.0 731.4L839.5 731.8L839.0 733.4L838.5 733.3L838.0 733.5L837.5 734.3L837.0 734.0L836.5 734.3L836.0 733.7L835.5 733.1L835.0 732.6L834.5 733.5L834.0 732.7L833.5 732.8L833.0 732.9L832.5 732.3L832.0 730.9L831.5 731.3L831.0 731.7L830.5 732.4L830.0 733.1L829.5 732.6L829.0 732.6L828.5 732.0L828.0 731.8L827.5 730.9L827.0 731.4L826.5 732.0L826.0 732.1L825.5 732.0L825.0 732.7L824.5 733.0L824.0 731.8L823.5 732.6L823.0 732.6L822.5 732.4L822.0 733.8L821.5 733.2L821.0 734.1L820.5 734.4L820.0 733.4L819.5 734.5L819.0 734.5L818.5 734.4L818.0 735.4L817.5 735.2L817.0 733.8L816.5 732.6L816.0 732.6L815.5 733.2L815.0 732.8L814.5 731.8L814.0 732.8L813.5 732.8L813.0 732.8L812.5 732.7L812.0 733.1L811.5 732.4L811.0 733.2L810.5 733.2L810.0 732.2L809.5 732.7L809.0 732.3L808.5 731.8L808.0 730.7L807.5 731.2L807.0 731.9L806.5 731.6L806.0 731.3L805.5 731.5L805.0 731.6L804.5 731.6L804.0 732.5L803.5 733.1L803.0 733.2L802.5 732.7L802.0 732.4L801.5 732.0L801.0 731.9L800.5 731.7L800.0 732.7L799.5 732.7L799.0 732.1L798.5 731.3L798.0 732.6L797.5 731.9L797.0 732.4L796.5 733.4L796.0 732.7L795.5 731.9L795.0 731.6L794.5 731.6L794.0 732.2L793.5 732.1L793.0 733.3L792.5 733.4L792.0 733.7L791.5 732.9L791.0 731.9L790.5 732.0L790.0 731.5L789.5 732.5L789.0 732.0L788.5 732.5L788.0 732.6L787.5 732.7L787.0 734.8L786.5 734.4L786.0 735.4L785.5 735.1L785.0 735.6L784.5 735.0L784.0 736.1L783.5 736.2L783.0 735.1L782.5 735.3L782.0 735.0L781.5 735.4L781.0 734.5L780.5 734.5L780.0 734.9L779.5 734.0L779.0 734.5L778.5 735.0L778.0 734.2L777.5 734.9L777.0 733.8L776.5 734.5L776.0 733.7L775.5 734.2L775.0 734.8L774.5 733.9L774.0 734.7L773.5 734.9L773.0 735.1L772.5 734.0L772.0 734.7L771.5 734.8L771.0 733.4L770.5 733.2L770.0 733.3L769.5 733.4L769.0 732.3L768.5 732.1L768.0 732.6L767.5 732.5L767.0 732.5L766.5 733.8L766.0 734.4L765.5 734.2L765.0 733.3L764.5 732.5L764.0 732.8L763.5 733.4L763.0 733.4L762.5 734.0L762.0 734.1L761.5 734.8L761.0 734.3L760.5 733.6L760.0 734.7L759.5 734.3L759.0 733.5L758.5 733.2L758.0 733.7L757.5 732.8L757.0 732.3L756.5 732.9L756.0 732.8L755.5 733.0L755.0 733.3L754.5 733.4L754.0 733.4L753.5 732.8L753.0 731.5L752.5 731.1L752.0 731.7L751.5 732.0L751.0 733.3L750.5 734.4L750.0 734.6L749.5 733.7L749.0 733.8L748.5 733.6L748.0 732.7L747.5 733.2L747.0 732.3L746.5 733.3L746.0 733.2L745.5 732.7L745.0 732.1L744.5 732.0L744.0 732.6L743.5 732.0L743.0 731.9L742.5 732.2L742.0 732.3L741.5 732.9L741.0 732.7L740.5 733.2L740.0 732.9L739.5 732.9L739.0 732.3L738.5 731.1L738.0 731.5L737.5 731.5L737.0 732.8L736.5 734.1L736.0 735.2L735.5 734.9L735.0 735.6L734.5 735.3L734.0 735.4L733.5 736.0L733.0 735.1L732.5 735.6L732.0 735.8L731.5 737.1L731.0 736.0L730.5 735.9L730.0 736.6L729.5 735.8L729.0 736.3L728.5 737.3L728.0 737.4L727.5 736.2L727.0 734.6L726.5 733.8L726.0 732.5L725.5 733.5L725.0 733.3L724.5 732.1L724.0 732.1L723.5 731.0L723.0 730.8L722.5 730.5L722.0 731.6L721.5 731.3L721.0 731.1L720.5 730.2L720.0 729.8L719.5 730.9L719.0 732.4L718.5 731.9L718.0 733.1L717.5 733.9L717.0 733.3L716.5 733.4L716.0 733.1L715.5 733.3L715.0 734.8L714.5 735.9L714.0 736.5L713.5 735.3L713.0 734.2L712.5 734.2L712.0 733.1L711.5 731.8L711.0 730.7L710.5 731.2L710.0 729.3L709.5 729.3L709.0 730.3L708.5 730.2L708.0 730.6L707.5 730.1L707.0 729.9L706.5 729.3L706.0 729.0L705.5 728.8L705.0 730.1L704.5 730.6L704.0 731.7L703.5 731.6L703.0 732.2L702.5 731.9L702.0 731.3L701.5 732.1L701.0 732.3L700.5 733.0L700.0 733.9L699.5 733.6L699.0 733.0L698.5 730.9L698.0 730.8L697.5 731.3L697.0 732.3L696.5 732.3L696.0 733.1L695.5 731.9L695.0 732.1L694.5 730.6L694.0 731.2L693.5 730.6L693.0 731.5L692.5 730.9L692.0 731.3L691.5 730.9L691.0 730.3L690.5 730.4L690.0 731.2L689.5 731.0L689.0 731.2L688.5 731.8L688.0 733.0L687.5 732.3L687.0 731.6L686.5 730.5L686.0 730.3L685.5 730.7L685.0 732.0L684.5 732.9L684.0 731.8L683.5 731.8L683.0 731.9L682.5 731.5L682.0 730.7L681.5 730.6L681.0 730.5L680.5 731.4L680.0 731.8L679.5 731.6L679.0 730.8L678.5 732.4L678.0 731.4L677.5 730.9L677.0 731.2L676.5 732.5L676.0 732.3L675.5 732.1L675.0 733.5L674.5 733.0L674.0 733.3L673.5 732.8L673.0 733.0L672.5 731.3L672.0 732.2L671.5 731.4L671.0 733.2L670.5 733.7L670.0 732.4L669.5 733.2L669.0 731.3L668.5 731.3L668.0 731.3L667.5 731.4L667.0 730.7L666.5 731.3L666.0 732.2L665.5 731.9L665.0 731.3L664.5 730.0L664.0 730.8L663.5 730.2L663.0 731.5L662.5 731.1L662.0 732.2L661.5 732.3L661.0 733.1L660.5 732.1L660.0 732.4L659.5 732.9L659.0 733.6L658.5 733.8L658.0 733.9L657.5 734.2L657.0 735.8L656.5 736.5L656.0 736.1L655.5 736.3L655.0 736.2L654.5 735.9L654.0 736.3L653.5 735.2L653.0 734.4L652.5 733.0L652.0 732.9L651.5 731.7L651.0 733.3L650.5 732.8L650.0 732.7L649.5 733.1L649.0 731.9L648.5 730.9L648.0 730.1L647.5 731.2L647.0 731.0L646.5 729.9L646.0 731.0L645.5 730.4L645.0 732.8L644.5 733.2L644.0 734.0L643.5 734.9L643.0 734.5L642.5 735.5L642.0 736.1L641.5 735.7L641.0 735.4L640.5 736.0L640.0 735.8L639.5 734.8L639.0 735.5L638.5 735.0L638.0 734.3L637.5 734.3L637.0 735.1L636.5 734.2L636.0 733.4L635.5 733.7L635.0 732.6L634.5 732.9L634.0 731.2L633.5 731.5L633.0 731.4L632.5 732.3L632.0 733.1L631.5 732.1L631.0 732.5L630.5 732.1L630.0 733.0L629.5 732.0L629.0 731.7L628.5 731.4L628.0 731.8L627.5 730.8L627.0 731.9L626.5 731.3L626.0 731.7L625.5 732.3L625.0 732.6L624.5 731.6L624.0 732.4L623.5 731.9L623.0 731.7L622.5 731.8L622.0 730.9L621.5 730.8L621.0 729.8L620.5 729.5L620.0 729.8L619.5 729.2L619.0 730.9L618.5 731.0L618.0 731.3L617.5 731.9L617.0 731.2L616.5 730.3L616.0 730.0L615.5 730.6L615.0 731.6L614.5 733.1L614.0 733.4L613.5 732.7L613.0 732.2L612.5 731.7L612.0 732.6L611.5 732.7L611.0 732.6L610.5 733.1L610.0 732.8L609.5 732.7L609.0 731.2L608.5 731.3L608.0 730.6L607.5 730.5L607.0 730.4L606.5 729.3L606.0 729.4L605.5 730.7L605.0 731.7L604.5 733.1L604.0 733.3L603.5 733.2L603.0 732.8L602.5 732.7L602.0 733.1L601.5 732.9L601.0 734.8L600.5 736.2L600.0 735.4L599.5 735.9L599.0 735.7L598.5 735.8L598.0 735.1L597.5 734.6L597.0 733.7L596.5 732.8L596.0 733.2L595.5 732.4L595.0 733.6L594.5 734.0L594.0 733.3L593.5 733.7L593.0 735.2L592.5 735.7L592.0 735.7L591.5 735.2L591.0 734.9L590.5 733.9L590.0 733.9L589.5 732.4L589.0 732.3L588.5 732.2L588.0 731.1L587.5 730.9L587.0 730.8L586.5 730.2L586.0 730.8L585.5 730.1L585.0 732.0L584.5 732.0L584.0 733.2L583.5 733.3L583.0 732.3L582.5 731.1L582.0 731.5L581.5 730.8L581.0 730.3L580.5 730.2L580.0 730.6L579.5 729.3L579.0 730.1L578.5 730.5L578.0 730.3L577.5 731.2L577.0 730.8L576.5 731.5L576.0 732.4L575.5 731.6L575.0 731.2L574.5 732.2L574.0 731.3L573.5 732.4L573.0 733.3L572.5 734.6L572.0 734.9L571.5 734.8L571.0 734.3L570.5 734.4L570.0 732.8L569.5 733.2L569.0 734.3L568.5 734.2L568.0 733.1L567.5 733.9L567.0 732.7L566.5 732.5L566.0 731.0L565.5 730.5L565.0 730.7L564.5 728.7L564.0 729.4L563.5 729.7L563.0 731.1L562.5 732.1L562.0 733.4L561.5 733.5L561.0 734.1L560.5 735.0L560.0 735.8L559.5 734.7L559.0 735.0L558.5 734.4L558.0 735.5L557.5 734.3L557.0 734.8L556.5 733.8L556.0 733.9L555.5 734.3L555.0 734.4L554.5 734.8L554.0 734.4L553.5 735.1L553.0 736.1L552.5 736.3L552.0 735.4L551.5 735.2L551.0 735.0L550.5 734.5L550.0 733.5L549.5 732.8L549.0 731.8L548.5 732.2L548.0 732.1L547.5 730.2L547.0 729.5L546.5 729.2L546.0 728.3L545.5 728.4L545.0 728.3L544.5 728.3L544.0 729.8L543.5 730.2L543.0 730.2L542.5 731.5L542.0 732.8L541.5 731.8L541.0 732.1L540.5 733.1L540.0 731.8L539.5 732.0L539.0 732.8L538.5 732.9L538.0 733.4L537.5 732.8L537.0 733.8L536.5 733.9L536.0 733.6L535.5 733.9L535.0 733.4L534.5 732.2L534.0 732.9L533.5 731.5L533.0 732.7L532.5 732.9L532.0 732.6L531.5 733.5L531.0 732.9L530.5 732.2L530.0 732.2L529.5 733.2L529.0 733.7L528.5 734.4L528.0 734.3L527.5 734.7L527.0 734.7L526.5 732.7L526.0 732.8L525.5 732.4L525.0 733.9L524.5 733.1L524.0 732.7L523.5 732.9L523.0 733.4L522.5 732.6L522.0 733.3L521.5 733.0L521.0 733.5L520.5 733.3L520.0 733.9L519.5 733.3L519.0 734.1L518.5 732.6L518.0 732.3L517.5 733.4L517.0 734.3L516.5 735.4L516.0 736.3L515.5 735.1L515.0 734.6L514.5 733.7L514.0 732.0L513.5 733.4L513.0 734.1L512.5 735.3L512.0 734.4L511.5 734.5L511.0 733.9L510.5 733.0L510.0 731.3L509.5 730.9L509.0 731.1L508.5 731.4L508.0 731.7L507.5 732.8L507.0 732.4L506.5 734.0L506.0 734.9L505.5 734.7L505.0 735.2L504.5 735.0L504.0 734.7L503.5 735.1L503.0 734.4L502.5 736.0L502.0 735.8L501.5 735.0L501.0 735.3L500.5 735.4L500.0 735.5L499.5 735.5L499.0 735.2L498.5 733.4L498.0 733.8L497.5 732.3L497.0 732.7L496.5 732.4L496.0 732.5L495.5 732.8L495.0 733.2L494.5 732.9L494.0 733.3L493.5 733.9L493.0 734.7L492.5 735.1L492.0 735.2L491.5 734.7L491.0 732.4L490.5 730.7L490.0 730.5L489.5 731.2L489.0 730.9L488.5 731.9L488.0 732.8L487.5 731.7L487.0 729.3L486.5 729.6L486.0 728.4L485.5 729.3L485.0 730.5L484.5 730.8L484.0 730.9L483.5 731.5L483.0 732.2L482.5 733.6L482.0 734.4L481.5 734.6L481.0 735.5L480.5 735.6L480.0 734.8L479.5 735.0L479.0 733.7L478.5 732.1L478.0 732.7L477.5 732.7L477.0 734.3L476.5 734.1L476.0 736.1L475.5 736.2L475.0 736.3L474.5 736.6L474.0 735.3L473.5 735.1L473.0 734.8L472.5 734.5L472.0 733.9L471.5 734.7L471.0 734.8L470.5 735.7L470.0 735.4L469.5 735.0L469.0 734.5L468.5 734.0L468.0 734.1L467.5 733.3L467.0 733.6L466.5 732.5L466.0 732.1L465.5 733.4L465.0 734.2L464.5 734.3L464.0 735.1L463.5 734.4L463.0 734.7L462.5 734.6L462.0 735.9L461.5 735.9L461.0 736.3L460.5 735.5L460.0 736.6L459.5 735.9L459.0 735.5L458.5 735.0L458.0 734.6L457.5 734.3L457.0 734.0L456.5 732.8L456.0 733.4L455.5 733.7L455.0 734.3L454.5 734.8L454.0 734.9L453.5 735.3L453.0 734.1L452.5 733.7L452.0 734.7L451.5 735.0L451.0 733.8L450.5 734.3L450.0 735.0L449.5 734.3L449.0 733.0L448.5 732.6L448.0 733.4L447.5 732.9L447.0 733.9L446.5 733.6L446.0 733.4L445.5 732.2L445.0 733.3L444.5 733.1L444.0 733.8L443.5 733.5L443.0 732.9L442.5 733.0L442.0 732.9L441.5 731.9L441.0 732.7L440.5 733.2L440.0 732.2L439.5 733.6L439.0 733.6L438.5 733.3L438.0 732.8L437.5 733.5L437.0 734.5L436.5 735.2L436.0 734.7L435.5 733.4L435.0 733.9L434.5 732.0L434.0 732.4L433.5 732.8L433.0 733.0L432.5 732.9L432.0 733.0L431.5 733.8L431.0 732.5L430.5 732.1L430.0 731.9L429.5 732.3L429.0 732.2L428.5 732.6L428.0 732.4L427.5 733.1L427.0 731.3L426.5 730.4L426.0 730.7L425.5 729.7L425.0 729.6L424.5 730.5L424.0 731.1L423.5 730.6L423.0 732.0L422.5 733.7L422.0 733.5L421.5 732.8L421.0 733.0L420.5 731.4L420.0 732.1L419.5 731.6L419.0 731.9L418.5 732.0L418.0 731.4L417.5 731.2L417.0 732.0L416.5 731.5L416.0 731.6L415.5 732.2L415.0 731.9L414.5 731.8L414.0 731.8L413.5 730.6L413.0 730.8L412.5 729.9L412.0 729.9L411.5 731.1L411.0 731.2L410.5 731.9L410.0 732.5L409.5 731.8L409.0 733.8L408.5 733.4L408.0 733.0L407.5 734.6L407.0 734.2L406.5 734.3L406.0 734.4L405.5 733.1L405.0 732.2L404.5 732.1L404.0 731.6L403.5 731.6L403.0 731.9L402.5 731.6L402.0 731.7L401.5 733.1L401.0 732.0L400.5 731.5L400.0 731.5L399.5 732.3L399.0 731.9L398.5 732.6L398.0 732.3L397.5 733.0L397.0 732.6L396.5 731.9L396.0 732.3L395.5 732.4L395.0 732.9L394.5 732.5L394.0 733.4L393.5 732.3L393.0 733.1L392.5 733.7L392.0 734.0L391.5 733.3L391.0 733.2L390.5 732.4L390.0 731.9L389.5 731.4L389.0 731.8L388.5 732.5L388.0 732.1L387.5 732.5L387.0 730.6L386.5 730.8L386.0 730.5L385.5 730.8L385.0 729.9L384.5 728.7L384.0 728.4L383.5 729.3L383.0 731.0L382.5 731.1L382.0 731.2L381.5 731.2L381.0 730.1L380.5 729.2L380.0 728.8L379.5 729.9L379.0 728.8L378.5 729.4L378.0 730.0L377.5 729.9L377.0 729.0L376.5 729.9L376.0 729.0L375.5 729.2L375.0 730.1L374.5 730.4L374.0 730.4L373.5 730.9L373.0 732.3L372.5 733.9L372.0 733.7L371.5 734.0L371.0 733.1L370.5 731.6L370.0 731.9L369.5 731.6L369.0 732.6L368.5 732.3L368.0 731.9L367.5 732.8L367.0 731.5L366.5 732.7L366.0 732.0L365.5 732.3L365.0 732.0L364.5 732.3L364.0 731.6L363.5 731.7L363.0 732.1L362.5 732.1L362.0 732.1L361.5 732.4L361.0 732.6L360.5 733.3L360.0 733.1L359.5 733.7L359.0 732.4L358.5 732.0L358.0 732.3L357.5 732.0L357.0 732.5L356.5 732.9L356.0 733.2L355.5 734.5L355.0 734.6L354.5 734.5L354.0 734.7L353.5 735.1L353.0 735.3L352.5 735.3L352.0 736.2L351.5 735.3L351.0 734.4L350.5 733.7L350.0 731.9L349.5 731.8L349.0 731.6L348.5 731.7L348.0 730.9L347.5 730.5L347.0 731.7L346.5 732.1L346.0 730.8L345.5 732.2L345.0 732.3L344.5 733.7L344.0 733.4L343.5 734.3L343.0 735.8L342.5 736.8L342.0 736.6L341.5 736.7L341.0 735.7L340.5 735.9L340.0 733.7L339.5 733.7L339.0 733.8L338.5 733.0L338.0 731.5L337.5 732.8L337.0 732.3L336.5 732.2L336.0 731.9L335.5 732.3L335.0 732.0L334.5 731.5L334.0 732.1L333.5 732.1L333.0 732.3L332.5 733.3L332.0 733.1L331.5 733.6L331.0 734.7L330.5 735.4L330.0 735.4L329.5 735.8L329.0 734.5L328.5 734.9L328.0 734.4L327.5 733.8L327.0 734.6L326.5 735.9L326.0 735.6L325.5 735.5L325.0 734.5L324.5 733.1L324.0 733.5L323.5 734.3L323.0 734.0L322.5 735.1L322.0 735.9L321.5 735.1L321.0 735.0L320.5 735.0L320.0 735.7L319.5 735.4L319.0 733.9L318.5 731.9L318.0 732.3L317.5 730.9L317.0 731.7L316.5 729.9L316.0 730.1L315.5 730.6L315.0 733.3L314.5 734.1L314.0 734.5L313.5 734.8L313.0 735.4L312.5 735.6L312.0 735.2L311.5 736.1L311.0 735.7L310.5 735.2L310.0 735.3L309.5 735.8L309.0 735.1L308.5 734.2L308.0 734.7L307.5 733.0L307.0 733.7L306.5 733.4L306.0 732.7L305.5 732.7L305.0 731.5L304.5 730.3L304.0 730.5L303.5 730.0L303.0 730.6L302.5 730.0L302.0 730.8L301.5 730.7L301.0 729.7L300.5 729.6L300.0 729.4L299.5 729.4L299.0 729.9L298.5 729.9L298.0 730.7L297.5 730.7L297.0 731.2L296.5 730.1L296.0 730.5L295.5 730.6L295.0 731.5L294.5 732.0L294.0 732.8L293.5 733.1L293.0 734.5L292.5 735.0L292.0 734.6L291.5 734.5L291.0 733.6L290.5 733.5L290.0 732.6L289.5 732.5L289.0 732.9L288.5 732.7L288.0 731.6L287.5 730.4L287.0 731.1L286.5 730.1L286.0 730.7L285.5 730.7L285.0 730.2L284.5 731.7L284.0 732.3L283.5 731.8L283.0 730.8L282.5 730.7L282.0 730.5L281.5 730.2L281.0 729.8L280.5 729.9L280.0 730.3L279.5 730.4L279.0 731.5L278.5 732.0L278.0 732.7L277.5 733.2L277.0 732.7L276.5 733.3L276.0 732.8L275.5 733.3L275.0 732.2L274.5 733.3L274.0 733.1L273.5 732.0L273.0 732.9L272.5 732.6L272.0 733.0L271.5 732.3L271.0 731.6L270.5 732.3L270.0 732.1L269.5 731.7L269.0 731.7L268.5 732.6L268.0 732.6L267.5 733.0L267.0 733.4L266.5 733.5L266.0 732.8L265.5 733.6L265.0 733.7L264.5 733.8L264.0 734.8L263.5 734.7L263.0 733.5L262.5 731.5L262.0 732.2L261.5 731.1L261.0 732.7L260.5 732.8L260.0 733.1L259.5 733.6L259.0 733.5L258.5 733.7L258.0 734.2L257.5 733.9L257.0 733.4L256.5 734.3L256.0 733.8L255.5 734.1L255.0 734.9L254.5 733.7L254.0 734.7L253.5 734.2L253.0 733.3L252.5 732.2L252.0 733.3L251.5 732.0L251.0 732.4L250.5 732.9L250.0 732.2L249.5 732.1L249.0 732.9L248.5 733.5L248.0 732.8L247.5 732.6L247.0 731.0L246.5 731.1L246.0 729.4L245.5 730.4L245.0 729.3L244.5 729.9L244.0 729.6L243.5 730.8L243.0 731.4L242.5 731.4L242.0 732.1L241.5 732.1L241.0 732.4L240.5 733.0L240.0 731.8L239.5 731.9L239.0 731.4L238.5 731.3L238.0 730.9L237.5 731.8L237.0 732.0L236.5 732.2L236.0 731.0L235.5 731.8L235.0 732.4L234.5 731.9L234.0 733.4L233.5 733.9L233.0 732.9L232.5 734.6L232.0 733.6L231.5 734.4L231.0 733.4L230.5 733.6L230.0 734.0L229.5 733.9L229.0 735.5L228.5 734.8L228.0 735.6L227.5 735.3L227.0 734.5L226.5 733.3L226.0 732.3L225.5 732.9L225.0 732.2L224.5 732.4L224.0 733.1L223.5 733.1L223.0 732.7L222.5 732.4L222.0 733.0L221.5 732.5L221.0 733.6L220.5 734.3L220.0 733.8L219.5 733.8L219.0 733.2L218.5 731.8L218.0 732.5L217.5 732.3L217.0 733.6L216.5 733.9L216.0 733.6L215.5 733.6L215.0 733.9L214.5 732.6L214.0 732.7L213.5 731.7L213.0 732.5L212.5 732.3L212.0 732.1L211.5 731.4L211.0 730.9L210.5 731.2L210.0 731.0L209.5 731.0L209.0 731.1L208.5 731.7L208.0 732.4L207.5 732.7L207.0 732.2L206.5 731.8L206.0 731.4L205.5 731.1L205.0 733.3L204.5 733.7L204.0 733.1L203.5 734.0L203.0 734.1L202.5 734.3L202.0 733.7L201.5 734.5L201.0 734.4L200.5 733.9L200.0 734.2L199.5 734.7L199.0 734.4L198.5 734.5L198.0 735.8L197.5 734.6L197.0 734.2L196.5 734.1L196.0 734.0L195.5 732.9L195.0 733.1L194.5 731.5L194.0 730.8L193.5 731.2L193.0 731.2L192.5 732.2L192.0 732.4L191.5 731.7L191.0 731.7L190.5 731.6L190.0 730.9L189.5 731.4L189.0 731.7L188.5 731.8L188.0 731.6L187.5 730.3L187.0 731.0L186.5 731.2L186.0 731.2L185.5 730.2L185.0 729.9L184.5 730.0L184.0 730.2L183.5 731.1L183.0 731.1L182.5 731.4L182.0 731.5L181.5 732.9L181.0 732.6L180.5 733.5L180.0 733.6L179.5 732.9L179.0 732.9L178.5 733.5L178.0 732.5L177.5 732.5L177.0 734.1L176.5 733.1L176.0 733.1L175.5 733.4L175.0 733.0L174.5 733.7L174.0 733.5L173.5 733.9L173.0 734.3L172.5 734.3L172.0 735.5L171.5 735.4L171.0 735.3L170.5 734.1L170.0 734.8L169.5 733.7L169.0 734.5L168.5 734.1L168.0 734.2L167.5 734.6L167.0 733.1L166.5 732.2L166.0 732.2L165.5 732.3L165.0 731.7L164.5 731.8L164.0 732.1L163.5 731.2L163.0 732.2L162.5 731.9L162.0 731.9L161.5 732.4L161.0 732.6L160.5 732.0L160.0 733.0L159.5 732.2L159.0 731.1L158.5 731.2L158.0 730.8L157.5 728.8L157.0 727.7L156.5 726.2L156.0 724.8Z" fill="#ff78a8" stroke="#f4c6d6" stroke-opacity="0.45" stroke-width="0.5" />
<rect x="156" y="824.05" width="935" height="1.5" fill="#e99bbb"/>
<defs><linearGradient id="g7" gradientUnits="userSpaceOnUse" x1="0" y1="775" x2="0" y2="846"><stop offset="0" stop-color="#f2c4d4" stop-opacity="0.55"/><stop offset="0.35" stop-color="#ff88b4" stop-opacity="0.95"/><stop offset="0.55" stop-color="#ff78a8"/><stop offset="0.8" stop-color="#ff80ae" stop-opacity="0.95"/><stop offset="1" stop-color="#f2c4d4" stop-opacity="0.6"/></linearGradient></defs>
<path d="M156.0 824.8L156.5 824.8L157.0 809.6L157.5 815.0L158.0 817.6L158.5 819.3L159.0 820.0L159.5 820.8L160.0 821.4L160.5 822.0L161.0 822.0L161.5 822.6L162.0 822.8L162.5 823.1L163.0 823.2L163.5 823.3L164.0 823.6L164.5 815.9L165.0 812.5L165.5 816.9L166.0 818.0L166.5 819.3L167.0 820.6L167.5 821.2L168.0 821.6L168.5 822.2L169.0 822.5L169.5 822.7L170.0 822.8L170.5 823.1L171.0 823.4L171.5 823.4L172.0 821.3L172.5 810.6L173.0 815.2L173.5 817.8L174.0 819.6L174.5 820.1L175.0 820.9L175.5 821.7L176.0 822.1L176.5 822.4L177.0 822.6L177.5 822.7L178.0 823.1L178.5 823.2L179.0 823.5L179.5 823.5L180.0 812.4L180.5 814.0L181.0 816.8L181.5 818.5L182.0 819.8L182.5 820.7L183.0 821.5L183.5 821.9L184.0 822.1L184.5 822.4L185.0 822.6L185.5 823.0L186.0 823.1L186.5 823.4L187.0 823.5L187.5 815.1L188.0 804.3L188.5 812.4L189.0 816.7L189.5 818.7L190.0 819.9L190.5 821.2L191.0 821.5L191.5 821.8L192.0 822.1L192.5 822.5L193.0 822.8L193.5 823.1L194.0 823.2L194.5 823.4L195.0 823.6L195.5 823.7L196.0 823.8L196.5 824.0L197.0 824.0L197.5 824.2L198.0 824.2L198.5 824.3L199.0 824.4L199.5 824.4L200.0 824.4L200.5 824.5L201.0 824.5L201.5 824.5L256.5 824.8L257.0 806.5L257.5 812.5L258.0 816.3L258.5 818.5L259.0 819.6L259.5 820.7L260.0 821.2L260.5 821.8L261.0 822.1L261.5 822.4L262.0 822.8L262.5 823.0L263.0 823.1L263.5 823.4L264.0 823.4L264.5 813.3L265.0 811.4L265.5 816.1L266.0 818.2L266.5 819.7L267.0 820.8L267.5 821.1L268.0 821.9L268.5 822.2L269.0 822.2L269.5 822.5L270.0 823.0L270.5 823.1L271.0 823.3L271.5 823.4L272.0 821.3L272.5 808.9L273.0 813.3L273.5 817.7L274.0 818.9L274.5 819.9L275.0 820.9L275.5 821.7L276.0 821.8L276.5 822.1L277.0 822.4L277.5 822.8L278.0 823.0L278.5 823.2L279.0 823.5L279.5 823.5L280.0 810.5L280.5 812.7L281.0 815.8L281.5 818.0L282.0 819.7L282.5 820.9L283.0 821.5L283.5 821.9L284.0 822.0L284.5 822.6L285.0 822.6L285.5 823.1L286.0 823.2L286.5 823.3L287.0 823.6L287.5 818.1L288.0 809.8L288.5 815.6L289.0 817.5L289.5 819.5L290.0 820.6L290.5 821.3L291.0 821.5L291.5 822.1L292.0 822.2L292.5 822.7L293.0 822.8L293.5 823.1L294.0 823.3L294.5 823.4L295.0 823.5L295.5 823.7L296.0 823.9L296.5 824.0L297.0 824.1L297.5 824.1L298.0 824.2L298.5 824.3L299.0 824.3L299.5 824.4L300.0 824.4L300.5 824.5L301.0 824.5L311.0 824.8L311.5 815.7L312.0 807.9L312.5 813.5L313.0 816.5L313.5 818.7L314.0 819.8L314.5 820.7L315.0 821.6L315.5 822.1L316.0 822.3L316.5 822.6L317.0 822.9L317.5 823.1L318.0 823.2L318.5 823.3L319.0 823.6L319.5 823.8L320.0 823.9L320.5 823.9L321.0 824.0L321.5 824.1L322.0 824.2L322.5 824.3L323.0 824.3L323.5 824.4L324.0 824.4L324.5 824.5L325.0 824.5L325.5 824.5L371.5 824.8L372.0 821.7L372.5 810.1L373.0 815.0L373.5 818.2L374.0 819.7L374.5 820.1L375.0 821.3L375.5 821.3L376.0 822.0L376.5 822.3L377.0 822.5L377.5 822.8L378.0 823.0L378.5 823.1L379.0 823.4L379.5 823.5L380.0 813.0L380.5 813.3L381.0 817.1L381.5 819.1L382.0 820.1L382.5 820.7L383.0 821.5L383.5 821.6L384.0 822.3L384.5 822.4L385.0 822.9L385.5 823.0L386.0 823.1L386.5 823.4L387.0 823.6L387.5 818.6L388.0 811.5L388.5 816.1L389.0 818.5L389.5 819.5L390.0 820.7L390.5 821.2L391.0 821.7L391.5 822.1L392.0 822.2L392.5 822.5L393.0 822.7L393.5 823.1L394.0 823.3L394.5 823.4L395.0 823.7L395.5 808.9L396.0 814.3L396.5 817.3L397.0 819.2L397.5 819.8L398.0 820.8L398.5 821.2L399.0 821.7L399.5 822.2L400.0 822.6L400.5 822.9L401.0 822.8L401.5 823.1L402.0 823.3L402.5 823.5L403.0 814.7L403.5 812.9L404.0 817.0L404.5 818.9L405.0 820.0L405.5 820.4L406.0 821.3L406.5 821.5L407.0 821.9L407.5 822.4L408.0 822.6L408.5 823.0L409.0 823.2L409.5 823.3L410.0 823.6L410.5 821.2L411.0 810.7L411.5 816.1L412.0 818.2L412.5 819.6L413.0 820.1L413.5 820.9L414.0 821.6L414.5 821.7L415.0 822.2L415.5 822.7L416.0 822.9L416.5 823.1L417.0 823.3L417.5 823.4L418.0 823.6L418.5 813.2L419.0 813.3L419.5 817.7L420.0 819.0L420.5 820.3L421.0 820.7L421.5 821.1L422.0 821.8L422.5 822.3L423.0 822.3L423.5 822.6L424.0 822.9L424.5 823.1L425.0 823.3L425.5 823.5L426.0 817.8L426.5 811.6L427.0 815.8L427.5 818.2L428.0 819.8L428.5 820.7L429.0 820.9L429.5 821.8L430.0 821.9L430.5 822.3L431.0 822.8L431.5 822.7L432.0 823.0L432.5 823.3L433.0 823.4L433.5 823.6L434.0 799.5L434.5 809.3L435.0 815.8L435.5 817.4L436.0 819.7L436.5 820.9L437.0 821.5L437.5 821.5L438.0 822.0L438.5 822.5L439.0 822.8L439.5 822.9L440.0 823.3L440.5 823.4L441.0 823.6L441.5 823.7L442.0 823.7L442.5 823.9L443.0 824.0L443.5 824.1L444.0 824.2L444.5 824.3L445.0 824.3L445.5 824.4L446.0 824.4L446.5 824.4L447.0 824.5L447.5 824.5L502.5 824.8L503.0 810.3L503.5 810.6L504.0 815.4L504.5 818.3L505.0 819.6L505.5 820.7L506.0 821.0L506.5 821.7L507.0 822.1L507.5 822.5L508.0 822.7L508.5 823.0L509.0 823.2L509.5 823.2L510.0 823.5L510.5 816.7L511.0 808.9L511.5 815.1L512.0 817.7L512.5 819.3L513.0 820.4L513.5 821.1L514.0 821.4L514.5 821.9L515.0 822.3L515.5 822.7L516.0 822.7L516.5 823.1L517.0 823.1L517.5 823.4L518.0 823.5L518.5 806.5L519.0 811.9L519.5 815.9L520.0 819.0L520.5 820.0L521.0 820.8L521.5 821.2L522.0 821.8L522.5 822.2L523.0 822.6L523.5 822.6L524.0 822.9L524.5 823.1L525.0 823.3L525.5 823.5L526.0 813.5L526.5 809.7L527.0 814.6L527.5 817.7L528.0 819.1L528.5 820.4L529.0 820.9L529.5 821.8L530.0 822.2L530.5 822.5L531.0 822.5L531.5 822.9L532.0 823.0L532.5 823.4L533.0 823.4L533.5 820.6L534.0 807.3L534.5 814.5L535.0 816.8L535.5 819.2L536.0 819.9L536.5 820.8L537.0 821.6L537.5 822.0L538.0 822.1L538.5 822.7L539.0 823.0L539.5 823.1L540.0 823.3L540.5 823.4L541.0 823.6L541.5 823.7L542.0 823.9L542.5 824.0L543.0 824.0L543.5 824.1L544.0 824.2L544.5 824.3L545.0 824.3L545.5 824.4L546.0 824.4L546.5 824.5L547.0 824.5L547.5 824.5L556.0 824.8L556.5 820.4L557.0 803.5L557.5 811.5L558.0 816.0L558.5 818.5L559.0 819.5L559.5 820.7L560.0 821.2L560.5 821.9L561.0 822.1L561.5 822.5L562.0 822.6L562.5 823.0L563.0 823.2L563.5 823.3L564.0 823.5L564.5 823.8L565.0 823.8L565.5 823.9L566.0 824.0L566.5 824.1L567.0 824.2L567.5 824.2L568.0 824.3L568.5 824.4L569.0 824.4L569.5 824.4L570.0 824.5L570.5 824.5L618.0 824.8L618.5 821.8L619.0 811.8L619.5 815.3L620.0 817.3L620.5 819.1L621.0 820.1L621.5 820.8L622.0 821.8L622.5 822.1L623.0 822.1L623.5 822.6L624.0 823.0L624.5 823.1L625.0 823.2L625.5 823.5L626.0 823.6L626.5 811.8L627.0 813.9L627.5 817.4L628.0 819.2L628.5 819.9L629.0 820.7L629.5 821.5L630.0 821.8L630.5 822.0L631.0 822.3L631.5 822.7L632.0 822.9L632.5 823.0L633.0 823.4L633.5 823.6L634.0 819.0L634.5 811.4L635.0 816.4L635.5 817.7L636.0 819.8L636.5 820.1L637.0 820.9L637.5 821.6L638.0 821.9L638.5 822.2L639.0 822.5L639.5 822.8L640.0 823.2L640.5 823.3L641.0 823.4L641.5 823.5L642.0 810.4L642.5 814.1L643.0 817.6L643.5 819.2L644.0 820.0L644.5 820.8L645.0 821.5L645.5 821.8L646.0 822.3L646.5 822.6L647.0 822.8L647.5 822.9L648.0 823.1L648.5 823.4L649.0 823.4L649.5 815.4L650.0 812.2L650.5 817.0L651.0 819.0L651.5 819.5L652.0 820.8L652.5 821.0L653.0 821.7L653.5 821.9L654.0 822.6L654.5 822.7L655.0 823.0L655.5 823.0L656.0 823.2L656.5 823.4L657.0 821.2L657.5 811.2L658.0 815.5L658.5 817.7L659.0 819.8L659.5 820.2L660.0 821.0L660.5 821.8L661.0 821.9L661.5 822.4L662.0 822.6L662.5 822.8L663.0 823.1L663.5 823.3L664.0 823.4L664.5 823.6L665.0 812.3L665.5 814.0L666.0 817.4L666.5 819.2L667.0 820.1L667.5 820.6L668.0 821.5L668.5 821.8L669.0 822.2L669.5 822.4L670.0 822.8L670.5 822.8L671.0 823.1L671.5 823.3L672.0 823.5L672.5 817.8L673.0 811.6L673.5 816.1L674.0 818.1L674.5 819.9L675.0 820.5L675.5 820.8L676.0 821.6L676.5 822.1L677.0 822.3L677.5 822.7L678.0 822.9L678.5 823.1L679.0 823.2L679.5 823.4L680.0 823.6L680.5 799.7L681.0 810.5L681.5 814.6L682.0 817.7L682.5 819.3L683.0 820.6L683.5 821.0L684.0 821.8L684.5 822.1L685.0 822.4L685.5 822.8L686.0 822.9L686.5 823.3L687.0 823.3L687.5 823.6L688.0 823.7L688.5 823.8L689.0 823.8L689.5 824.0L690.0 824.0L690.5 824.1L691.0 824.2L691.5 824.3L692.0 824.4L692.5 824.4L693.0 824.5L693.5 824.5L694.0 824.5L748.5 824.8L749.0 817.9L749.5 810.3L750.0 815.4L750.5 817.1L751.0 819.3L751.5 820.6L752.0 821.0L752.5 821.6L753.0 822.0L753.5 822.3L754.0 822.6L754.5 822.9L755.0 823.1L755.5 823.2L756.0 823.4L756.5 823.6L757.0 808.0L757.5 813.5L758.0 816.2L758.5 819.1L759.0 820.1L759.5 820.7L760.0 821.3L760.5 821.8L761.0 822.3L761.5 822.6L762.0 822.9L762.5 823.0L763.0 823.3L763.5 823.5L764.0 823.4L764.5 813.1L765.0 811.0L765.5 814.8L766.0 818.3L766.5 819.2L767.0 820.2L767.5 821.2L768.0 821.5L768.5 822.0L769.0 822.5L769.5 822.6L770.0 823.0L770.5 823.0L771.0 823.4L771.5 823.5L772.0 820.6L772.5 809.2L773.0 814.7L773.5 816.7L774.0 819.2L774.5 819.8L775.0 820.6L775.5 821.5L776.0 822.1L776.5 822.3L777.0 822.6L777.5 822.8L778.0 822.9L778.5 823.2L779.0 823.5L779.5 823.5L780.0 810.3L780.5 812.6L781.0 816.9L781.5 818.5L782.0 820.1L782.5 820.9L783.0 821.4L783.5 821.6L784.0 821.9L784.5 822.6L785.0 822.7L785.5 822.9L786.0 823.2L786.5 823.4L787.0 823.5L787.5 823.6L788.0 823.8L788.5 823.8L789.0 824.0L789.5 824.0L790.0 824.1L790.5 824.2L791.0 824.3L791.5 824.4L792.0 824.4L792.5 824.4L793.0 824.5L793.5 824.5L802.0 824.8L802.5 815.6L803.0 805.5L803.5 813.4L804.0 816.5L804.5 818.3L805.0 819.9L805.5 821.1L806.0 821.2L806.5 821.9L807.0 822.3L807.5 822.6L808.0 822.7L808.5 823.1L809.0 823.2L809.5 823.4L810.0 823.5L810.5 823.7L811.0 823.8L811.5 824.0L812.0 824.0L812.5 824.1L813.0 824.2L813.5 824.2L814.0 824.3L814.5 824.4L815.0 824.4L815.5 824.4L816.0 824.5L864.0 824.8L864.5 819.0L865.0 811.8L865.5 816.6L866.0 817.7L866.5 819.4L867.0 820.5L867.5 820.9L868.0 821.6L868.5 822.0L869.0 822.5L869.5 822.5L870.0 823.0L870.5 823.2L871.0 823.3L871.5 823.5L872.0 823.5L872.5 809.0L873.0 815.1L873.5 817.1L874.0 818.8L874.5 819.8L875.0 820.7L875.5 821.3L876.0 821.7L876.5 822.0L877.0 822.4L877.5 822.7L878.0 822.9L878.5 823.2L879.0 823.3L879.5 823.6L880.0 815.4L880.5 813.4L881.0 816.7L881.5 819.0L882.0 819.8L882.5 820.9L883.0 821.3L883.5 821.5L884.0 822.2L884.5 822.3L885.0 822.5L885.5 823.0L886.0 823.2L886.5 823.2L887.0 823.4L887.5 821.8L888.0 811.0L888.5 814.7L889.0 818.3L889.5 819.5L890.0 820.2L890.5 821.2L891.0 821.5L891.5 822.1L892.0 822.3L892.5 822.5L893.0 822.9L893.5 823.0L894.0 823.3L894.5 823.5L895.0 823.5L895.5 813.4L896.0 813.6L896.5 816.8L897.0 819.1L897.5 819.8L898.0 821.0L898.5 821.5L899.0 821.8L899.5 822.3L900.0 822.3L900.5 822.6L901.0 823.0L901.5 823.2L902.0 823.3L902.5 823.6L903.0 818.7L903.5 812.7L904.0 816.1L904.5 817.9L905.0 819.2L905.5 820.5L906.0 821.2L906.5 821.6L907.0 822.2L907.5 822.3L908.0 822.6L908.5 822.7L909.0 823.0L909.5 823.2L910.0 823.4L910.5 823.5L911.0 809.8L911.5 814.3L912.0 817.2L912.5 818.9L913.0 820.2L913.5 820.7L914.0 821.3L914.5 821.7L915.0 822.3L915.5 822.7L916.0 822.8L916.5 823.1L917.0 823.1L917.5 823.3L918.0 823.6L918.5 815.2L919.0 813.5L919.5 816.2L920.0 818.1L920.5 820.0L921.0 820.8L921.5 821.0L922.0 821.7L922.5 822.2L923.0 822.5L923.5 822.7L924.0 823.0L924.5 823.0L925.0 823.4L925.5 823.6L926.0 812.8L926.5 781.6L927.0 799.0L927.5 808.1L928.0 812.5L928.5 816.5L929.0 817.3L929.5 819.0L930.0 819.4L930.5 820.6L931.0 820.8L931.5 821.3L932.0 821.8L932.5 822.3L933.0 822.4L933.5 822.8L934.0 822.8L934.5 823.2L935.0 823.2L935.5 823.6L936.0 823.6L936.5 823.7L937.0 823.8L937.5 824.0L938.0 824.1L938.5 824.2L939.0 824.2L939.5 824.3L940.0 824.3L940.5 824.8L995.0 824.8L995.5 810.1L996.0 794.6L996.5 803.8L997.0 810.5L997.5 814.9L998.0 816.5L998.5 818.2L999.0 819.3L999.5 820.2L1000.0 820.5L1000.5 821.2L1001.0 821.7L1001.5 821.9L1002.0 822.0L1002.5 822.5L1003.0 822.7L1003.5 786.8L1004.0 802.4L1004.5 808.8L1005.0 813.4L1005.5 816.6L1006.0 817.7L1006.5 818.9L1007.0 820.0L1007.5 820.4L1008.0 821.2L1008.5 821.1L1009.0 821.7L1009.5 821.9L1010.0 822.3L1010.5 822.5L1011.0 802.1L1011.5 795.6L1012.0 806.3L1012.5 811.2L1013.0 815.6L1013.5 817.2L1014.0 818.7L1014.5 819.2L1015.0 820.5L1015.5 820.7L1016.0 821.3L1016.5 821.7L1017.0 822.1L1017.5 822.1L1018.0 822.4L1018.5 816.5L1019.0 793.3L1019.5 804.7L1020.0 810.8L1020.5 814.6L1021.0 815.9L1021.5 818.5L1022.0 818.9L1022.5 820.0L1023.0 820.6L1023.5 820.7L1024.0 821.2L1024.5 821.6L1025.0 822.2L1025.5 822.2L1026.0 822.7L1026.5 794.5L1027.0 800.9L1027.5 807.6L1028.0 813.2L1028.5 816.1L1029.0 817.7L1029.5 818.5L1030.0 819.9L1030.5 820.1L1031.0 820.8L1031.5 821.3L1032.0 821.7L1032.5 822.1L1033.0 822.1L1033.5 822.5L1034.0 822.9L1034.5 823.1L1035.0 823.2L1035.5 823.4L1036.0 823.5L1036.5 823.8L1037.0 823.7L1037.5 823.9L1038.0 824.0L1038.5 824.1L1039.0 824.2L1039.5 824.2L1040.0 824.3L1040.5 824.4L1041.0 824.8L1049.0 824.8L1049.5 814.0L1050.0 782.7L1050.5 797.0L1051.0 807.0L1051.5 813.0L1052.0 815.2L1052.5 817.4L1053.0 819.3L1053.5 820.1L1054.0 820.5L1054.5 820.9L1055.0 821.6L1055.5 821.8L1056.0 822.1L1056.5 822.5L1057.0 822.7L1057.5 822.9L1058.0 823.3L1058.5 823.3L1059.0 823.5L1059.5 823.6L1060.0 823.8L1060.5 823.9L1061.0 823.9L1061.5 824.0L1062.0 824.2L1062.5 824.2L1063.0 824.3L1063.5 824.3L1064.0 824.8L1091.0 824.8L1091.0 824.8L1063.0 825.1L1062.5 825.1L1062.0 825.2L1061.5 825.2L1061.0 825.3L1060.5 825.4L1060.0 825.4L1059.5 825.5L1059.0 825.6L1058.5 825.6L1058.0 825.7L1057.5 826.0L1057.0 826.0L1056.5 826.1L1056.0 826.5L1055.5 826.7L1055.0 826.9L1054.5 827.2L1054.0 827.4L1053.5 828.2L1053.0 828.9L1052.5 829.6L1052.0 831.2L1051.5 832.8L1051.0 836.8L1050.5 841.8L1050.0 827.5L1049.5 824.8L1040.0 825.1L1039.5 825.1L1039.0 825.1L1038.5 825.2L1038.0 825.2L1037.5 825.3L1037.0 825.3L1036.5 825.5L1036.0 825.5L1035.5 825.7L1035.0 825.8L1034.5 825.8L1034.0 825.9L1033.5 826.1L1033.0 826.3L1032.5 826.5L1032.0 826.8L1031.5 827.2L1031.0 827.3L1030.5 827.8L1030.0 828.1L1029.5 828.7L1029.0 829.7L1028.5 830.1L1028.0 832.3L1027.5 835.2L1027.0 833.1L1026.5 826.0L1026.0 826.1L1025.5 826.2L1025.0 826.5L1024.5 826.6L1024.0 827.1L1023.5 827.1L1023.0 827.5L1022.5 828.1L1022.0 828.8L1021.5 828.8L1021.0 829.6L1020.5 830.8L1020.0 832.7L1019.5 836.8L1019.0 827.0L1018.5 826.0L1018.0 826.1L1017.5 826.3L1017.0 826.5L1016.5 826.7L1016.0 826.9L1015.5 827.5L1015.0 827.9L1014.5 828.0L1014.0 828.8L1013.5 829.9L1013.0 831.0L1012.5 831.8L1012.0 835.3L1011.5 831.2L1011.0 825.9L1010.5 826.1L1010.0 826.3L1009.5 826.6L1009.0 826.7L1008.5 826.8L1008.0 827.1L1007.5 827.6L1007.0 828.2L1006.5 828.8L1006.0 829.3L1005.5 830.2L1005.0 831.7L1004.5 833.5L1004.0 835.3L1003.5 826.0L1003.0 826.0L1002.5 826.3L1002.0 826.4L1001.5 826.7L1001.0 826.9L1000.5 827.2L1000.0 827.6L999.5 827.7L999.0 828.4L998.5 828.7L998.0 829.8L997.5 830.7L997.0 832.5L996.5 836.8L996.0 829.0L995.5 824.8L939.5 825.1L939.0 825.1L938.5 825.2L938.0 825.2L937.5 825.2L937.0 825.3L936.5 825.4L936.0 825.5L935.5 825.6L935.0 825.6L934.5 825.9L934.0 825.9L933.5 826.1L933.0 826.3L932.5 826.4L932.0 826.6L931.5 827.0L931.0 827.0L930.5 827.8L930.0 827.8L929.5 828.5L929.0 829.4L928.5 830.8L928.0 832.8L927.5 837.2L927.0 842.2L926.5 828.7L926.0 825.6L925.5 825.6L925.0 825.8L924.5 826.0L924.0 826.2L923.5 826.2L923.0 826.4L922.5 826.8L922.0 827.2L921.5 827.5L921.0 827.8L920.5 828.8L920.0 829.5L919.5 831.5L919.0 829.4L918.5 825.6L918.0 825.6L917.5 825.8L917.0 825.9L916.5 826.0L916.0 826.2L915.5 826.5L915.0 826.6L914.5 827.0L914.0 827.4L913.5 827.7L913.0 828.0L912.5 829.0L912.0 830.3L911.5 831.5L911.0 825.5L910.5 825.6L910.0 825.8L909.5 825.9L909.0 826.0L908.5 826.2L908.0 826.4L907.5 826.5L907.0 826.8L906.5 827.1L906.0 827.7L905.5 828.1L905.0 828.7L904.5 830.2L904.0 832.7L903.5 827.5L903.0 825.6L902.5 825.7L902.0 825.8L901.5 826.0L901.0 826.1L900.5 826.2L900.0 826.5L899.5 826.6L899.0 826.8L898.5 827.2L898.0 828.0L897.5 828.5L897.0 829.4L896.5 831.1L896.0 830.2L895.5 825.5L895.0 825.6L894.5 825.7L894.0 825.8L893.5 826.1L893.0 826.2L892.5 826.4L892.0 826.6L891.5 826.9L891.0 827.3L890.5 827.6L890.0 828.2L889.5 829.4L889.0 830.6L888.5 832.4L888.0 826.3L887.5 825.5L887.0 825.7L886.5 825.7L886.0 826.0L885.5 826.1L885.0 826.3L884.5 826.5L884.0 826.7L883.5 827.0L883.0 827.3L882.5 828.1L882.0 828.7L881.5 829.8L881.0 832.2L880.5 828.8L880.0 825.5L879.5 825.6L879.0 825.7L878.5 825.9L878.0 826.1L877.5 826.2L877.0 826.5L876.5 826.6L876.0 827.0L875.5 827.3L875.0 827.8L874.5 828.3L874.0 829.6L873.5 830.5L873.0 831.4L872.5 825.5L872.0 825.6L871.5 825.7L871.0 825.8L870.5 825.9L870.0 826.2L869.5 826.3L869.0 826.6L868.5 826.7L868.0 827.0L867.5 827.5L867.0 828.2L866.5 828.7L866.0 830.2L865.5 832.6L865.0 827.6L864.5 824.8L814.0 825.1L813.5 825.1L813.0 825.2L812.5 825.2L812.0 825.3L811.5 825.3L811.0 825.4L810.5 825.5L810.0 825.6L809.5 825.7L809.0 825.8L808.5 826.0L808.0 826.1L807.5 826.4L807.0 826.7L806.5 826.7L806.0 827.1L805.5 827.7L805.0 828.3L804.5 829.1L804.0 831.0L803.5 833.3L803.0 827.8L802.5 824.8L791.0 825.1L790.5 825.2L790.0 825.2L789.5 825.3L789.0 825.4L788.5 825.4L788.0 825.5L787.5 825.5L787.0 825.6L786.5 825.9L786.0 826.0L785.5 826.2L785.0 826.3L784.5 826.5L784.0 826.7L783.5 826.8L783.0 827.4L782.5 827.6L782.0 828.5L781.5 829.1L781.0 830.9L780.5 830.7L780.0 825.5L779.5 825.6L779.0 825.8L778.5 825.9L778.0 825.9L777.5 826.1L777.0 826.3L776.5 826.6L776.0 826.9L775.5 827.2L775.0 827.5L774.5 828.2L774.0 829.1L773.5 830.7L773.0 832.3L772.5 826.4L772.0 825.6L771.5 825.7L771.0 825.9L770.5 826.0L770.0 826.1L769.5 826.3L769.0 826.4L768.5 826.6L768.0 827.1L767.5 827.3L767.0 827.7L766.5 828.9L766.0 829.8L765.5 831.8L765.0 829.2L764.5 825.6L764.0 825.6L763.5 825.7L763.0 825.9L762.5 826.0L762.0 826.3L761.5 826.4L761.0 826.7L760.5 827.0L760.0 827.4L759.5 827.6L759.0 828.5L758.5 829.0L758.0 831.0L757.5 831.7L757.0 825.5L756.5 825.6L756.0 825.8L755.5 825.9L755.0 826.0L754.5 826.1L754.0 826.4L753.5 826.4L753.0 826.9L752.5 827.3L752.0 827.5L751.5 828.3L751.0 828.8L750.5 830.5L750.0 832.2L749.5 827.4L749.0 824.8L691.5 825.1L691.0 825.2L690.5 825.2L690.0 825.3L689.5 825.3L689.0 825.4L688.5 825.5L688.0 825.5L687.5 825.6L687.0 825.8L686.5 825.8L686.0 826.1L685.5 826.2L685.0 826.4L684.5 826.5L684.0 826.9L683.5 827.1L683.0 827.8L682.5 828.3L682.0 829.6L681.5 831.1L681.0 833.2L680.5 825.5L680.0 825.6L679.5 825.7L679.0 825.8L678.5 826.0L678.0 826.2L677.5 826.4L677.0 826.5L676.5 826.6L676.0 827.1L675.5 827.4L675.0 828.2L674.5 828.8L674.0 829.7L673.5 832.6L673.0 828.0L672.5 825.6L672.0 825.7L671.5 825.8L671.0 825.9L670.5 826.1L670.0 826.2L669.5 826.5L669.0 826.6L668.5 827.0L668.0 827.3L667.5 827.9L667.0 828.6L666.5 829.2L666.0 831.2L665.5 830.6L665.0 825.5L664.5 825.6L664.0 825.8L663.5 825.9L663.0 826.0L662.5 826.2L662.0 826.3L661.5 826.5L661.0 826.7L660.5 827.3L660.0 827.6L659.5 828.3L659.0 828.9L658.5 830.1L658.0 832.3L657.5 826.4L657.0 825.5L656.5 825.7L656.0 825.8L655.5 826.0L655.0 826.2L654.5 826.2L654.0 826.4L653.5 826.6L653.0 826.9L652.5 827.5L652.0 827.9L651.5 828.9L651.0 830.1L650.5 831.6L650.0 828.8L649.5 825.5L649.0 825.7L648.5 825.7L648.0 825.9L647.5 826.1L647.0 826.3L646.5 826.3L646.0 826.6L645.5 827.0L645.0 827.3L644.5 827.6L644.0 828.4L643.5 829.2L643.0 830.8L642.5 831.5L642.0 825.6L641.5 825.6L641.0 825.7L640.5 825.8L640.0 826.0L639.5 826.1L639.0 826.4L638.5 826.5L638.0 826.8L637.5 827.3L637.0 827.7L636.5 828.1L636.0 829.0L635.5 830.2L635.0 832.6L634.5 827.8L634.0 825.5L633.5 825.7L633.0 825.7L632.5 825.9L632.0 826.1L631.5 826.2L631.0 826.4L630.5 826.7L630.0 827.0L629.5 827.5L629.0 827.6L628.5 828.6L628.0 829.4L627.5 831.1L627.0 830.4L626.5 825.6L626.0 825.6L625.5 825.8L625.0 825.8L624.5 826.0L624.0 826.2L623.5 826.4L623.0 826.6L622.5 826.9L622.0 827.0L621.5 827.7L621.0 828.4L620.5 829.3L620.0 830.3L619.5 832.6L619.0 826.1L618.5 824.8L568.5 825.0L568.0 825.1L567.5 825.1L567.0 825.2L566.5 825.2L566.0 825.3L565.5 825.4L565.0 825.4L564.5 825.5L564.0 825.7L563.5 825.7L563.0 825.8L562.5 826.0L562.0 826.2L561.5 826.4L561.0 826.5L560.5 826.7L560.0 827.3L559.5 827.7L559.0 828.2L558.5 829.4L558.0 830.6L557.5 833.6L557.0 826.3L556.5 824.8L545.5 825.1L545.0 825.1L544.5 825.1L544.0 825.2L543.5 825.2L543.0 825.3L542.5 825.4L542.0 825.4L541.5 825.5L541.0 825.6L540.5 825.7L540.0 825.8L539.5 825.9L539.0 826.2L538.5 826.5L538.0 826.7L537.5 826.9L537.0 827.2L536.5 827.6L536.0 828.4L535.5 829.1L535.0 830.6L534.5 832.8L534.0 826.2L533.5 825.6L533.0 825.7L532.5 825.8L532.0 825.9L531.5 826.1L531.0 826.2L530.5 826.4L530.0 826.8L529.5 826.9L529.0 827.6L528.5 827.7L528.0 828.7L527.5 830.1L527.0 832.2L526.5 828.7L526.0 825.5L525.5 825.6L525.0 825.8L524.5 825.8L524.0 826.1L523.5 826.2L523.0 826.5L522.5 826.7L522.0 826.9L521.5 827.2L521.0 827.9L520.5 828.5L520.0 829.4L519.5 831.1L519.0 831.2L518.5 825.5L518.0 825.6L517.5 825.7L517.0 825.9L516.5 826.0L516.0 826.2L515.5 826.3L515.0 826.4L514.5 826.7L514.0 827.2L513.5 827.5L513.0 828.3L512.5 829.2L512.0 830.2L511.5 832.1L511.0 827.7L510.5 825.6L510.0 825.7L509.5 825.8L509.0 825.9L508.5 826.0L508.0 826.3L507.5 826.5L507.0 826.6L506.5 826.8L506.0 827.3L505.5 827.6L505.0 828.3L504.5 829.8L504.0 831.0L503.5 830.4L503.0 824.8L445.0 825.1L444.5 825.1L444.0 825.2L443.5 825.3L443.0 825.3L442.5 825.4L442.0 825.4L441.5 825.6L441.0 825.6L440.5 825.8L440.0 825.9L439.5 826.0L439.0 826.3L438.5 826.4L438.0 826.6L437.5 827.0L437.0 827.2L436.5 827.7L436.0 828.5L435.5 829.6L435.0 831.8L434.5 832.5L434.0 825.5L433.5 825.5L433.0 825.6L432.5 825.9L432.0 826.0L431.5 826.2L431.0 826.4L430.5 826.4L430.0 826.8L429.5 827.2L429.0 827.4L428.5 827.9L428.0 829.0L427.5 830.1L427.0 831.8L426.5 828.0L426.0 825.5L425.5 825.6L425.0 825.7L424.5 825.9L424.0 826.1L423.5 826.3L423.0 826.5L422.5 826.8L422.0 827.1L421.5 827.4L421.0 827.9L420.5 828.2L420.0 829.3L419.5 831.3L419.0 830.5L418.5 825.5L418.0 825.6L417.5 825.7L417.0 825.9L416.5 826.1L416.0 826.2L415.5 826.3L415.0 826.5L414.5 826.9L414.0 827.0L413.5 827.6L413.0 828.3L412.5 828.8L412.0 830.5L411.5 833.0L411.0 826.4L410.5 825.5L410.0 825.7L409.5 825.8L409.0 826.0L408.5 826.0L408.0 826.4L407.5 826.5L407.0 826.7L406.5 827.0L406.0 827.4L405.5 827.9L405.0 828.7L404.5 829.6L404.0 831.3L403.5 829.3L403.0 825.5L402.5 825.6L402.0 825.8L401.5 825.9L401.0 826.1L400.5 826.3L400.0 826.5L399.5 826.6L399.0 827.0L398.5 827.2L398.0 827.9L397.5 828.1L397.0 829.4L396.5 831.0L396.0 831.5L395.5 825.5L395.0 825.6L394.5 825.8L394.0 825.9L393.5 826.1L393.0 826.2L392.5 826.3L392.0 826.5L391.5 826.7L391.0 827.1L390.5 827.5L390.0 827.9L389.5 829.1L389.0 830.3L388.5 832.2L388.0 827.3L387.5 825.6L387.0 825.7L386.5 825.8L386.0 826.0L385.5 826.0L385.0 826.4L384.5 826.5L384.0 826.6L383.5 827.0L383.0 827.5L382.5 827.6L382.0 828.4L381.5 829.5L381.0 831.7L380.5 829.8L380.0 825.5L379.5 825.6L379.0 825.8L378.5 825.9L378.0 826.0L377.5 826.3L377.0 826.2L376.5 826.5L376.0 826.8L375.5 827.3L375.0 827.6L374.5 828.2L374.0 828.9L373.5 830.1L373.0 832.8L372.5 826.1L372.0 824.8L323.5 825.1L323.0 825.1L322.5 825.1L322.0 825.2L321.5 825.2L321.0 825.3L320.5 825.3L320.0 825.5L319.5 825.5L319.0 825.6L318.5 825.7L318.0 825.8L317.5 825.9L317.0 826.2L316.5 826.3L316.0 826.7L315.5 826.7L315.0 827.0L314.5 827.7L314.0 828.0L313.5 829.3L313.0 830.5L312.5 833.0L312.0 827.8L311.5 824.8L299.0 825.1L298.5 825.2L298.0 825.2L297.5 825.3L297.0 825.3L296.5 825.4L296.0 825.4L295.5 825.6L295.0 825.6L294.5 825.8L294.0 825.8L293.5 826.0L293.0 826.1L292.5 826.2L292.0 826.5L291.5 826.9L291.0 827.1L290.5 827.7L290.0 828.3L289.5 828.9L289.0 829.8L288.5 832.2L288.0 827.8L287.5 825.5L287.0 825.7L286.5 825.8L286.0 826.0L285.5 826.0L285.0 826.4L284.5 826.5L284.0 826.6L283.5 826.9L283.0 827.2L282.5 827.8L282.0 828.3L281.5 829.2L281.0 831.1L280.5 830.4L280.0 825.6L279.5 825.6L279.0 825.8L278.5 825.9L278.0 826.0L277.5 826.1L277.0 826.3L276.5 826.5L276.0 827.0L275.5 827.1L275.0 827.7L274.5 828.2L274.0 829.2L273.5 830.5L273.0 832.7L272.5 826.3L272.0 825.6L271.5 825.7L271.0 825.8L270.5 826.0L270.0 826.2L269.5 826.2L269.0 826.5L268.5 826.9L268.0 826.9L267.5 827.3L267.0 827.9L266.5 828.9L266.0 829.5L265.5 831.6L265.0 828.6L264.5 825.5L264.0 825.6L263.5 825.8L263.0 825.9L262.5 826.0L262.0 826.1L261.5 826.5L261.0 826.6L260.5 827.0L260.0 827.2L259.5 827.8L259.0 828.6L258.5 829.4L258.0 830.5L257.5 831.5L257.0 824.8L199.5 825.1L199.0 825.1L198.5 825.1L198.0 825.2L197.5 825.2L197.0 825.3L196.5 825.3L196.0 825.4L195.5 825.6L195.0 825.6L194.5 825.7L194.0 825.9L193.5 825.9L193.0 826.2L192.5 826.3L192.0 826.6L191.5 826.9L191.0 827.1L190.5 827.7L190.0 828.4L189.5 829.5L189.0 830.7L188.5 834.1L188.0 828.0L187.5 825.6L187.0 825.7L186.5 825.8L186.0 825.9L185.5 826.1L185.0 826.2L184.5 826.4L184.0 826.8L183.5 826.9L183.0 827.3L182.5 827.7L182.0 828.6L181.5 829.2L181.0 830.8L180.5 830.3L180.0 825.6L179.5 825.6L179.0 825.8L178.5 825.9L178.0 826.1L177.5 826.2L177.0 826.3L176.5 826.5L176.0 826.8L175.5 827.3L175.0 827.6L174.5 828.4L174.0 829.1L173.5 829.9L173.0 832.5L172.5 826.2L172.0 825.5L171.5 825.7L171.0 825.8L170.5 826.0L170.0 826.1L169.5 826.3L169.0 826.4L168.5 826.9L168.0 826.9L167.5 827.5L167.0 828.0L166.5 828.4L166.0 829.7L165.5 831.2L165.0 828.7L164.5 825.6L164.0 825.6L163.5 825.8L163.0 825.9L162.5 826.0L162.0 826.3L161.5 826.4L161.0 826.6L160.5 826.7L160.0 827.4L159.5 827.6L159.0 828.1L158.5 829.3L158.0 830.8L157.5 830.7L157.0 824.8L156.0 824.8Z" fill="url(#g7)"/>
<rect x="156.65" y="809.3" width="1.3" height="15.5" fill="url(#g7)"/><rect x="157.25" y="824.8" width="1.3" height="7.5" fill="url(#g7)"/><rect x="164.35" y="809.3" width="1.3" height="15.5" fill="url(#g7)"/><rect x="164.95" y="824.8" width="1.3" height="7.5" fill="url(#g7)"/><rect x="172.04" y="809.3" width="1.3" height="15.5" fill="url(#g7)"/><rect x="172.64" y="824.8" width="1.3" height="7.5" fill="url(#g7)"/><rect x="179.74" y="809.3" width="1.3" height="15.5" fill="url(#g7)"/><rect x="180.34" y="824.8" width="1.3" height="7.5" fill="url(#g7)"/><rect x="187.44" y="800.8" width="1.3" height="24.0" fill="url(#g7)"/><rect x="188.04" y="824.8" width="1.3" height="9.6" fill="url(#g7)"/><rect x="256.65" y="806.8" width="1.3" height="18.0" fill="url(#g7)"/><rect x="257.25" y="824.8" width="1.3" height="8.0" fill="url(#g7)"/><rect x="264.35" y="806.8" width="1.3" height="18.0" fill="url(#g7)"/><rect x="264.95" y="824.8" width="1.3" height="8.0" fill="url(#g7)"/><rect x="272.04" y="806.8" width="1.3" height="18.0" fill="url(#g7)"/><rect x="272.64" y="824.8" width="1.3" height="8.0" fill="url(#g7)"/><rect x="279.74" y="806.8" width="1.3" height="18.0" fill="url(#g7)"/><rect x="280.34" y="824.8" width="1.3" height="8.0" fill="url(#g7)"/><rect x="287.44" y="807.8" width="1.3" height="17.0" fill="url(#g7)"/><rect x="288.04" y="824.8" width="1.3" height="8.0" fill="url(#g7)"/><rect x="311.45" y="802.8" width="1.3" height="22.0" fill="url(#g7)"/><rect x="312.05" y="824.8" width="1.3" height="9.0" fill="url(#g7)"/><rect x="372.05" y="809.8" width="1.3" height="15.0" fill="url(#g7)"/><rect x="372.65" y="824.8" width="1.3" height="8.0" fill="url(#g7)"/><rect x="379.75" y="809.8" width="1.3" height="15.0" fill="url(#g7)"/><rect x="380.35" y="824.8" width="1.3" height="8.0" fill="url(#g7)"/><rect x="387.44" y="809.8" width="1.3" height="15.0" fill="url(#g7)"/><rect x="388.04" y="824.8" width="1.3" height="8.0" fill="url(#g7)"/><rect x="395.14" y="809.8" width="1.3" height="15.0" fill="url(#g7)"/><rect x="395.74" y="824.8" width="1.3" height="8.0" fill="url(#g7)"/><rect x="402.84" y="809.8" width="1.3" height="15.0" fill="url(#g7)"/><rect x="403.44" y="824.8" width="1.3" height="8.0" fill="url(#g7)"/><rect x="410.53" y="809.8" width="1.3" height="15.0" fill="url(#g7)"/><rect x="411.13" y="824.8" width="1.3" height="8.0" fill="url(#g7)"/><rect x="418.23" y="809.8" width="1.3" height="15.0" fill="url(#g7)"/><rect x="418.83" y="824.8" width="1.3" height="8.0" fill="url(#g7)"/><rect x="425.93" y="809.8" width="1.3" height="15.0" fill="url(#g7)"/><rect x="426.53" y="824.8" width="1.3" height="8.0" fill="url(#g7)"/><rect x="433.62" y="800.8" width="1.3" height="24.0" fill="url(#g7)"/><rect x="434.22" y="824.8" width="1.3" height="9.5" fill="url(#g7)"/><rect x="502.75" y="805.8" width="1.3" height="19.0" fill="url(#g7)"/><rect x="503.35" y="824.8" width="1.3" height="8.0" fill="url(#g7)"/><rect x="510.45" y="805.8" width="1.3" height="19.0" fill="url(#g7)"/><rect x="511.05" y="824.8" width="1.3" height="8.0" fill="url(#g7)"/><rect x="518.14" y="805.8" width="1.3" height="19.0" fill="url(#g7)"/><rect x="518.74" y="824.8" width="1.3" height="8.0" fill="url(#g7)"/><rect x="525.84" y="805.8" width="1.3" height="19.0" fill="url(#g7)"/><rect x="526.44" y="824.8" width="1.3" height="8.0" fill="url(#g7)"/><rect x="533.54" y="806.8" width="1.3" height="18.0" fill="url(#g7)"/><rect x="534.14" y="824.8" width="1.3" height="8.0" fill="url(#g7)"/><rect x="556.55" y="801.8" width="1.3" height="23.0" fill="url(#g7)"/><rect x="557.15" y="824.8" width="1.3" height="9.0" fill="url(#g7)"/><rect x="618.55" y="809.8" width="1.3" height="15.0" fill="url(#g7)"/><rect x="619.15" y="824.8" width="1.3" height="8.0" fill="url(#g7)"/><rect x="626.25" y="809.8" width="1.3" height="15.0" fill="url(#g7)"/><rect x="626.85" y="824.8" width="1.3" height="8.0" fill="url(#g7)"/><rect x="633.94" y="809.8" width="1.3" height="15.0" fill="url(#g7)"/><rect x="634.54" y="824.8" width="1.3" height="8.0" fill="url(#g7)"/><rect x="641.64" y="809.8" width="1.3" height="15.0" fill="url(#g7)"/><rect x="642.24" y="824.8" width="1.3" height="8.0" fill="url(#g7)"/><rect x="649.34" y="809.8" width="1.3" height="15.0" fill="url(#g7)"/><rect x="649.94" y="824.8" width="1.3" height="8.0" fill="url(#g7)"/><rect x="657.03" y="809.8" width="1.3" height="15.0" fill="url(#g7)"/><rect x="657.63" y="824.8" width="1.3" height="8.0" fill="url(#g7)"/><rect x="664.73" y="809.8" width="1.3" height="15.0" fill="url(#g7)"/><rect x="665.33" y="824.8" width="1.3" height="8.0" fill="url(#g7)"/><rect x="672.43" y="809.8" width="1.3" height="15.0" fill="url(#g7)"/><rect x="673.03" y="824.8" width="1.3" height="8.0" fill="url(#g7)"/><rect x="680.12" y="800.8" width="1.3" height="24.0" fill="url(#g7)"/><rect x="680.73" y="824.8" width="1.3" height="9.5" fill="url(#g7)"/><rect x="748.95" y="806.8" width="1.3" height="18.0" fill="url(#g7)"/><rect x="749.55" y="824.8" width="1.3" height="8.0" fill="url(#g7)"/><rect x="756.65" y="806.8" width="1.3" height="18.0" fill="url(#g7)"/><rect x="757.25" y="824.8" width="1.3" height="8.0" fill="url(#g7)"/><rect x="764.34" y="806.8" width="1.3" height="18.0" fill="url(#g7)"/><rect x="764.94" y="824.8" width="1.3" height="8.0" fill="url(#g7)"/><rect x="772.04" y="806.8" width="1.3" height="18.0" fill="url(#g7)"/><rect x="772.64" y="824.8" width="1.3" height="8.0" fill="url(#g7)"/><rect x="779.74" y="807.8" width="1.3" height="17.0" fill="url(#g7)"/><rect x="780.34" y="824.8" width="1.3" height="8.0" fill="url(#g7)"/><rect x="802.45" y="801.8" width="1.3" height="23.0" fill="url(#g7)"/><rect x="803.05" y="824.8" width="1.3" height="9.0" fill="url(#g7)"/><rect x="864.45" y="809.8" width="1.3" height="15.0" fill="url(#g7)"/><rect x="865.05" y="824.8" width="1.3" height="8.0" fill="url(#g7)"/><rect x="872.15" y="809.8" width="1.3" height="15.0" fill="url(#g7)"/><rect x="872.75" y="824.8" width="1.3" height="8.0" fill="url(#g7)"/><rect x="879.84" y="809.8" width="1.3" height="15.0" fill="url(#g7)"/><rect x="880.44" y="824.8" width="1.3" height="8.0" fill="url(#g7)"/><rect x="887.54" y="809.8" width="1.3" height="15.0" fill="url(#g7)"/><rect x="888.14" y="824.8" width="1.3" height="8.0" fill="url(#g7)"/><rect x="895.24" y="809.8" width="1.3" height="15.0" fill="url(#g7)"/><rect x="895.84" y="824.8" width="1.3" height="8.0" fill="url(#g7)"/><rect x="902.93" y="809.8" width="1.3" height="15.0" fill="url(#g7)"/><rect x="903.53" y="824.8" width="1.3" height="8.0" fill="url(#g7)"/><rect x="910.63" y="809.8" width="1.3" height="15.0" fill="url(#g7)"/><rect x="911.23" y="824.8" width="1.3" height="8.0" fill="url(#g7)"/><rect x="918.33" y="809.8" width="1.3" height="15.0" fill="url(#g7)"/><rect x="918.93" y="824.8" width="1.3" height="8.0" fill="url(#g7)"/><rect x="926.02" y="776.8" width="1.3" height="48.0" fill="url(#g7)"/><rect x="926.62" y="824.8" width="1.3" height="19.0" fill="url(#g7)"/><rect x="995.45" y="787.8" width="1.3" height="37.0" fill="url(#g7)"/><rect x="996.05" y="824.8" width="1.3" height="12.0" fill="url(#g7)"/><rect x="1003.15" y="787.8" width="1.3" height="37.0" fill="url(#g7)"/><rect x="1003.75" y="824.8" width="1.3" height="12.0" fill="url(#g7)"/><rect x="1010.84" y="787.8" width="1.3" height="37.0" fill="url(#g7)"/><rect x="1011.44" y="824.8" width="1.3" height="12.0" fill="url(#g7)"/><rect x="1018.54" y="787.8" width="1.3" height="37.0" fill="url(#g7)"/><rect x="1019.14" y="824.8" width="1.3" height="12.0" fill="url(#g7)"/><rect x="1026.24" y="787.8" width="1.3" height="37.0" fill="url(#g7)"/><rect x="1026.84" y="824.8" width="1.3" height="12.0" fill="url(#g7)"/><rect x="1049.55" y="774.8" width="1.3" height="50.0" fill="url(#g7)"/><rect x="1050.15" y="824.8" width="1.3" height="17.0" fill="url(#g7)"/>
</svg>
<div class="a " style="left:260px;top:217px;width:67px;height:15px;border:1px solid #a0acac;color:#fff;font-size:10px;text-align:center;line-height:15px;-webkit-text-stroke:0.2px #fff">0.0 dB</div>
<div class="a " style="left:260px;top:317px;width:67px;height:15px;border:1px solid #a0acac;color:#fff;font-size:10px;text-align:center;line-height:15px;-webkit-text-stroke:0.2px #fff">0.0 dB</div>
<div class="a " style="left:260px;top:417px;width:67px;height:15px;border:1px solid #a0acac;color:#fff;font-size:10px;text-align:center;line-height:15px;-webkit-text-stroke:0.2px #fff">0.0 dB</div>
<div class="a " style="left:260px;top:517px;width:67px;height:15px;border:1px solid #a0acac;color:#fff;font-size:10px;text-align:center;line-height:15px;-webkit-text-stroke:0.2px #fff">0.0 dB</div>
<div class="a " style="left:260px;top:617px;width:67px;height:15px;border:1px solid #a0acac;color:#fff;font-size:10px;text-align:center;line-height:15px;-webkit-text-stroke:0.2px #fff">0.0 dB</div>
<div class="a " style="left:260px;top:717px;width:67px;height:15px;border:1px solid #a0acac;color:#fff;font-size:10px;text-align:center;line-height:15px;-webkit-text-stroke:0.2px #fff">0.0 dB</div>
<div class="a " style="left:260px;top:817px;width:67px;height:15px;border:1px solid #a0acac;color:#fff;font-size:10px;text-align:center;line-height:15px;-webkit-text-stroke:0.2px #fff">0.0 dB</div>
</div>
<div id="bord"></div>
</body></html>
